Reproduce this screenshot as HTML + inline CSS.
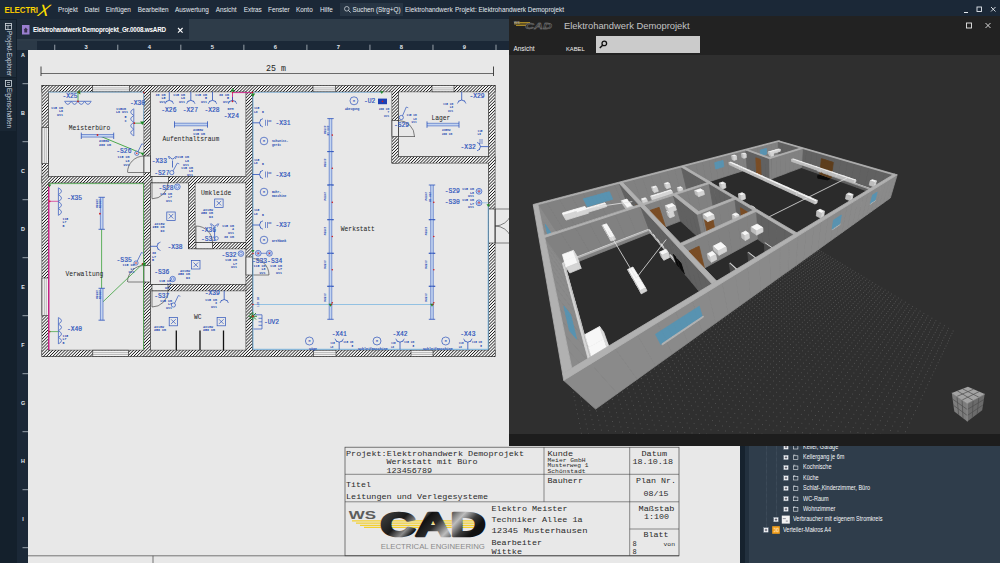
<!DOCTYPE html>
<html lang="de">
<head>
<meta charset="utf-8">
<title>ELECTRIX - Elektrohandwerk Demoprojekt</title>
<style>
*{box-sizing:border-box;margin:0;padding:0}
html,body{width:1000px;height:563px;overflow:hidden;background:#e8e8e8;font-family:"Liberation Sans",sans-serif;}
.abs{position:absolute}
#app{position:relative;width:1000px;height:563px;overflow:hidden;background:#e8e8e8}
#menubar{left:0;top:0;width:1000px;height:19px;background:#1b2837;color:#e3e8ee}
#menubar span,#menubar div{position:absolute;white-space:nowrap}
.mi{top:5px;font-size:6.4px;line-height:9px;color:#e6ebf0}
#sidebar{left:0;top:19px;width:17px;height:544px;background:#14202c}
#tabbar{left:17px;top:19px;width:983px;height:22px;background:#2e3c49}
#tab{left:0;top:0;width:172px;height:20px;background:#1f2c3a}
#rulertop{left:17px;top:40.6px;width:983px;height:9.4px;background:#1b2837}
#rulercorner{left:17px;top:41px;width:20px;height:9px;background:#2b3947}
#rulerleft{left:17px;top:50px;width:11px;height:513px;background:#1b2837}
#canvas{left:28px;top:50px;width:711px;height:513px;background:#e8e8e8;overflow:hidden}
#rightstrip{left:739.5px;top:430px;width:10px;height:133px;background:linear-gradient(90deg,#16222e 0,#16222e 45%,#22303e 45%,#22303e 100%)}
#treepanel{left:749px;top:430px;width:251px;height:133px;background:#2f3d4b;overflow:hidden}
#win3d{left:509px;top:15.5px;width:491px;height:430.5px;background:#2f2f2f;overflow:hidden}
#win3dtitle{left:0;top:0;width:491px;height:39.3px;background:#222222}
#win3dstatus{left:0;top:418px;width:491px;height:12.5px;background:#1d1d1d}
.vt{position:absolute;white-space:nowrap;transform-origin:0 0;transform:rotate(90deg);font-size:6.3px;line-height:8px;color:#d4dbe2}
.tree{position:absolute;white-space:nowrap;font-size:6.3px;line-height:8px;color:#f6f8fa}
</style>
</head>
<body>
<div id="app">
<div id="canvas" class="abs">
<svg class="abs" style="left:0;top:0" width="711" height="513" viewBox="28 50 711 513">
<defs><pattern id="hat" width="2.2" height="2.2" patternUnits="userSpaceOnUse" patternTransform="rotate(-45)"><rect width="2.2" height="2.2" fill="#f4f4f4"/><line x1="0" y1="1.1" x2="2.2" y2="1.1" stroke="#1a1a1a" stroke-width="0.75"/></pattern></defs>
<line x1="41.00" y1="73.50" x2="493.50" y2="73.50" stroke="#333" stroke-width="0.70" />
<line x1="41.00" y1="66.50" x2="41.00" y2="76.00" stroke="#333" stroke-width="0.90" />
<line x1="493.50" y1="66.50" x2="493.50" y2="76.00" stroke="#333" stroke-width="0.90" />
<text x="266.00" y="71.30" font-family="Liberation Mono, monospace" font-size="8.30" fill="#222" text-anchor="start" font-weight="normal">25 m</text>
<rect x="42.00" y="85.50" width="453.00" height="6.30" fill="url(#hat)" stroke="none" stroke-width="0.60"/>
<rect x="42.00" y="350.20" width="453.00" height="6.30" fill="url(#hat)" stroke="none" stroke-width="0.60"/>
<rect x="42.00" y="85.50" width="6.30" height="271.00" fill="url(#hat)" stroke="none" stroke-width="0.60"/>
<rect x="488.70" y="85.50" width="6.30" height="271.00" fill="url(#hat)" stroke="none" stroke-width="0.60"/>
<rect x="144.00" y="85.50" width="6.30" height="271.00" fill="url(#hat)" stroke="none" stroke-width="0.60"/>
<rect x="246.00" y="85.50" width="6.30" height="271.00" fill="url(#hat)" stroke="none" stroke-width="0.60"/>
<rect x="42.00" y="176.50" width="210.30" height="6.30" fill="url(#hat)" stroke="none" stroke-width="0.60"/>
<rect x="188.70" y="176.50" width="6.30" height="72.00" fill="url(#hat)" stroke="none" stroke-width="0.60"/>
<rect x="188.70" y="242.50" width="57.30" height="6.30" fill="url(#hat)" stroke="none" stroke-width="0.60"/>
<rect x="144.00" y="284.50" width="102.00" height="6.30" fill="url(#hat)" stroke="none" stroke-width="0.60"/>
<rect x="392.00" y="85.50" width="6.30" height="77.50" fill="url(#hat)" stroke="none" stroke-width="0.60"/>
<rect x="392.00" y="156.70" width="103.00" height="6.30" fill="url(#hat)" stroke="none" stroke-width="0.60"/>
<rect x="42.00" y="85.50" width="453.00" height="6.30" fill="none" stroke="#222" stroke-width="0.70"/>
<rect x="42.00" y="350.20" width="453.00" height="6.30" fill="none" stroke="#222" stroke-width="0.70"/>
<rect x="42.00" y="85.50" width="6.30" height="271.00" fill="none" stroke="#222" stroke-width="0.70"/>
<rect x="488.70" y="85.50" width="6.30" height="271.00" fill="none" stroke="#222" stroke-width="0.70"/>
<rect x="144.00" y="85.50" width="6.30" height="271.00" fill="none" stroke="#222" stroke-width="0.70"/>
<rect x="246.00" y="85.50" width="6.30" height="271.00" fill="none" stroke="#222" stroke-width="0.70"/>
<rect x="42.00" y="176.50" width="210.30" height="6.30" fill="none" stroke="#222" stroke-width="0.70"/>
<rect x="188.70" y="176.50" width="6.30" height="72.00" fill="none" stroke="#222" stroke-width="0.70"/>
<rect x="188.70" y="242.50" width="57.30" height="6.30" fill="none" stroke="#222" stroke-width="0.70"/>
<rect x="144.00" y="284.50" width="102.00" height="6.30" fill="none" stroke="#222" stroke-width="0.70"/>
<rect x="392.00" y="85.50" width="6.30" height="77.50" fill="none" stroke="#222" stroke-width="0.70"/>
<rect x="392.00" y="156.70" width="103.00" height="6.30" fill="none" stroke="#222" stroke-width="0.70"/>
<rect x="42.35" y="85.85" width="452.30" height="5.60" fill="url(#hat)" stroke="none" stroke-width="0.60"/>
<rect x="42.35" y="350.55" width="452.30" height="5.60" fill="url(#hat)" stroke="none" stroke-width="0.60"/>
<rect x="42.35" y="85.85" width="5.60" height="270.30" fill="url(#hat)" stroke="none" stroke-width="0.60"/>
<rect x="489.05" y="85.85" width="5.60" height="270.30" fill="url(#hat)" stroke="none" stroke-width="0.60"/>
<rect x="144.35" y="85.85" width="5.60" height="270.30" fill="url(#hat)" stroke="none" stroke-width="0.60"/>
<rect x="246.35" y="85.85" width="5.60" height="270.30" fill="url(#hat)" stroke="none" stroke-width="0.60"/>
<rect x="42.35" y="176.85" width="209.60" height="5.60" fill="url(#hat)" stroke="none" stroke-width="0.60"/>
<rect x="189.05" y="176.85" width="5.60" height="71.30" fill="url(#hat)" stroke="none" stroke-width="0.60"/>
<rect x="189.05" y="242.85" width="56.60" height="5.60" fill="url(#hat)" stroke="none" stroke-width="0.60"/>
<rect x="144.35" y="284.85" width="101.30" height="5.60" fill="url(#hat)" stroke="none" stroke-width="0.60"/>
<rect x="392.35" y="85.85" width="5.60" height="76.80" fill="url(#hat)" stroke="none" stroke-width="0.60"/>
<rect x="392.35" y="157.05" width="102.30" height="5.60" fill="url(#hat)" stroke="none" stroke-width="0.60"/>
<rect x="92.50" y="85.50" width="37.00" height="6.30" fill="#f2f2f2" stroke="#222" stroke-width="0.60"/>
<line x1="92.50" y1="87.89" x2="129.50" y2="87.89" stroke="#666" stroke-width="0.40" />
<line x1="92.50" y1="89.78" x2="129.50" y2="89.78" stroke="#666" stroke-width="0.40" />
<rect x="313.00" y="85.50" width="22.50" height="6.30" fill="#f2f2f2" stroke="#222" stroke-width="0.60"/>
<line x1="313.00" y1="87.89" x2="335.50" y2="87.89" stroke="#666" stroke-width="0.40" />
<line x1="313.00" y1="89.78" x2="335.50" y2="89.78" stroke="#666" stroke-width="0.40" />
<rect x="432.00" y="85.50" width="22.00" height="6.30" fill="#f2f2f2" stroke="#222" stroke-width="0.60"/>
<line x1="432.00" y1="87.89" x2="454.00" y2="87.89" stroke="#666" stroke-width="0.40" />
<line x1="432.00" y1="89.78" x2="454.00" y2="89.78" stroke="#666" stroke-width="0.40" />
<rect x="92.80" y="350.20" width="35.50" height="6.30" fill="#f2f2f2" stroke="#222" stroke-width="0.60"/>
<line x1="92.80" y1="352.59" x2="128.30" y2="352.59" stroke="#666" stroke-width="0.40" />
<line x1="92.80" y1="354.48" x2="128.30" y2="354.48" stroke="#666" stroke-width="0.40" />
<rect x="313.60" y="350.20" width="22.40" height="6.30" fill="#f2f2f2" stroke="#222" stroke-width="0.60"/>
<line x1="313.60" y1="352.59" x2="336.00" y2="352.59" stroke="#666" stroke-width="0.40" />
<line x1="313.60" y1="354.48" x2="336.00" y2="354.48" stroke="#666" stroke-width="0.40" />
<rect x="411.00" y="350.20" width="22.00" height="6.30" fill="#f2f2f2" stroke="#222" stroke-width="0.60"/>
<line x1="411.00" y1="352.59" x2="433.00" y2="352.59" stroke="#666" stroke-width="0.40" />
<line x1="411.00" y1="354.48" x2="433.00" y2="354.48" stroke="#666" stroke-width="0.40" />
<rect x="42.00" y="127.50" width="6.30" height="36.20" fill="#f2f2f2" stroke="#222" stroke-width="0.60"/>
<line x1="44.39" y1="127.50" x2="44.39" y2="163.70" stroke="#666" stroke-width="0.40" />
<line x1="46.28" y1="127.50" x2="46.28" y2="163.70" stroke="#666" stroke-width="0.40" />
<rect x="42.00" y="278.00" width="6.30" height="37.60" fill="#f2f2f2" stroke="#222" stroke-width="0.60"/>
<line x1="44.39" y1="278.00" x2="44.39" y2="315.60" stroke="#666" stroke-width="0.40" />
<line x1="46.28" y1="278.00" x2="46.28" y2="315.60" stroke="#666" stroke-width="0.40" />
<rect x="144.00" y="156.00" width="6.30" height="16.50" fill="#ececec" stroke="#222" stroke-width="0.60"/>
<line x1="128.00" y1="172.50" x2="144.00" y2="172.50" stroke="#333" stroke-width="0.60" />
<path d="M127.50 172.50A16.50 16.50 0 0 1 144.00 156.00" stroke="#333" stroke-width="0.60" fill="none"/>
<rect x="152.00" y="176.50" width="16.50" height="6.30" fill="#ececec" stroke="#222" stroke-width="0.60"/>
<line x1="152.00" y1="182.80" x2="152.00" y2="198.50" stroke="#333" stroke-width="0.60" />
<path d="M152.00 198.80A16.00 16.00 0 0 0 168.00 182.80" stroke="#333" stroke-width="0.60" fill="none"/>
<rect x="144.00" y="265.50" width="6.30" height="16.50" fill="#ececec" stroke="#222" stroke-width="0.60"/>
<line x1="128.00" y1="282.00" x2="144.00" y2="282.00" stroke="#333" stroke-width="0.60" />
<path d="M127.50 282.00A16.50 16.50 0 0 1 144.00 265.50" stroke="#333" stroke-width="0.60" fill="none"/>
<rect x="196.00" y="242.50" width="16.50" height="6.30" fill="#ececec" stroke="#222" stroke-width="0.60"/>
<line x1="196.00" y1="226.00" x2="196.00" y2="242.50" stroke="#333" stroke-width="0.60" />
<path d="M196.00 226.00A16.50 16.50 0 0 1 212.50 242.50" stroke="#333" stroke-width="0.60" fill="none"/>
<rect x="152.00" y="284.50" width="16.00" height="6.30" fill="#ececec" stroke="#222" stroke-width="0.60"/>
<line x1="152.00" y1="291.00" x2="152.00" y2="307.00" stroke="#333" stroke-width="0.60" />
<path d="M152.00 307.00A16.00 16.00 0 0 0 168.00 291.00" stroke="#333" stroke-width="0.60" fill="none"/>
<rect x="246.00" y="257.00" width="6.30" height="18.00" fill="#ececec" stroke="#222" stroke-width="0.60"/>
<line x1="252.50" y1="275.00" x2="269.00" y2="275.00" stroke="#333" stroke-width="0.60" />
<path d="M252.50 258.50A16.50 16.50 0 0 1 269.00 275.00" stroke="#333" stroke-width="0.60" fill="none"/>
<rect x="392.00" y="120.50" width="6.30" height="16.00" fill="#ececec" stroke="#222" stroke-width="0.60"/>
<line x1="398.50" y1="136.50" x2="415.00" y2="136.50" stroke="#333" stroke-width="0.60" />
<path d="M398.50 120.50A16.00 16.00 0 0 1 414.50 136.50" stroke="#333" stroke-width="0.60" fill="none"/>
<rect x="488.70" y="209.00" width="6.30" height="34.00" fill="#ececec" stroke="#222" stroke-width="0.60"/>
<path d="M495 209H511M495 243H511" stroke="#333" stroke-width="0.60" fill="none"/>
<path d="M495.00 226.00A17.00 17.00 0 0 0 510.97 214.81" stroke="#333" stroke-width="0.60" fill="none"/>
<path d="M495.00 226.00A17.00 17.00 0 0 1 510.97 237.19" stroke="#333" stroke-width="0.60" fill="none"/>
<line x1="495.00" y1="209.00" x2="495.00" y2="243.00" stroke="#333" stroke-width="0.50" />
<line x1="176.30" y1="330.50" x2="176.30" y2="350.30" stroke="#111" stroke-width="1.30" />
<line x1="200.00" y1="330.50" x2="200.00" y2="350.30" stroke="#111" stroke-width="1.30" />
<line x1="223.50" y1="330.50" x2="223.50" y2="350.30" stroke="#111" stroke-width="1.30" />
<line x1="48.80" y1="184.00" x2="48.80" y2="350.00" stroke="#d0208a" stroke-width="1.40" />
<path d="M49 183.6H143.5V350" stroke="#3aa03a" stroke-width="0.70" fill="none"/>
<path d="M253 92V349.3H488.2V206" stroke="#6fb0e0" stroke-width="0.90" fill="none"/>
<line x1="253.00" y1="304.50" x2="432.00" y2="304.50" stroke="#6fb0e0" stroke-width="0.70" />
<path d="M48.4 92.2H143.6" stroke="#6fb0e0" stroke-width="0.60" fill="none"/>
<line x1="253.00" y1="92.40" x2="381.80" y2="92.40" stroke="#6fb0e0" stroke-width="0.60" />
<path d="M143.6 92.2V123" stroke="#6fb0e0" stroke-width="0.60" fill="none"/>
<path d="M232.5 101.3V92.6H252.5" stroke="#d0208a" stroke-width="0.90" fill="none"/>
<line x1="78.00" y1="92.00" x2="78.00" y2="101.30" stroke="#3aa03a" stroke-width="0.80" />
<line x1="97.50" y1="135.00" x2="142.50" y2="153.70" stroke="#3aa03a" stroke-width="0.90" />
<line x1="101.60" y1="213.70" x2="101.60" y2="303.40" stroke="#3aa03a" stroke-width="0.80" />
<line x1="101.30" y1="303.40" x2="142.50" y2="264.00" stroke="#3aa03a" stroke-width="0.80" />
<line x1="134.30" y1="123.20" x2="142.00" y2="123.20" stroke="#3aa03a" stroke-width="0.80" />
<text x="62.50" y="98.30" font-family="Liberation Mono, monospace" font-size="6.3" fill="#2c53bb" stroke="#2c53bb" stroke-width="0.18">-X25</text>
<line x1="64.50" y1="101.30" x2="91.30" y2="101.30" stroke="#2c53bb" stroke-width="0.70" />
<path d="M64.77 101.60q3.08 5.60 6.16 0" stroke="#2c53bb" stroke-width="0.70" fill="none"/>
<path d="M71.47 101.60q3.08 5.60 6.16 0" stroke="#2c53bb" stroke-width="0.70" fill="none"/>
<path d="M78.17 101.60q3.08 5.60 6.16 0" stroke="#2c53bb" stroke-width="0.70" fill="none"/>
<path d="M84.87 101.60q3.08 5.60 6.16 0" stroke="#2c53bb" stroke-width="0.70" fill="none"/>
<circle cx="78.00" cy="101.30" r="0.90" fill="#d02020" stroke="none" stroke-width="0.00"/>
<polygon points="80.32,90.10 80.32,94.50 76.80,92.30" fill="#1f8a2a"/>
<text x="62.88" y="108.50" font-family="Liberation Mono, monospace" font-size="3.30" fill="#2448b0" text-anchor="end" font-weight="bold">115 cm</text>
<text x="62.88" y="112.20" font-family="Liberation Mono, monospace" font-size="3.30" fill="#2448b0" text-anchor="end" font-weight="bold">L6</text>
<text x="62.88" y="115.90" font-family="Liberation Mono, monospace" font-size="3.30" fill="#2448b0" text-anchor="end" font-weight="bold">UV1</text>
<text x="130.00" y="104.50" font-family="Liberation Mono, monospace" font-size="6.3" fill="#2c53bb" stroke="#2c53bb" stroke-width="0.18">-X30</text>
<line x1="133.80" y1="108.70" x2="133.80" y2="136.00" stroke="#2c53bb" stroke-width="0.70" />
<path d="M133.50 108.97q-5.60 3.14 0 6.28" stroke="#2c53bb" stroke-width="0.70" fill="none"/>
<path d="M133.50 115.80q-5.60 3.14 0 6.28" stroke="#2c53bb" stroke-width="0.70" fill="none"/>
<path d="M133.50 122.62q-5.60 3.14 0 6.28" stroke="#2c53bb" stroke-width="0.70" fill="none"/>
<path d="M133.50 129.45q-5.60 3.14 0 6.28" stroke="#2c53bb" stroke-width="0.70" fill="none"/>
<circle cx="134.30" cy="123.20" r="0.90" fill="#d02020" stroke="none" stroke-width="0.00"/>
<polygon points="140.10,121.38 144.50,121.38 142.30,124.90" fill="#1f8a2a"/>
<circle cx="143.80" cy="92.60" r="0.80" fill="#d02020" stroke="none" stroke-width="0.00"/>
<circle cx="79.00" cy="92.20" r="0.70" fill="#d02020" stroke="none" stroke-width="0.00"/>
<text x="116.00" y="109.50" font-family="Liberation Mono, monospace" font-size="3.30" fill="#2448b0" text-anchor="start" font-weight="bold">115cm</text>
<text x="116.00" y="113.20" font-family="Liberation Mono, monospace" font-size="3.30" fill="#2448b0" text-anchor="start" font-weight="bold">L6 UV1</text>
<text x="124.50" y="118.00" font-family="Liberation Mono, monospace" font-size="3.30" fill="#2448b0" text-anchor="start" font-weight="bold">5</text>
<text x="124.50" y="121.70" font-family="Liberation Mono, monospace" font-size="3.30" fill="#2448b0" text-anchor="start" font-weight="bold">x</text>
<rect x="81.30" y="134.50" width="32.40" height="2.60" fill="#c3d4f0" stroke="none" stroke-width="0.60"/>
<line x1="81.30" y1="134.50" x2="113.70" y2="134.50" stroke="#2c53bb" stroke-width="0.55" />
<line x1="81.30" y1="137.10" x2="113.70" y2="137.10" stroke="#2c53bb" stroke-width="0.55" />
<line x1="81.30" y1="132.60" x2="81.30" y2="139.00" stroke="#2c53bb" stroke-width="0.80" />
<line x1="113.70" y1="132.60" x2="113.70" y2="139.00" stroke="#2c53bb" stroke-width="0.80" />
<circle cx="97.50" cy="135.00" r="0.90" fill="#d02020" stroke="none" stroke-width="0.00"/>
<text x="99.00" y="142.30" font-family="Liberation Mono, monospace" font-size="3.30" fill="#2448b0" text-anchor="start" font-weight="bold">2x58W</text>
<text x="99.00" y="146.00" font-family="Liberation Mono, monospace" font-size="3.30" fill="#2448b0" text-anchor="start" font-weight="bold">200 cm</text>
<text x="116.30" y="152.80" font-family="Liberation Mono, monospace" font-size="6.3" fill="#2c53bb" stroke="#2c53bb" stroke-width="0.18">-S26</text>
<circle cx="136.80" cy="153.30" r="2.10" fill="#e8e8e8" stroke="#2c53bb" stroke-width="0.70"/>
<circle cx="136.80" cy="153.30" r="0.80" fill="#d02020" stroke="none" stroke-width="0.00"/>
<line x1="138.00" y1="151.60" x2="141.80" y2="143.80" stroke="#2c53bb" stroke-width="0.70" />
<line x1="141.80" y1="143.80" x2="143.80" y2="144.60" stroke="#2c53bb" stroke-width="0.60" />
<polygon points="140.80,152.82 144.40,152.82 142.60,155.70" fill="#1f8a2a"/>
<text x="129.38" y="158.20" font-family="Liberation Mono, monospace" font-size="3.30" fill="#2448b0" text-anchor="end" font-weight="bold">115 cm</text>
<text x="129.38" y="161.90" font-family="Liberation Mono, monospace" font-size="3.30" fill="#2448b0" text-anchor="end" font-weight="bold">L6</text>
<text x="129.38" y="165.60" font-family="Liberation Mono, monospace" font-size="3.30" fill="#2448b0" text-anchor="end" font-weight="bold">UV1</text>
<line x1="169.30" y1="91.80" x2="169.30" y2="100.40" stroke="#2c53bb" stroke-width="0.80" />
<path d="M166.10 101.60q3.20 -2.60 6.40 0" stroke="#2c53bb" stroke-width="0.80" fill="none"/>
<path d="M166.70 100.80l-1.6 3M171.90 100.80l1.6 3" stroke="#2c53bb" stroke-width="0.70" fill="none"/>
<text x="161.30" y="112.20" font-family="Liberation Mono, monospace" font-size="6.3" fill="#2c53bb" stroke="#2c53bb" stroke-width="0.18">-X26</text>
<line x1="190.80" y1="91.80" x2="190.80" y2="100.40" stroke="#2c53bb" stroke-width="0.80" />
<path d="M187.60 101.60q3.20 -2.60 6.40 0" stroke="#2c53bb" stroke-width="0.80" fill="none"/>
<path d="M188.20 100.80l-1.6 3M193.40 100.80l1.6 3" stroke="#2c53bb" stroke-width="0.70" fill="none"/>
<text x="182.80" y="112.20" font-family="Liberation Mono, monospace" font-size="6.3" fill="#2c53bb" stroke="#2c53bb" stroke-width="0.18">-X27</text>
<line x1="212.50" y1="91.80" x2="212.50" y2="100.40" stroke="#2c53bb" stroke-width="0.80" />
<path d="M209.30 101.60q3.20 -2.60 6.40 0" stroke="#2c53bb" stroke-width="0.80" fill="none"/>
<path d="M209.90 100.80l-1.6 3M215.10 100.80l1.6 3" stroke="#2c53bb" stroke-width="0.70" fill="none"/>
<text x="204.50" y="112.20" font-family="Liberation Mono, monospace" font-size="6.3" fill="#2c53bb" stroke="#2c53bb" stroke-width="0.18">-X28</text>
<text x="165.38" y="95.50" font-family="Liberation Mono, monospace" font-size="3.30" fill="#2448b0" text-anchor="end" font-weight="bold">30 cm</text>
<text x="165.38" y="99.20" font-family="Liberation Mono, monospace" font-size="3.30" fill="#2448b0" text-anchor="end" font-weight="bold">L5</text>
<text x="165.38" y="102.90" font-family="Liberation Mono, monospace" font-size="3.30" fill="#2448b0" text-anchor="end" font-weight="bold">UV1</text>
<text x="184.88" y="95.50" font-family="Liberation Mono, monospace" font-size="3.30" fill="#2448b0" text-anchor="end" font-weight="bold">115 cm</text>
<text x="184.88" y="99.20" font-family="Liberation Mono, monospace" font-size="3.30" fill="#2448b0" text-anchor="end" font-weight="bold">L6</text>
<text x="184.88" y="102.90" font-family="Liberation Mono, monospace" font-size="3.30" fill="#2448b0" text-anchor="end" font-weight="bold">UV1</text>
<text x="206.88" y="95.50" font-family="Liberation Mono, monospace" font-size="3.30" fill="#2448b0" text-anchor="end" font-weight="bold">115 cm</text>
<text x="206.88" y="99.20" font-family="Liberation Mono, monospace" font-size="3.30" fill="#2448b0" text-anchor="end" font-weight="bold">5</text>
<text x="206.88" y="102.90" font-family="Liberation Mono, monospace" font-size="3.30" fill="#2448b0" text-anchor="end" font-weight="bold">UV1</text>
<text x="228.88" y="95.50" font-family="Liberation Mono, monospace" font-size="3.30" fill="#2448b0" text-anchor="end" font-weight="bold">30 cm</text>
<text x="228.88" y="99.20" font-family="Liberation Mono, monospace" font-size="3.30" fill="#2448b0" text-anchor="end" font-weight="bold">5</text>
<text x="228.88" y="102.90" font-family="Liberation Mono, monospace" font-size="3.30" fill="#2448b0" text-anchor="end" font-weight="bold">UV1</text>
<line x1="232.50" y1="97.00" x2="232.50" y2="100.40" stroke="#2c53bb" stroke-width="0.80" />
<path d="M229.30 101.60q3.20 -2.60 6.40 0" stroke="#2c53bb" stroke-width="0.80" fill="none"/>
<path d="M229.90 100.80l-1.6 3M235.10 100.80l1.6 3" stroke="#2c53bb" stroke-width="0.70" fill="none"/>
<circle cx="232.50" cy="101.30" r="0.90" fill="#d02020" stroke="none" stroke-width="0.00"/>
<polygon points="230.30,91.62 234.70,91.62 232.50,88.10" fill="#1f8a2a"/>
<polygon points="250.80,93.48 255.20,93.48 253.00,97.00" fill="#1f8a2a"/>
<circle cx="252.60" cy="92.60" r="0.80" fill="#d02020" stroke="none" stroke-width="0.00"/>
<circle cx="232.50" cy="92.60" r="0.70" fill="#d02020" stroke="none" stroke-width="0.00"/>
<text x="227.50" y="109.50" font-family="Liberation Mono, monospace" font-size="3.40" fill="#2448b0" text-anchor="start" font-weight="bold">NYM</text>
<text x="223.80" y="118.30" font-family="Liberation Mono, monospace" font-size="6.3" fill="#2c53bb" stroke="#2c53bb" stroke-width="0.18">-X24</text>
<rect x="174.50" y="123.20" width="33.00" height="2.60" fill="#c3d4f0" stroke="none" stroke-width="0.60"/>
<line x1="174.50" y1="123.20" x2="207.50" y2="123.20" stroke="#2c53bb" stroke-width="0.55" />
<line x1="174.50" y1="125.80" x2="207.50" y2="125.80" stroke="#2c53bb" stroke-width="0.55" />
<line x1="174.50" y1="121.30" x2="174.50" y2="127.70" stroke="#2c53bb" stroke-width="0.80" />
<line x1="207.50" y1="121.30" x2="207.50" y2="127.70" stroke="#2c53bb" stroke-width="0.80" />
<text x="193.00" y="130.80" font-family="Liberation Mono, monospace" font-size="3.30" fill="#2448b0" text-anchor="start" font-weight="bold">2x58W</text>
<text x="193.00" y="134.50" font-family="Liberation Mono, monospace" font-size="3.30" fill="#2448b0" text-anchor="start" font-weight="bold">115 cm</text>
<text x="151.80" y="162.50" font-family="Liberation Mono, monospace" font-size="6.3" fill="#2c53bb" stroke="#2c53bb" stroke-width="0.18">-X33</text>
<path d="M172.5 167.5V160.5M169.3 156.3q3.2 5.5 6.4 0" stroke="#2c53bb" stroke-width="0.80" fill="none"/>
<path d="M169.6 159l-1.4 -3M175.4 159l1.4 -3" stroke="#2c53bb" stroke-width="0.70" fill="none"/>
<text x="188.88" y="158.30" font-family="Liberation Mono, monospace" font-size="3.30" fill="#2448b0" text-anchor="end" font-weight="bold">115 cm</text>
<text x="188.88" y="162.00" font-family="Liberation Mono, monospace" font-size="3.30" fill="#2448b0" text-anchor="end" font-weight="bold">L6</text>
<text x="188.88" y="165.70" font-family="Liberation Mono, monospace" font-size="3.30" fill="#2448b0" text-anchor="end" font-weight="bold">UV1</text>
<text x="154.30" y="175.30" font-family="Liberation Mono, monospace" font-size="6.3" fill="#2c53bb" stroke="#2c53bb" stroke-width="0.18">-S27</text>
<circle cx="171.80" cy="172.60" r="2.10" fill="#e8e8e8" stroke="#2c53bb" stroke-width="0.70"/>
<line x1="173.00" y1="170.90" x2="177.30" y2="163.10" stroke="#2c53bb" stroke-width="0.70" />
<line x1="177.30" y1="163.10" x2="179.30" y2="163.90" stroke="#2c53bb" stroke-width="0.60" />
<text x="192.88" y="168.50" font-family="Liberation Mono, monospace" font-size="3.30" fill="#2448b0" text-anchor="end" font-weight="bold">115 cm</text>
<text x="192.88" y="172.20" font-family="Liberation Mono, monospace" font-size="3.30" fill="#2448b0" text-anchor="end" font-weight="bold">L6</text>
<text x="192.88" y="175.90" font-family="Liberation Mono, monospace" font-size="3.30" fill="#2448b0" text-anchor="end" font-weight="bold">UV1</text>
<text x="158.50" y="189.80" font-family="Liberation Mono, monospace" font-size="6.3" fill="#2c53bb" stroke="#2c53bb" stroke-width="0.18">-S28</text>
<circle cx="177.30" cy="186.80" r="2.90" fill="#dfe8f8" stroke="#2c53bb" stroke-width="0.70"/>
<circle cx="177.30" cy="186.80" r="1.45" fill="none" stroke="#2c53bb" stroke-width="0.50"/>
<text x="171.88" y="194.50" font-family="Liberation Mono, monospace" font-size="3.30" fill="#2448b0" text-anchor="end" font-weight="bold">115 cm</text>
<text x="171.88" y="198.20" font-family="Liberation Mono, monospace" font-size="3.30" fill="#2448b0" text-anchor="end" font-weight="bold">L7</text>
<text x="171.88" y="201.90" font-family="Liberation Mono, monospace" font-size="3.30" fill="#2448b0" text-anchor="end" font-weight="bold">UV1</text>
<rect x="166.80" y="212.00" width="8.40" height="8.40" fill="#e8e8e8" stroke="#2c53bb" stroke-width="0.70"/>
<path d="M168.69 213.89l4.62 4.62M173.31 213.89l-4.62 4.62" stroke="#2c53bb" stroke-width="0.70" fill="none"/>
<rect x="191.60" y="260.60" width="8.40" height="8.40" fill="#e8e8e8" stroke="#2c53bb" stroke-width="0.70"/>
<path d="M193.49 262.49l4.62 4.62M198.11 262.49l-4.62 4.62" stroke="#2c53bb" stroke-width="0.70" fill="none"/>
<rect x="214.70" y="199.00" width="8.40" height="8.40" fill="#e8e8e8" stroke="#2c53bb" stroke-width="0.70"/>
<path d="M216.59 200.89l4.62 4.62M221.21 200.89l-4.62 4.62" stroke="#2c53bb" stroke-width="0.70" fill="none"/>
<rect x="169.20" y="317.40" width="8.40" height="8.40" fill="#e8e8e8" stroke="#2c53bb" stroke-width="0.70"/>
<path d="M171.09 319.29l4.62 4.62M175.71 319.29l-4.62 4.62" stroke="#2c53bb" stroke-width="0.70" fill="none"/>
<rect x="217.10" y="317.40" width="8.40" height="8.40" fill="#e8e8e8" stroke="#2c53bb" stroke-width="0.70"/>
<path d="M218.99 319.29l4.62 4.62M223.61 319.29l-4.62 4.62" stroke="#2c53bb" stroke-width="0.70" fill="none"/>
<text x="164.38" y="224.50" font-family="Liberation Mono, monospace" font-size="3.30" fill="#2448b0" text-anchor="end" font-weight="bold">4x18W</text>
<text x="164.38" y="228.20" font-family="Liberation Mono, monospace" font-size="3.30" fill="#2448b0" text-anchor="end" font-weight="bold">250 cm</text>
<text x="164.38" y="231.90" font-family="Liberation Mono, monospace" font-size="3.30" fill="#2448b0" text-anchor="end" font-weight="bold">D3</text>
<text x="189.88" y="271.50" font-family="Liberation Mono, monospace" font-size="3.30" fill="#2448b0" text-anchor="end" font-weight="bold">4x18W</text>
<text x="189.88" y="275.20" font-family="Liberation Mono, monospace" font-size="3.30" fill="#2448b0" text-anchor="end" font-weight="bold">250 cm</text>
<text x="189.88" y="278.90" font-family="Liberation Mono, monospace" font-size="3.30" fill="#2448b0" text-anchor="end" font-weight="bold">D3</text>
<text x="212.88" y="210.50" font-family="Liberation Mono, monospace" font-size="3.30" fill="#2448b0" text-anchor="end" font-weight="bold">4x18W</text>
<text x="212.88" y="214.20" font-family="Liberation Mono, monospace" font-size="3.30" fill="#2448b0" text-anchor="end" font-weight="bold">250 cm</text>
<text x="212.88" y="217.90" font-family="Liberation Mono, monospace" font-size="3.30" fill="#2448b0" text-anchor="end" font-weight="bold">D3</text>
<text x="154.00" y="327.50" font-family="Liberation Mono, monospace" font-size="3.30" fill="#2448b0" text-anchor="start" font-weight="bold">4x18W</text>
<text x="154.00" y="331.20" font-family="Liberation Mono, monospace" font-size="3.30" fill="#2448b0" text-anchor="start" font-weight="bold">250 cm</text>
<text x="203.00" y="327.50" font-family="Liberation Mono, monospace" font-size="3.30" fill="#2448b0" text-anchor="start" font-weight="bold">4x18W</text>
<text x="203.00" y="331.20" font-family="Liberation Mono, monospace" font-size="3.30" fill="#2448b0" text-anchor="start" font-weight="bold">250 cm</text>
<line x1="150.30" y1="246.30" x2="157.10" y2="246.30" stroke="#2c53bb" stroke-width="0.80" />
<path d="M158.30 243.10q-2.60 3.20 0 6.40" stroke="#2c53bb" stroke-width="0.80" fill="none"/>
<path d="M157.50 243.70l3 -1.6M157.50 248.90l3 1.6" stroke="#2c53bb" stroke-width="0.70" fill="none"/>
<text x="167.40" y="249.00" font-family="Liberation Mono, monospace" font-size="6.3" fill="#2c53bb" stroke="#2c53bb" stroke-width="0.18">-X38</text>
<text x="152.00" y="254.00" font-family="Liberation Mono, monospace" font-size="3.30" fill="#2448b0" text-anchor="start" font-weight="bold">30</text>
<text x="152.00" y="257.70" font-family="Liberation Mono, monospace" font-size="3.30" fill="#2448b0" text-anchor="start" font-weight="bold">L7</text>
<text x="152.00" y="261.40" font-family="Liberation Mono, monospace" font-size="3.30" fill="#2448b0" text-anchor="start" font-weight="bold">B</text>
<text x="154.20" y="274.30" font-family="Liberation Mono, monospace" font-size="6.3" fill="#2c53bb" stroke="#2c53bb" stroke-width="0.18">-S36</text>
<circle cx="172.70" cy="279.00" r="2.70" fill="#dfe8f8" stroke="#2c53bb" stroke-width="0.70"/>
<circle cx="172.70" cy="279.00" r="1.35" fill="none" stroke="#2c53bb" stroke-width="0.50"/>
<text x="170.88" y="281.50" font-family="Liberation Mono, monospace" font-size="3.30" fill="#2448b0" text-anchor="end" font-weight="bold">115 cm</text>
<text x="170.88" y="285.20" font-family="Liberation Mono, monospace" font-size="3.30" fill="#2448b0" text-anchor="end" font-weight="bold">L7</text>
<text x="170.88" y="288.90" font-family="Liberation Mono, monospace" font-size="3.30" fill="#2448b0" text-anchor="end" font-weight="bold">UV1</text>
<text x="221.40" y="257.20" font-family="Liberation Mono, monospace" font-size="6.3" fill="#2c53bb" stroke="#2c53bb" stroke-width="0.18">-S32</text>
<circle cx="240.90" cy="253.60" r="2.80" fill="#dfe8f8" stroke="#2c53bb" stroke-width="0.70"/>
<circle cx="240.90" cy="253.60" r="1.40" fill="none" stroke="#2c53bb" stroke-width="0.50"/>
<text x="236.88" y="261.00" font-family="Liberation Mono, monospace" font-size="3.30" fill="#2448b0" text-anchor="end" font-weight="bold">115 cm</text>
<text x="236.88" y="264.70" font-family="Liberation Mono, monospace" font-size="3.30" fill="#2448b0" text-anchor="end" font-weight="bold">L7</text>
<text x="236.88" y="268.40" font-family="Liberation Mono, monospace" font-size="3.30" fill="#2448b0" text-anchor="end" font-weight="bold">UV1</text>
<text x="201.00" y="232.40" font-family="Liberation Mono, monospace" font-size="6.3" fill="#2c53bb" stroke="#2c53bb" stroke-width="0.18">-X36</text>
<text x="201.00" y="241.30" font-family="Liberation Mono, monospace" font-size="6.3" fill="#2c53bb" stroke="#2c53bb" stroke-width="0.18">-S31</text>
<path d="M214.6 236V229M211.4 223.5q3.2 5.5 6.4 0" stroke="#2c53bb" stroke-width="0.80" fill="none"/>
<path d="M211.8 226.6l-1.4 -3M217.4 226.6l1.4 -3" stroke="#2c53bb" stroke-width="0.70" fill="none"/>
<circle cx="216.50" cy="238.30" r="1.80" fill="none" stroke="#2c53bb" stroke-width="0.60"/>
<text x="233.88" y="226.50" font-family="Liberation Mono, monospace" font-size="3.30" fill="#2448b0" text-anchor="end" font-weight="bold">115 cm</text>
<text x="233.88" y="230.20" font-family="Liberation Mono, monospace" font-size="3.30" fill="#2448b0" text-anchor="end" font-weight="bold">4</text>
<text x="233.88" y="233.90" font-family="Liberation Mono, monospace" font-size="3.30" fill="#2448b0" text-anchor="end" font-weight="bold">UV1</text>
<text x="233.88" y="237.60" font-family="Liberation Mono, monospace" font-size="3.30" fill="#2448b0" text-anchor="end" font-weight="bold">30 cm</text>
<text x="116.60" y="261.50" font-family="Liberation Mono, monospace" font-size="6.3" fill="#2c53bb" stroke="#2c53bb" stroke-width="0.18">-S35</text>
<circle cx="136.00" cy="263.00" r="2.10" fill="#e8e8e8" stroke="#2c53bb" stroke-width="0.70"/>
<circle cx="136.00" cy="263.00" r="0.80" fill="#d02020" stroke="none" stroke-width="0.00"/>
<line x1="137.20" y1="261.30" x2="141.50" y2="252.50" stroke="#2c53bb" stroke-width="0.70" />
<line x1="141.50" y1="252.50" x2="143.50" y2="253.30" stroke="#2c53bb" stroke-width="0.60" />
<circle cx="142.60" cy="264.00" r="0.90" fill="#d02020" stroke="none" stroke-width="0.00"/>
<polygon points="145.52,262.00 145.52,266.40 142.00,264.20" fill="#1f8a2a"/>
<text x="134.38" y="266.00" font-family="Liberation Mono, monospace" font-size="3.30" fill="#2448b0" text-anchor="end" font-weight="bold">115 cm</text>
<text x="134.38" y="269.70" font-family="Liberation Mono, monospace" font-size="3.30" fill="#2448b0" text-anchor="end" font-weight="bold">L7</text>
<text x="134.38" y="273.40" font-family="Liberation Mono, monospace" font-size="3.30" fill="#2448b0" text-anchor="end" font-weight="bold">UV1</text>
<text x="66.90" y="200.40" font-family="Liberation Mono, monospace" font-size="6.3" fill="#2c53bb" stroke="#2c53bb" stroke-width="0.18">-X35</text>
<line x1="58.40" y1="187.70" x2="58.40" y2="215.50" stroke="#2c53bb" stroke-width="0.70" />
<path d="M58.70 187.98q5.60 3.20 0 6.39" stroke="#2c53bb" stroke-width="0.70" fill="none"/>
<path d="M58.70 194.93q5.60 3.20 0 6.39" stroke="#2c53bb" stroke-width="0.70" fill="none"/>
<path d="M58.70 201.88q5.60 3.20 0 6.39" stroke="#2c53bb" stroke-width="0.70" fill="none"/>
<path d="M58.70 208.83q5.60 3.20 0 6.39" stroke="#2c53bb" stroke-width="0.70" fill="none"/>
<circle cx="49.70" cy="201.30" r="0.90" fill="#d02020" stroke="none" stroke-width="0.00"/>
<line x1="49.70" y1="201.30" x2="58.40" y2="201.30" stroke="#d0208a" stroke-width="0.70" />
<text x="62.50" y="219.50" font-family="Liberation Mono, monospace" font-size="3.20" fill="#2448b0" text-anchor="start" font-weight="bold">115</text>
<text x="62.50" y="223.20" font-family="Liberation Mono, monospace" font-size="3.20" fill="#2448b0" text-anchor="start" font-weight="bold">L7</text>
<text x="62.50" y="226.90" font-family="Liberation Mono, monospace" font-size="3.20" fill="#2448b0" text-anchor="start" font-weight="bold">B</text>
<text x="66.90" y="330.70" font-family="Liberation Mono, monospace" font-size="6.3" fill="#2c53bb" stroke="#2c53bb" stroke-width="0.18">-X40</text>
<line x1="58.40" y1="317.40" x2="58.40" y2="344.00" stroke="#2c53bb" stroke-width="0.70" />
<path d="M58.70 317.67q5.60 3.06 0 6.12" stroke="#2c53bb" stroke-width="0.70" fill="none"/>
<path d="M58.70 324.32q5.60 3.06 0 6.12" stroke="#2c53bb" stroke-width="0.70" fill="none"/>
<path d="M58.70 330.97q5.60 3.06 0 6.12" stroke="#2c53bb" stroke-width="0.70" fill="none"/>
<path d="M58.70 337.62q5.60 3.06 0 6.12" stroke="#2c53bb" stroke-width="0.70" fill="none"/>
<circle cx="49.70" cy="331.60" r="0.90" fill="#d02020" stroke="none" stroke-width="0.00"/>
<line x1="49.70" y1="331.60" x2="58.40" y2="331.60" stroke="#3aa03a" stroke-width="0.70" />
<text x="62.50" y="336.50" font-family="Liberation Mono, monospace" font-size="3.20" fill="#2448b0" text-anchor="start" font-weight="bold">115</text>
<text x="62.50" y="340.20" font-family="Liberation Mono, monospace" font-size="3.20" fill="#2448b0" text-anchor="start" font-weight="bold">L7</text>
<text x="62.50" y="343.90" font-family="Liberation Mono, monospace" font-size="3.20" fill="#2448b0" text-anchor="start" font-weight="bold">B</text>
<rect x="100.40" y="197.30" width="2.60" height="32.00" fill="#c3d4f0" stroke="none" stroke-width="0.60"/>
<line x1="100.40" y1="197.30" x2="100.40" y2="229.30" stroke="#2c53bb" stroke-width="0.55" />
<line x1="103.00" y1="197.30" x2="103.00" y2="229.30" stroke="#2c53bb" stroke-width="0.55" />
<line x1="98.50" y1="197.30" x2="104.90" y2="197.30" stroke="#2c53bb" stroke-width="0.80" />
<line x1="98.50" y1="229.30" x2="104.90" y2="229.30" stroke="#2c53bb" stroke-width="0.80" />
<rect x="100.40" y="288.30" width="2.60" height="31.90" fill="#c3d4f0" stroke="none" stroke-width="0.60"/>
<line x1="100.40" y1="288.30" x2="100.40" y2="320.20" stroke="#2c53bb" stroke-width="0.55" />
<line x1="103.00" y1="288.30" x2="103.00" y2="320.20" stroke="#2c53bb" stroke-width="0.55" />
<line x1="98.50" y1="288.30" x2="104.90" y2="288.30" stroke="#2c53bb" stroke-width="0.80" />
<line x1="98.50" y1="320.20" x2="104.90" y2="320.20" stroke="#2c53bb" stroke-width="0.80" />
<circle cx="99.90" cy="213.70" r="0.90" fill="#d02020" stroke="none" stroke-width="0.00"/>
<text x="95.50" y="199.00" font-family="Liberation Mono, monospace" font-size="3.00" fill="#2c53bb" text-anchor="start" font-weight="bold" transform="rotate(90 95.50 199.00)">2x58W</text>
<text x="99.00" y="199.00" font-family="Liberation Mono, monospace" font-size="3.00" fill="#2c53bb" text-anchor="start" font-weight="bold" transform="rotate(90 99.00 199.00)">200cm</text>
<text x="95.50" y="290.00" font-family="Liberation Mono, monospace" font-size="3.00" fill="#2c53bb" text-anchor="start" font-weight="bold" transform="rotate(90 95.50 290.00)">2x58W</text>
<text x="99.00" y="290.00" font-family="Liberation Mono, monospace" font-size="3.00" fill="#2c53bb" text-anchor="start" font-weight="bold" transform="rotate(90 99.00 290.00)">200cm</text>
<polygon points="47.70,184.42 51.30,184.42 49.50,187.30" fill="#1f8a2a"/>
<text x="154.20" y="298.00" font-family="Liberation Mono, monospace" font-size="6.3" fill="#2c53bb" stroke="#2c53bb" stroke-width="0.18">-S37</text>
<circle cx="173.40" cy="305.00" r="2.10" fill="#e8e8e8" stroke="#2c53bb" stroke-width="0.70"/>
<line x1="174.60" y1="303.30" x2="178.40" y2="295.50" stroke="#2c53bb" stroke-width="0.70" />
<line x1="178.40" y1="295.50" x2="180.40" y2="296.30" stroke="#2c53bb" stroke-width="0.60" />
<text x="171.88" y="301.50" font-family="Liberation Mono, monospace" font-size="3.30" fill="#2448b0" text-anchor="end" font-weight="bold">115 cm</text>
<text x="171.88" y="305.20" font-family="Liberation Mono, monospace" font-size="3.30" fill="#2448b0" text-anchor="end" font-weight="bold">L7</text>
<text x="171.88" y="308.90" font-family="Liberation Mono, monospace" font-size="3.30" fill="#2448b0" text-anchor="end" font-weight="bold">UV1</text>
<text x="204.70" y="295.20" font-family="Liberation Mono, monospace" font-size="6.3" fill="#2c53bb" stroke="#2c53bb" stroke-width="0.18">-X39</text>
<line x1="224.20" y1="290.70" x2="224.20" y2="299.60" stroke="#2c53bb" stroke-width="0.80" />
<path d="M221.00 300.80q3.20 -2.60 6.40 0" stroke="#2c53bb" stroke-width="0.80" fill="none"/>
<path d="M221.60 300.00l-1.6 3M226.80 300.00l1.6 3" stroke="#2c53bb" stroke-width="0.70" fill="none"/>
<text x="216.88" y="300.50" font-family="Liberation Mono, monospace" font-size="3.30" fill="#2448b0" text-anchor="end" font-weight="bold">115 cm</text>
<text x="216.88" y="304.20" font-family="Liberation Mono, monospace" font-size="3.30" fill="#2448b0" text-anchor="end" font-weight="bold">3</text>
<text x="216.88" y="307.90" font-family="Liberation Mono, monospace" font-size="3.30" fill="#2448b0" text-anchor="end" font-weight="bold">UV1</text>
<line x1="252.30" y1="122.80" x2="259.60" y2="122.80" stroke="#2c53bb" stroke-width="0.80" />
<path d="M260.80 119.60q-2.60 3.20 0 6.40" stroke="#2c53bb" stroke-width="0.80" fill="none"/>
<path d="M260.00 120.20l3 -1.6M260.00 125.40l3 1.6" stroke="#2c53bb" stroke-width="0.70" fill="none"/>
<path d="M265.5 119.80v6M267.5 119.80v6" stroke="#2c53bb" stroke-width="0.60" fill="none"/>
<text x="275.50" y="124.80" font-family="Liberation Mono, monospace" font-size="6.3" fill="#2c53bb" stroke="#2c53bb" stroke-width="0.18">-X31</text>
<text x="254.00" y="108.80" font-family="Liberation Mono, monospace" font-size="3.00" fill="#2448b0" text-anchor="start" font-weight="bold">115</text>
<text x="254.00" y="112.50" font-family="Liberation Mono, monospace" font-size="3.00" fill="#2448b0" text-anchor="start" font-weight="bold">L6</text>
<text x="262.00" y="113.30" font-family="Liberation Mono, monospace" font-size="3.00" fill="#2448b0" text-anchor="start" font-weight="bold">B</text>
<text x="268.00" y="121.80" font-family="Liberation Mono, monospace" font-size="2.80" fill="#2448b0" text-anchor="start" font-weight="bold">3x</text>
<line x1="252.30" y1="174.50" x2="259.60" y2="174.50" stroke="#2c53bb" stroke-width="0.80" />
<path d="M260.80 171.30q-2.60 3.20 0 6.40" stroke="#2c53bb" stroke-width="0.80" fill="none"/>
<path d="M260.00 171.90l3 -1.6M260.00 177.10l3 1.6" stroke="#2c53bb" stroke-width="0.70" fill="none"/>
<path d="M265.5 171.50v6M267.5 171.50v6" stroke="#2c53bb" stroke-width="0.60" fill="none"/>
<text x="275.50" y="176.50" font-family="Liberation Mono, monospace" font-size="6.3" fill="#2c53bb" stroke="#2c53bb" stroke-width="0.18">-X34</text>
<text x="254.00" y="160.50" font-family="Liberation Mono, monospace" font-size="3.00" fill="#2448b0" text-anchor="start" font-weight="bold">115</text>
<text x="254.00" y="164.20" font-family="Liberation Mono, monospace" font-size="3.00" fill="#2448b0" text-anchor="start" font-weight="bold">L6</text>
<text x="262.00" y="165.00" font-family="Liberation Mono, monospace" font-size="3.00" fill="#2448b0" text-anchor="start" font-weight="bold">B</text>
<text x="268.00" y="173.50" font-family="Liberation Mono, monospace" font-size="2.80" fill="#2448b0" text-anchor="start" font-weight="bold">3x</text>
<line x1="252.30" y1="225.00" x2="259.60" y2="225.00" stroke="#2c53bb" stroke-width="0.80" />
<path d="M260.80 221.80q-2.60 3.20 0 6.40" stroke="#2c53bb" stroke-width="0.80" fill="none"/>
<path d="M260.00 222.40l3 -1.6M260.00 227.60l3 1.6" stroke="#2c53bb" stroke-width="0.70" fill="none"/>
<path d="M265.5 222.00v6M267.5 222.00v6" stroke="#2c53bb" stroke-width="0.60" fill="none"/>
<text x="275.50" y="227.00" font-family="Liberation Mono, monospace" font-size="6.3" fill="#2c53bb" stroke="#2c53bb" stroke-width="0.18">-X37</text>
<text x="254.00" y="211.00" font-family="Liberation Mono, monospace" font-size="3.00" fill="#2448b0" text-anchor="start" font-weight="bold">115</text>
<text x="254.00" y="214.70" font-family="Liberation Mono, monospace" font-size="3.00" fill="#2448b0" text-anchor="start" font-weight="bold">L6</text>
<text x="262.00" y="215.50" font-family="Liberation Mono, monospace" font-size="3.00" fill="#2448b0" text-anchor="start" font-weight="bold">B</text>
<text x="268.00" y="224.00" font-family="Liberation Mono, monospace" font-size="2.80" fill="#2448b0" text-anchor="start" font-weight="bold">3x</text>
<circle cx="264.00" cy="141.00" r="3.80" fill="#e8e8e8" stroke="#2c53bb" stroke-width="0.70"/>
<text x="264.00" y="142.10" font-family="Liberation Mono, monospace" font-size="3.20" fill="#2c53bb" text-anchor="middle" font-weight="bold">M</text>
<text x="272.00" y="141.80" font-family="Liberation Mono, monospace" font-size="3.00" fill="#2448b0" text-anchor="start" font-weight="bold">Schweiss-</text>
<text x="272.00" y="145.50" font-family="Liberation Mono, monospace" font-size="3.00" fill="#2448b0" text-anchor="start" font-weight="bold">gerät</text>
<circle cx="264.00" cy="192.00" r="3.80" fill="#e8e8e8" stroke="#2c53bb" stroke-width="0.70"/>
<text x="264.00" y="193.10" font-family="Liberation Mono, monospace" font-size="3.20" fill="#2c53bb" text-anchor="middle" font-weight="bold">M</text>
<text x="272.00" y="192.80" font-family="Liberation Mono, monospace" font-size="3.00" fill="#2448b0" text-anchor="start" font-weight="bold">Bohr-</text>
<text x="272.00" y="196.50" font-family="Liberation Mono, monospace" font-size="3.00" fill="#2448b0" text-anchor="start" font-weight="bold">maschine</text>
<circle cx="264.00" cy="240.00" r="3.80" fill="#e8e8e8" stroke="#2c53bb" stroke-width="0.70"/>
<text x="264.00" y="241.10" font-family="Liberation Mono, monospace" font-size="3.20" fill="#2c53bb" text-anchor="middle" font-weight="bold">M</text>
<text x="272.00" y="241.60" font-family="Liberation Mono, monospace" font-size="3.00" fill="#2448b0" text-anchor="start" font-weight="bold">Drehbank</text>
<text x="252.00" y="262.60" font-family="Liberation Mono, monospace" font-size="6.3" fill="#2c53bb" stroke="#2c53bb" stroke-width="0.18">-S33-S34</text>
<line x1="258.20" y1="253.30" x2="269.40" y2="253.30" stroke="#2c53bb" stroke-width="0.60" />
<circle cx="258.20" cy="253.30" r="2.90" fill="#dfe8f8" stroke="#2c53bb" stroke-width="0.70"/>
<circle cx="258.20" cy="253.30" r="1.45" fill="none" stroke="#2c53bb" stroke-width="0.50"/>
<circle cx="258.20" cy="253.30" r="0.80" fill="#d02020" stroke="none" stroke-width="0.00"/>
<circle cx="269.40" cy="253.30" r="2.90" fill="#dfe8f8" stroke="#2c53bb" stroke-width="0.70"/>
<circle cx="269.40" cy="253.30" r="1.45" fill="none" stroke="#2c53bb" stroke-width="0.50"/>
<circle cx="269.40" cy="253.30" r="0.80" fill="#d02020" stroke="none" stroke-width="0.00"/>
<text x="265.38" y="266.50" font-family="Liberation Mono, monospace" font-size="3.30" fill="#2448b0" text-anchor="end" font-weight="bold">115 cm</text>
<text x="265.38" y="270.20" font-family="Liberation Mono, monospace" font-size="3.30" fill="#2448b0" text-anchor="end" font-weight="bold">L8</text>
<text x="265.38" y="273.90" font-family="Liberation Mono, monospace" font-size="3.30" fill="#2448b0" text-anchor="end" font-weight="bold">UV1</text>
<text x="281.88" y="266.50" font-family="Liberation Mono, monospace" font-size="3.30" fill="#2448b0" text-anchor="end" font-weight="bold">115 cm</text>
<text x="281.88" y="270.20" font-family="Liberation Mono, monospace" font-size="3.30" fill="#2448b0" text-anchor="end" font-weight="bold">L7</text>
<text x="281.88" y="273.90" font-family="Liberation Mono, monospace" font-size="3.30" fill="#2448b0" text-anchor="end" font-weight="bold">UV1</text>
<circle cx="253.00" cy="253.50" r="0.80" fill="#d02020" stroke="none" stroke-width="0.00"/>
<polygon points="251.50,250.10 254.50,250.10 253.00,252.50" fill="#1f8a2a"/>
<rect x="329.20" y="118.60" width="2.60" height="33.00" fill="#c3d4f0" stroke="none" stroke-width="0.60"/>
<line x1="329.20" y1="118.60" x2="329.20" y2="151.60" stroke="#2c53bb" stroke-width="0.55" />
<line x1="331.80" y1="118.60" x2="331.80" y2="151.60" stroke="#2c53bb" stroke-width="0.55" />
<line x1="327.30" y1="118.60" x2="333.70" y2="118.60" stroke="#2c53bb" stroke-width="0.80" />
<line x1="327.30" y1="151.60" x2="333.70" y2="151.60" stroke="#2c53bb" stroke-width="0.80" />
<circle cx="332.30" cy="135.10" r="0.80" fill="#d02020" stroke="none" stroke-width="0.00"/>
<text x="323.50" y="125.60" font-family="Liberation Mono, monospace" font-size="2.80" fill="#2c53bb" text-anchor="start" font-weight="bold" transform="rotate(90 323.50 125.60)">2x58W</text>
<text x="327.00" y="125.60" font-family="Liberation Mono, monospace" font-size="2.80" fill="#2c53bb" text-anchor="start" font-weight="bold" transform="rotate(90 327.00 125.60)">200 cm</text>
<rect x="329.20" y="151.60" width="2.60" height="33.40" fill="#c3d4f0" stroke="none" stroke-width="0.60"/>
<line x1="329.20" y1="151.60" x2="329.20" y2="185.00" stroke="#2c53bb" stroke-width="0.55" />
<line x1="331.80" y1="151.60" x2="331.80" y2="185.00" stroke="#2c53bb" stroke-width="0.55" />
<line x1="327.30" y1="151.60" x2="333.70" y2="151.60" stroke="#2c53bb" stroke-width="0.80" />
<line x1="327.30" y1="185.00" x2="333.70" y2="185.00" stroke="#2c53bb" stroke-width="0.80" />
<circle cx="332.30" cy="168.30" r="0.80" fill="#d02020" stroke="none" stroke-width="0.00"/>
<text x="323.50" y="158.60" font-family="Liberation Mono, monospace" font-size="2.80" fill="#2c53bb" text-anchor="start" font-weight="bold" transform="rotate(90 323.50 158.60)">2x58W</text>
<rect x="329.20" y="185.00" width="2.60" height="34.70" fill="#c3d4f0" stroke="none" stroke-width="0.60"/>
<line x1="329.20" y1="185.00" x2="329.20" y2="219.70" stroke="#2c53bb" stroke-width="0.55" />
<line x1="331.80" y1="185.00" x2="331.80" y2="219.70" stroke="#2c53bb" stroke-width="0.55" />
<line x1="327.30" y1="185.00" x2="333.70" y2="185.00" stroke="#2c53bb" stroke-width="0.80" />
<line x1="327.30" y1="219.70" x2="333.70" y2="219.70" stroke="#2c53bb" stroke-width="0.80" />
<circle cx="332.30" cy="202.35" r="0.80" fill="#d02020" stroke="none" stroke-width="0.00"/>
<text x="323.50" y="192.00" font-family="Liberation Mono, monospace" font-size="2.80" fill="#2c53bb" text-anchor="start" font-weight="bold" transform="rotate(90 323.50 192.00)">2x58W</text>
<rect x="329.20" y="219.70" width="2.60" height="33.60" fill="#c3d4f0" stroke="none" stroke-width="0.60"/>
<line x1="329.20" y1="219.70" x2="329.20" y2="253.30" stroke="#2c53bb" stroke-width="0.55" />
<line x1="331.80" y1="219.70" x2="331.80" y2="253.30" stroke="#2c53bb" stroke-width="0.55" />
<line x1="327.30" y1="219.70" x2="333.70" y2="219.70" stroke="#2c53bb" stroke-width="0.80" />
<line x1="327.30" y1="253.30" x2="333.70" y2="253.30" stroke="#2c53bb" stroke-width="0.80" />
<circle cx="332.30" cy="236.50" r="0.80" fill="#d02020" stroke="none" stroke-width="0.00"/>
<text x="323.50" y="226.70" font-family="Liberation Mono, monospace" font-size="2.80" fill="#2c53bb" text-anchor="start" font-weight="bold" transform="rotate(90 323.50 226.70)">2x58W</text>
<rect x="329.20" y="253.30" width="2.60" height="33.00" fill="#c3d4f0" stroke="none" stroke-width="0.60"/>
<line x1="329.20" y1="253.30" x2="329.20" y2="286.30" stroke="#2c53bb" stroke-width="0.55" />
<line x1="331.80" y1="253.30" x2="331.80" y2="286.30" stroke="#2c53bb" stroke-width="0.55" />
<line x1="327.30" y1="253.30" x2="333.70" y2="253.30" stroke="#2c53bb" stroke-width="0.80" />
<line x1="327.30" y1="286.30" x2="333.70" y2="286.30" stroke="#2c53bb" stroke-width="0.80" />
<circle cx="332.30" cy="269.80" r="0.80" fill="#d02020" stroke="none" stroke-width="0.00"/>
<text x="323.50" y="260.30" font-family="Liberation Mono, monospace" font-size="2.80" fill="#2c53bb" text-anchor="start" font-weight="bold" transform="rotate(90 323.50 260.30)">2x58W</text>
<rect x="329.20" y="286.30" width="2.60" height="33.00" fill="#c3d4f0" stroke="none" stroke-width="0.60"/>
<line x1="329.20" y1="286.30" x2="329.20" y2="319.30" stroke="#2c53bb" stroke-width="0.55" />
<line x1="331.80" y1="286.30" x2="331.80" y2="319.30" stroke="#2c53bb" stroke-width="0.55" />
<line x1="327.30" y1="286.30" x2="333.70" y2="286.30" stroke="#2c53bb" stroke-width="0.80" />
<line x1="327.30" y1="319.30" x2="333.70" y2="319.30" stroke="#2c53bb" stroke-width="0.80" />
<circle cx="332.30" cy="302.80" r="0.80" fill="#d02020" stroke="none" stroke-width="0.00"/>
<text x="323.50" y="293.30" font-family="Liberation Mono, monospace" font-size="2.80" fill="#2c53bb" text-anchor="start" font-weight="bold" transform="rotate(90 323.50 293.30)">2x58W</text>
<rect x="430.70" y="185.00" width="2.60" height="34.70" fill="#c3d4f0" stroke="none" stroke-width="0.60"/>
<line x1="430.70" y1="185.00" x2="430.70" y2="219.70" stroke="#2c53bb" stroke-width="0.55" />
<line x1="433.30" y1="185.00" x2="433.30" y2="219.70" stroke="#2c53bb" stroke-width="0.55" />
<line x1="428.80" y1="185.00" x2="435.20" y2="185.00" stroke="#2c53bb" stroke-width="0.80" />
<line x1="428.80" y1="219.70" x2="435.20" y2="219.70" stroke="#2c53bb" stroke-width="0.80" />
<circle cx="433.80" cy="202.35" r="0.80" fill="#d02020" stroke="none" stroke-width="0.00"/>
<text x="425.00" y="192.00" font-family="Liberation Mono, monospace" font-size="2.80" fill="#2c53bb" text-anchor="start" font-weight="bold" transform="rotate(90 425.00 192.00)">2x58W</text>
<text x="428.50" y="192.00" font-family="Liberation Mono, monospace" font-size="2.80" fill="#2c53bb" text-anchor="start" font-weight="bold" transform="rotate(90 428.50 192.00)">200 cm</text>
<rect x="430.70" y="219.70" width="2.60" height="33.60" fill="#c3d4f0" stroke="none" stroke-width="0.60"/>
<line x1="430.70" y1="219.70" x2="430.70" y2="253.30" stroke="#2c53bb" stroke-width="0.55" />
<line x1="433.30" y1="219.70" x2="433.30" y2="253.30" stroke="#2c53bb" stroke-width="0.55" />
<line x1="428.80" y1="219.70" x2="435.20" y2="219.70" stroke="#2c53bb" stroke-width="0.80" />
<line x1="428.80" y1="253.30" x2="435.20" y2="253.30" stroke="#2c53bb" stroke-width="0.80" />
<circle cx="433.80" cy="236.50" r="0.80" fill="#d02020" stroke="none" stroke-width="0.00"/>
<text x="425.00" y="226.70" font-family="Liberation Mono, monospace" font-size="2.80" fill="#2c53bb" text-anchor="start" font-weight="bold" transform="rotate(90 425.00 226.70)">2x58W</text>
<rect x="430.70" y="253.30" width="2.60" height="33.00" fill="#c3d4f0" stroke="none" stroke-width="0.60"/>
<line x1="430.70" y1="253.30" x2="430.70" y2="286.30" stroke="#2c53bb" stroke-width="0.55" />
<line x1="433.30" y1="253.30" x2="433.30" y2="286.30" stroke="#2c53bb" stroke-width="0.55" />
<line x1="428.80" y1="253.30" x2="435.20" y2="253.30" stroke="#2c53bb" stroke-width="0.80" />
<line x1="428.80" y1="286.30" x2="435.20" y2="286.30" stroke="#2c53bb" stroke-width="0.80" />
<circle cx="433.80" cy="269.80" r="0.80" fill="#d02020" stroke="none" stroke-width="0.00"/>
<text x="425.00" y="260.30" font-family="Liberation Mono, monospace" font-size="2.80" fill="#2c53bb" text-anchor="start" font-weight="bold" transform="rotate(90 425.00 260.30)">2x58W</text>
<rect x="430.70" y="286.30" width="2.60" height="33.00" fill="#c3d4f0" stroke="none" stroke-width="0.60"/>
<line x1="430.70" y1="286.30" x2="430.70" y2="319.30" stroke="#2c53bb" stroke-width="0.55" />
<line x1="433.30" y1="286.30" x2="433.30" y2="319.30" stroke="#2c53bb" stroke-width="0.55" />
<line x1="428.80" y1="286.30" x2="435.20" y2="286.30" stroke="#2c53bb" stroke-width="0.80" />
<line x1="428.80" y1="319.30" x2="435.20" y2="319.30" stroke="#2c53bb" stroke-width="0.80" />
<circle cx="433.80" cy="302.80" r="0.80" fill="#d02020" stroke="none" stroke-width="0.00"/>
<text x="425.00" y="293.30" font-family="Liberation Mono, monospace" font-size="2.80" fill="#2c53bb" text-anchor="start" font-weight="bold" transform="rotate(90 425.00 293.30)">2x58W</text>
<polygon points="328.60,303.66 332.40,303.66 330.50,306.70" fill="#1f8a2a"/>
<polygon points="430.10,303.66 433.90,303.66 432.00,306.70" fill="#1f8a2a"/>
<circle cx="331.50" cy="304.50" r="0.70" fill="#d02020" stroke="none" stroke-width="0.00"/>
<circle cx="433.00" cy="304.50" r="0.70" fill="#d02020" stroke="none" stroke-width="0.00"/>
<circle cx="253.00" cy="304.50" r="0.80" fill="#d02020" stroke="none" stroke-width="0.00"/>
<path d="M253.5 314.8H262M253.5 329H262M262 314.8V329M258.5 318.3H262M258.5 321.8H262M258.5 325.3H262" stroke="#2c53bb" stroke-width="0.70" fill="none"/>
<text x="264.00" y="323.80" font-family="Liberation Mono, monospace" font-size="6.3" fill="#2c53bb" stroke="#2c53bb" stroke-width="0.18">-UV2</text>
<text x="258.50" y="307.00" font-family="Liberation Mono, monospace" font-size="2.80" fill="#2c53bb" text-anchor="start" font-weight="bold" transform="rotate(-90 258.50 307.00)">115 cm</text>
<path d="M249.5 313l6.5 6.5M256 313l-6.5 6.5M252.8 312v8.5M248.5 316.3h8.5" stroke="#1f8a2a" stroke-width="0.90" fill="none"/>
<circle cx="252.80" cy="316.30" r="1.00" fill="#d02020" stroke="none" stroke-width="0.00"/>
<text x="331.70" y="336.00" font-family="Liberation Mono, monospace" font-size="6.3" fill="#2c53bb" stroke="#2c53bb" stroke-width="0.18">-X41</text>
<line x1="339.20" y1="349.50" x2="339.20" y2="342.10" stroke="#2c53bb" stroke-width="0.80" />
<path d="M336.00 340.90q3.20 2.60 6.40 0" stroke="#2c53bb" stroke-width="0.80" fill="none"/>
<path d="M336.60 341.70l-1.6 -3M341.80 341.70l1.6 -3" stroke="#2c53bb" stroke-width="0.70" fill="none"/>
<text x="330.20" y="344.00" font-family="Liberation Mono, monospace" font-size="2.60" fill="#2448b0" text-anchor="start" font-weight="bold">115</text>
<text x="330.20" y="347.70" font-family="Liberation Mono, monospace" font-size="2.60" fill="#2448b0" text-anchor="start" font-weight="bold">L6</text>
<text x="353.28" y="343.30" font-family="Liberation Mono, monospace" font-size="2.80" fill="#2448b0" text-anchor="end" font-weight="bold">115 cm</text>
<text x="353.28" y="347.00" font-family="Liberation Mono, monospace" font-size="2.80" fill="#2448b0" text-anchor="end" font-weight="bold">5</text>
<text x="392.50" y="336.00" font-family="Liberation Mono, monospace" font-size="6.3" fill="#2c53bb" stroke="#2c53bb" stroke-width="0.18">-X42</text>
<line x1="400.00" y1="349.50" x2="400.00" y2="342.10" stroke="#2c53bb" stroke-width="0.80" />
<path d="M396.80 340.90q3.20 2.60 6.40 0" stroke="#2c53bb" stroke-width="0.80" fill="none"/>
<path d="M397.40 341.70l-1.6 -3M402.60 341.70l1.6 -3" stroke="#2c53bb" stroke-width="0.70" fill="none"/>
<text x="391.00" y="344.00" font-family="Liberation Mono, monospace" font-size="2.60" fill="#2448b0" text-anchor="start" font-weight="bold">115</text>
<text x="391.00" y="347.70" font-family="Liberation Mono, monospace" font-size="2.60" fill="#2448b0" text-anchor="start" font-weight="bold">L6</text>
<text x="414.08" y="343.30" font-family="Liberation Mono, monospace" font-size="2.80" fill="#2448b0" text-anchor="end" font-weight="bold">115 cm</text>
<text x="414.08" y="347.00" font-family="Liberation Mono, monospace" font-size="2.80" fill="#2448b0" text-anchor="end" font-weight="bold">5</text>
<text x="460.30" y="336.00" font-family="Liberation Mono, monospace" font-size="6.3" fill="#2c53bb" stroke="#2c53bb" stroke-width="0.18">-X43</text>
<line x1="467.80" y1="349.50" x2="467.80" y2="342.10" stroke="#2c53bb" stroke-width="0.80" />
<path d="M464.60 340.90q3.20 2.60 6.40 0" stroke="#2c53bb" stroke-width="0.80" fill="none"/>
<path d="M465.20 341.70l-1.6 -3M470.40 341.70l1.6 -3" stroke="#2c53bb" stroke-width="0.70" fill="none"/>
<text x="458.80" y="344.00" font-family="Liberation Mono, monospace" font-size="2.60" fill="#2448b0" text-anchor="start" font-weight="bold">115</text>
<text x="458.80" y="347.70" font-family="Liberation Mono, monospace" font-size="2.60" fill="#2448b0" text-anchor="start" font-weight="bold">L6</text>
<text x="481.88" y="343.30" font-family="Liberation Mono, monospace" font-size="2.80" fill="#2448b0" text-anchor="end" font-weight="bold">115 cm</text>
<text x="481.88" y="347.00" font-family="Liberation Mono, monospace" font-size="2.80" fill="#2448b0" text-anchor="end" font-weight="bold">5</text>
<circle cx="309.40" cy="341.00" r="4.00" fill="#e8e8e8" stroke="#2c53bb" stroke-width="0.70"/>
<text x="309.40" y="342.10" font-family="Liberation Mono, monospace" font-size="3.20" fill="#2c53bb" text-anchor="middle" font-weight="bold">M</text>
<circle cx="377.00" cy="341.00" r="4.00" fill="#e8e8e8" stroke="#2c53bb" stroke-width="0.70"/>
<text x="377.00" y="342.10" font-family="Liberation Mono, monospace" font-size="3.20" fill="#2c53bb" text-anchor="middle" font-weight="bold">M</text>
<circle cx="445.70" cy="341.00" r="4.00" fill="#e8e8e8" stroke="#2c53bb" stroke-width="0.70"/>
<text x="445.70" y="342.10" font-family="Liberation Mono, monospace" font-size="3.20" fill="#2c53bb" text-anchor="middle" font-weight="bold">M</text>
<text x="309.00" y="350.20" font-family="Liberation Mono, monospace" font-size="3.30" fill="#2448b0" text-anchor="start" font-weight="bold">Säge</text>
<text x="358.00" y="350.20" font-family="Liberation Mono, monospace" font-size="3.30" fill="#2448b0" text-anchor="start" font-weight="bold">Schleifmaschine</text>
<text x="423.00" y="350.20" font-family="Liberation Mono, monospace" font-size="3.30" fill="#2448b0" text-anchor="start" font-weight="bold">Schleifmaschine</text>
<circle cx="354.00" cy="100.80" r="4.00" fill="#e8e8e8" stroke="#2c53bb" stroke-width="0.70"/>
<text x="354.00" y="101.90" font-family="Liberation Mono, monospace" font-size="3.20" fill="#2c53bb" text-anchor="middle" font-weight="bold">M</text>
<text x="364.00" y="102.80" font-family="Liberation Mono, monospace" font-size="6.3" fill="#2c53bb" stroke="#2c53bb" stroke-width="0.18">-U2</text>
<text x="345.00" y="109.60" font-family="Liberation Mono, monospace" font-size="3.00" fill="#2448b0" text-anchor="start" font-weight="bold">Abzugung</text>
<rect x="378.00" y="98.60" width="9.00" height="5.60" fill="#1c3fb4" stroke="none" stroke-width="0.60"/>
<circle cx="382.50" cy="101.40" r="0.80" fill="#d02020" stroke="none" stroke-width="0.00"/>
<polygon points="380.00,91.22 383.60,91.22 381.80,94.10" fill="#1f8a2a"/>
<text x="389.08" y="109.50" font-family="Liberation Mono, monospace" font-size="2.80" fill="#2448b0" text-anchor="end" font-weight="bold">200 cm</text>
<text x="389.08" y="113.20" font-family="Liberation Mono, monospace" font-size="2.80" fill="#2448b0" text-anchor="end" font-weight="bold">7</text>
<text x="389.08" y="116.90" font-family="Liberation Mono, monospace" font-size="2.80" fill="#2448b0" text-anchor="end" font-weight="bold">UV1</text>
<text x="394.00" y="127.30" font-family="Liberation Mono, monospace" font-size="6.3" fill="#2c53bb" stroke="#2c53bb" stroke-width="0.18">-S29</text>
<circle cx="401.30" cy="117.50" r="2.10" fill="#e8e8e8" stroke="#2c53bb" stroke-width="0.70"/>
<line x1="402.50" y1="115.80" x2="406.30" y2="107.00" stroke="#2c53bb" stroke-width="0.70" />
<line x1="406.30" y1="107.00" x2="408.30" y2="107.80" stroke="#2c53bb" stroke-width="0.60" />
<text x="416.58" y="116.00" font-family="Liberation Mono, monospace" font-size="2.80" fill="#2448b0" text-anchor="end" font-weight="bold">115 cm</text>
<text x="416.58" y="119.70" font-family="Liberation Mono, monospace" font-size="2.80" fill="#2448b0" text-anchor="end" font-weight="bold">L6</text>
<text x="416.58" y="123.40" font-family="Liberation Mono, monospace" font-size="2.80" fill="#2448b0" text-anchor="end" font-weight="bold">UV1</text>
<text x="469.50" y="98.20" font-family="Liberation Mono, monospace" font-size="6.3" fill="#2c53bb" stroke="#2c53bb" stroke-width="0.18">-X29</text>
<line x1="461.70" y1="91.80" x2="461.70" y2="100.10" stroke="#2c53bb" stroke-width="0.80" />
<path d="M458.50 101.30q3.20 -2.60 6.40 0" stroke="#2c53bb" stroke-width="0.80" fill="none"/>
<path d="M459.10 100.50l-1.6 3M464.30 100.50l1.6 3" stroke="#2c53bb" stroke-width="0.70" fill="none"/>
<text x="453.08" y="104.50" font-family="Liberation Mono, monospace" font-size="2.80" fill="#2448b0" text-anchor="end" font-weight="bold">115 cm</text>
<text x="453.08" y="108.20" font-family="Liberation Mono, monospace" font-size="2.80" fill="#2448b0" text-anchor="end" font-weight="bold">L6</text>
<text x="453.08" y="111.90" font-family="Liberation Mono, monospace" font-size="2.80" fill="#2448b0" text-anchor="end" font-weight="bold">UV1</text>
<rect x="427.00" y="123.30" width="32.00" height="2.60" fill="#c3d4f0" stroke="none" stroke-width="0.60"/>
<line x1="427.00" y1="123.30" x2="459.00" y2="123.30" stroke="#2c53bb" stroke-width="0.55" />
<line x1="427.00" y1="125.90" x2="459.00" y2="125.90" stroke="#2c53bb" stroke-width="0.55" />
<line x1="427.00" y1="121.40" x2="427.00" y2="127.80" stroke="#2c53bb" stroke-width="0.80" />
<line x1="459.00" y1="121.40" x2="459.00" y2="127.80" stroke="#2c53bb" stroke-width="0.80" />
<text x="442.00" y="131.00" font-family="Liberation Mono, monospace" font-size="2.80" fill="#2448b0" text-anchor="start" font-weight="bold">2x58W</text>
<text x="442.00" y="134.70" font-family="Liberation Mono, monospace" font-size="2.80" fill="#2448b0" text-anchor="start" font-weight="bold">200 cm</text>
<text x="460.60" y="148.60" font-family="Liberation Mono, monospace" font-size="6.3" fill="#2c53bb" stroke="#2c53bb" stroke-width="0.18">-X32</text>
<line x1="488.70" y1="146.60" x2="480.40" y2="146.60" stroke="#2c53bb" stroke-width="0.80" />
<path d="M479.20 143.40q2.60 3.20 0 6.40" stroke="#2c53bb" stroke-width="0.80" fill="none"/>
<path d="M480.00 144.00l-3 -1.6M480.00 149.20l-3 1.6" stroke="#2c53bb" stroke-width="0.70" fill="none"/>
<text x="477.50" y="131.50" font-family="Liberation Mono, monospace" font-size="2.80" fill="#2448b0" text-anchor="start" font-weight="bold">115</text>
<text x="477.50" y="135.20" font-family="Liberation Mono, monospace" font-size="2.80" fill="#2448b0" text-anchor="start" font-weight="bold">L6</text>
<path d="M480 139v5M482 139v5" stroke="#2c53bb" stroke-width="0.60" fill="none"/>
<text x="444.70" y="193.00" font-family="Liberation Mono, monospace" font-size="6.3" fill="#2c53bb" stroke="#2c53bb" stroke-width="0.18">-S29</text>
<text x="444.70" y="203.70" font-family="Liberation Mono, monospace" font-size="6.3" fill="#2c53bb" stroke="#2c53bb" stroke-width="0.18">-S30</text>
<circle cx="479.00" cy="191.30" r="2.90" fill="#dfe8f8" stroke="#2c53bb" stroke-width="0.70"/>
<circle cx="479.00" cy="191.30" r="1.45" fill="none" stroke="#2c53bb" stroke-width="0.50"/>
<circle cx="479.00" cy="191.30" r="0.80" fill="#d02020" stroke="none" stroke-width="0.00"/>
<circle cx="479.00" cy="202.80" r="2.90" fill="#dfe8f8" stroke="#2c53bb" stroke-width="0.70"/>
<circle cx="479.00" cy="202.80" r="1.45" fill="none" stroke="#2c53bb" stroke-width="0.50"/>
<circle cx="479.00" cy="202.80" r="0.80" fill="#d02020" stroke="none" stroke-width="0.00"/>
<text x="473.88" y="190.00" font-family="Liberation Mono, monospace" font-size="3.30" fill="#2448b0" text-anchor="end" font-weight="bold">115 cm</text>
<text x="473.88" y="193.70" font-family="Liberation Mono, monospace" font-size="3.30" fill="#2448b0" text-anchor="end" font-weight="bold">L8</text>
<text x="473.88" y="197.40" font-family="Liberation Mono, monospace" font-size="3.30" fill="#2448b0" text-anchor="end" font-weight="bold">UV1</text>
<text x="473.88" y="201.00" font-family="Liberation Mono, monospace" font-size="3.30" fill="#2448b0" text-anchor="end" font-weight="bold">115 cm</text>
<text x="473.88" y="204.70" font-family="Liberation Mono, monospace" font-size="3.30" fill="#2448b0" text-anchor="end" font-weight="bold">L7</text>
<text x="473.88" y="208.40" font-family="Liberation Mono, monospace" font-size="3.30" fill="#2448b0" text-anchor="end" font-weight="bold">UV1</text>
<polygon points="486.50,204.22 490.10,204.22 488.30,207.10" fill="#1f8a2a"/>
<line x1="482.00" y1="202.80" x2="488.20" y2="202.80" stroke="#6fb0e0" stroke-width="0.60" />
<text x="68.80" y="129.60" font-family="Liberation Mono, monospace" font-size="6.30" fill="#222" text-anchor="start" font-weight="normal">Meisterbüro</text>
<text x="162.50" y="140.90" font-family="Liberation Mono, monospace" font-size="6.30" fill="#222" text-anchor="start" font-weight="normal">Aufenthaltsraum</text>
<text x="201.00" y="195.20" font-family="Liberation Mono, monospace" font-size="6.30" fill="#222" text-anchor="start" font-weight="normal">Umkleide</text>
<text x="65.50" y="276.20" font-family="Liberation Mono, monospace" font-size="6.30" fill="#222" text-anchor="start" font-weight="normal">Verwaltung</text>
<text x="194.00" y="318.50" font-family="Liberation Mono, monospace" font-size="6.30" fill="#222" text-anchor="start" font-weight="normal">WC</text>
<text x="340.80" y="230.60" font-family="Liberation Mono, monospace" font-size="6.30" fill="#222" text-anchor="start" font-weight="normal">Werkstatt</text>
<text x="431.50" y="120.40" font-family="Liberation Mono, monospace" font-size="6.30" fill="#222" text-anchor="start" font-weight="normal">Lager</text>
<line x1="28.00" y1="555.80" x2="679.00" y2="555.80" stroke="#444" stroke-width="0.70" />
<line x1="153.00" y1="555.80" x2="153.00" y2="563.00" stroke="#444" stroke-width="0.70" />
<rect x="345.00" y="447.20" width="334.00" height="108.60" fill="none" stroke="#444" stroke-width="0.70"/>
<line x1="345.00" y1="474.30" x2="679.00" y2="474.30" stroke="#444" stroke-width="0.60" />
<line x1="345.00" y1="501.80" x2="679.00" y2="501.80" stroke="#444" stroke-width="0.60" />
<line x1="544.00" y1="447.20" x2="544.00" y2="501.80" stroke="#444" stroke-width="0.60" />
<line x1="629.70" y1="447.20" x2="629.70" y2="555.80" stroke="#444" stroke-width="0.60" />
<line x1="629.70" y1="529.00" x2="679.00" y2="529.00" stroke="#444" stroke-width="0.60" />
<text x="346.00" y="455.60" font-family="Liberation Mono, monospace" font-size="6.60" fill="#2a2a2a" text-anchor="start" font-weight="normal" textLength="178.0" lengthAdjust="spacingAndGlyphs">Projekt:Elektrohandwerk Demoprojekt</text>
<text x="386.50" y="464.40" font-family="Liberation Mono, monospace" font-size="6.60" fill="#2a2a2a" text-anchor="start" font-weight="normal" textLength="91.0" lengthAdjust="spacingAndGlyphs">Werkstatt mit Büro</text>
<text x="386.50" y="473.20" font-family="Liberation Mono, monospace" font-size="6.60" fill="#2a2a2a" text-anchor="start" font-weight="normal" textLength="45.5" lengthAdjust="spacingAndGlyphs">123456789</text>
<text x="346.00" y="487.20" font-family="Liberation Mono, monospace" font-size="6.60" fill="#2a2a2a" text-anchor="start" font-weight="normal" textLength="25.0" lengthAdjust="spacingAndGlyphs">Titel</text>
<text x="346.00" y="498.50" font-family="Liberation Mono, monospace" font-size="6.60" fill="#2a2a2a" text-anchor="start" font-weight="normal" textLength="142.0" lengthAdjust="spacingAndGlyphs">Leitungen und Verlegesysteme</text>
<text x="547.50" y="455.50" font-family="Liberation Mono, monospace" font-size="6.60" fill="#2a2a2a" text-anchor="start" font-weight="normal" textLength="25.5" lengthAdjust="spacingAndGlyphs">Kunde</text>
<text x="547.50" y="461.50" font-family="Liberation Mono, monospace" font-size="4.80" fill="#2a2a2a" text-anchor="start" font-weight="normal" textLength="38.0" lengthAdjust="spacingAndGlyphs">Meier GmbH</text>
<text x="547.50" y="467.00" font-family="Liberation Mono, monospace" font-size="4.80" fill="#2a2a2a" text-anchor="start" font-weight="normal" textLength="41.0" lengthAdjust="spacingAndGlyphs">Musterweg 1</text>
<text x="547.50" y="472.60" font-family="Liberation Mono, monospace" font-size="4.80" fill="#2a2a2a" text-anchor="start" font-weight="normal" textLength="38.0" lengthAdjust="spacingAndGlyphs">Schönstadt</text>
<text x="547.50" y="482.50" font-family="Liberation Mono, monospace" font-size="6.60" fill="#2a2a2a" text-anchor="start" font-weight="normal" textLength="35.5" lengthAdjust="spacingAndGlyphs">Bauherr</text>
<text x="641.50" y="455.50" font-family="Liberation Mono, monospace" font-size="6.60" fill="#2a2a2a" text-anchor="start" font-weight="normal" textLength="25.5" lengthAdjust="spacingAndGlyphs">Datum</text>
<text x="632.50" y="464.30" font-family="Liberation Mono, monospace" font-size="6.60" fill="#2a2a2a" text-anchor="start" font-weight="normal" textLength="40.5" lengthAdjust="spacingAndGlyphs">18.10.18</text>
<text x="636.00" y="482.50" font-family="Liberation Mono, monospace" font-size="6.60" fill="#2a2a2a" text-anchor="start" font-weight="normal" textLength="40.0" lengthAdjust="spacingAndGlyphs">Plan Nr.</text>
<text x="643.50" y="495.50" font-family="Liberation Mono, monospace" font-size="6.60" fill="#2a2a2a" text-anchor="start" font-weight="normal" textLength="25.0" lengthAdjust="spacingAndGlyphs">08/15</text>
<text x="638.50" y="510.70" font-family="Liberation Mono, monospace" font-size="6.60" fill="#2a2a2a" text-anchor="start" font-weight="normal" textLength="36.0" lengthAdjust="spacingAndGlyphs">Maßstab</text>
<text x="644.00" y="519.00" font-family="Liberation Mono, monospace" font-size="6.60" fill="#2a2a2a" text-anchor="start" font-weight="normal" textLength="25.0" lengthAdjust="spacingAndGlyphs">1:100</text>
<text x="643.50" y="537.20" font-family="Liberation Mono, monospace" font-size="6.60" fill="#2a2a2a" text-anchor="start" font-weight="normal" textLength="25.0" lengthAdjust="spacingAndGlyphs">Blatt</text>
<text x="632.50" y="546.00" font-family="Liberation Mono, monospace" font-size="7.00" fill="#2a2a2a" text-anchor="start" font-weight="normal">8</text>
<text x="663.50" y="545.50" font-family="Liberation Mono, monospace" font-size="6.20" fill="#2a2a2a" text-anchor="start" font-weight="normal" textLength="11.5" lengthAdjust="spacingAndGlyphs">von</text>
<text x="632.50" y="554.30" font-family="Liberation Mono, monospace" font-size="7.00" fill="#2a2a2a" text-anchor="start" font-weight="normal">8</text>
<text x="491.50" y="511.30" font-family="Liberation Mono, monospace" font-size="6.60" fill="#2a2a2a" text-anchor="start" font-weight="normal" textLength="76.0" lengthAdjust="spacingAndGlyphs">Elektro Meister</text>
<text x="491.50" y="522.30" font-family="Liberation Mono, monospace" font-size="6.60" fill="#2a2a2a" text-anchor="start" font-weight="normal" textLength="91.0" lengthAdjust="spacingAndGlyphs">Techniker Allee 1a</text>
<text x="491.50" y="532.80" font-family="Liberation Mono, monospace" font-size="6.60" fill="#2a2a2a" text-anchor="start" font-weight="normal" textLength="96.0" lengthAdjust="spacingAndGlyphs">12345  Musterhausen</text>
<text x="491.50" y="545.00" font-family="Liberation Mono, monospace" font-size="6.60" fill="#2a2a2a" text-anchor="start" font-weight="normal" textLength="50.5" lengthAdjust="spacingAndGlyphs">Bearbeiter</text>
<text x="491.50" y="553.80" font-family="Liberation Mono, monospace" font-size="6.60" fill="#2a2a2a" text-anchor="start" font-weight="normal" textLength="30.5" lengthAdjust="spacingAndGlyphs">Wittke</text>
<defs><linearGradient id="cg" x1="0" y1="0" x2="1" y2="0.35"><stop offset="0" stop-color="#c8c8c8"/><stop offset="0.12" stop-color="#3a3a3a"/><stop offset="0.3" stop-color="#1a1a1a"/><stop offset="0.42" stop-color="#8a8a8a"/><stop offset="0.5" stop-color="#111"/><stop offset="0.62" stop-color="#2a2a2a"/><stop offset="0.78" stop-color="#bdbdbd"/><stop offset="0.9" stop-color="#3a3a3a"/><stop offset="1" stop-color="#111"/></linearGradient></defs>
<path d="M352 520.8H479M356 523.2H479M360 525.3H479M364 527.3H479" stroke="#f3cf2f" stroke-width="1.30" fill="none"/>
<text x="348.8" y="518.9" font-family="Liberation Sans, sans-serif" font-weight="bold" font-size="11.2" fill="#5c5c5c" textLength="27.2" lengthAdjust="spacingAndGlyphs">WS</text>
<text x="380.5" y="536.2" font-family="Liberation Sans, sans-serif" font-weight="bold" font-size="34" fill="url(#cg)" stroke="url(#cg)" stroke-width="2.6" stroke-linejoin="round" textLength="105" lengthAdjust="spacingAndGlyphs">CAD</text>
<text x="380.8" y="548.7" font-family="Liberation Sans, sans-serif" font-size="7.2" fill="#8a8a8a" textLength="104" lengthAdjust="spacingAndGlyphs">ELECTRICAL ENGINEERING</text>
</svg>
</div>
<div id="menubar" class="abs">
<svg class="abs" style="left:0;top:0" width="56" height="19" viewBox="0 0 56 19">
<defs><linearGradient id="lg" x1="0" y1="0" x2="0" y2="1"><stop offset="0" stop-color="#ffe600"/><stop offset="1" stop-color="#f2b600"/></linearGradient></defs>
<text x="4.5" y="12.9" font-family="Liberation Sans, sans-serif" font-weight="bold" font-size="9.2" textLength="33.5" lengthAdjust="spacingAndGlyphs" fill="url(#lg)">ELECTRI</text>
<text transform="translate(36.2,16.4) skewX(-24) scale(1.0,1.0)" font-family="Liberation Sans, sans-serif" font-size="16.5" fill="#ffe000">X</text>
</svg>
<span class="mi" style="left:58px">Projekt</span>
<span class="mi" style="left:84.5px">Datei</span>
<span class="mi" style="left:105.7px">Einfügen</span>
<span class="mi" style="left:137.7px">Bearbeiten</span>
<span class="mi" style="left:175px">Auswertung</span>
<span class="mi" style="left:215.7px">Ansicht</span>
<span class="mi" style="left:243.7px">Extras</span>
<span class="mi" style="left:268px">Fenster</span>
<span class="mi" style="left:296px">Konto</span>
<span class="mi" style="left:320px">Hilfe</span>
<div style="left:340px;top:3px;width:63px;height:13px;background:#273544"></div>
<svg class="abs" style="left:343px;top:5px" width="9" height="9" viewBox="0 0 9 9"><circle cx="3.8" cy="3.8" r="2.3" fill="none" stroke="#dfe5ea" stroke-width="0.7"/><path d="M5.5 5.5L7.6 7.6" stroke="#dfe5ea" stroke-width="0.8"/></svg>
<span class="mi" style="left:352.5px">Suchen (Strg+Q)</span>
<span class="mi" style="left:405px">Elektrohandwerk</span>
<span class="mi" style="left:455px">Projekt: Elektrohandwerk Demoprojekt</span>
<svg class="abs" style="left:960px;top:4px" width="40" height="11" viewBox="0 0 40 11"><path d="M4 8.5h4" stroke="#e6ebf0" stroke-width="1"/><rect x="17" y="3" width="4.5" height="4.5" fill="none" stroke="#e6ebf0" stroke-width="0.9"/><path d="M31 3l4.5 4.5M35.5 3L31 7.5" stroke="#e6ebf0" stroke-width="0.9"/></svg>
</div>
<div id="sidebar" class="abs">
<div class="abs" style="left:0;top:1px;width:16px;height:57px;background:#1f2d3b"></div><div class="abs" style="left:0;top:59px;width:16px;height:53px;background:#192633"></div>
<svg class="abs" style="left:5px;top:4px" width="8" height="8" viewBox="0 0 8 8"><rect x="0.5" y="0.5" width="6" height="6" fill="none" stroke="#d4dbe2" stroke-width="0.8"/><path d="M0.5 2.5h6M3 2.5v4.5" stroke="#d4dbe2" stroke-width="0.7"/></svg>
<span class="vt" style="left:12.5px;top:12px">Projekt-Explorer</span>
<svg class="abs" style="left:5px;top:61px" width="8" height="8" viewBox="0 0 8 8"><rect x="0.5" y="0.5" width="6" height="6" fill="none" stroke="#d4dbe2" stroke-width="0.8"/><path d="M2 2.5h3M2 4.5h3" stroke="#d4dbe2" stroke-width="0.7"/></svg>
<span class="vt" style="left:12.5px;top:69px">Eigenschaften</span>
</div>
<div id="tabbar" class="abs">
<div id="tab" class="abs">
<svg class="abs" style="left:5px;top:6px" width="8" height="10" viewBox="0 0 8 10"><rect x="0" y="0" width="7.5" height="9.5" fill="#9a7fd0"/><path d="M1.6 5L3.75 2.6L5.9 5H5.2V7.4H2.3V5Z" fill="#3a3050"/></svg>
<span class="abs" style="left:16px;top:6px;font-size:6.3px;line-height:9px;color:#fff;white-space:nowrap;font-weight:bold;letter-spacing:-0.2px">Elektrohandwerk Demoprojekt_Gr.0008.wsARD</span>
<svg class="abs" style="left:160px;top:8px" width="7" height="7" viewBox="0 0 7 7"><path d="M1 1l4.6 4.6M5.6 1L1 5.6" stroke="#fff" stroke-width="1.1"/></svg>
</div>
</div>
<div id="rulertop" class="abs">
<svg class="abs" style="left:0;top:0" width="983" height="9.4" viewBox="17 40.6 983 9.4"><path d="M54.3 44.3V50" stroke="#cfd6dd" stroke-width="0.7"/><text x="85.8" y="48.2" text-anchor="middle" font-family="Liberation Sans, sans-serif" font-weight="bold" font-size="5.8" fill="#e3e8ee">3</text><path d="M117.4 44.3V50" stroke="#cfd6dd" stroke-width="0.7"/><text x="148.9" y="48.2" text-anchor="middle" font-family="Liberation Sans, sans-serif" font-weight="bold" font-size="5.8" fill="#e3e8ee">4</text><path d="M180.5 44.3V50" stroke="#cfd6dd" stroke-width="0.7"/><text x="212.0" y="48.2" text-anchor="middle" font-family="Liberation Sans, sans-serif" font-weight="bold" font-size="5.8" fill="#e3e8ee">5</text><path d="M243.6 44.3V50" stroke="#cfd6dd" stroke-width="0.7"/><text x="275.1" y="48.2" text-anchor="middle" font-family="Liberation Sans, sans-serif" font-weight="bold" font-size="5.8" fill="#e3e8ee">6</text><path d="M306.7 44.3V50" stroke="#cfd6dd" stroke-width="0.7"/><text x="338.2" y="48.2" text-anchor="middle" font-family="Liberation Sans, sans-serif" font-weight="bold" font-size="5.8" fill="#e3e8ee">7</text><path d="M369.8 44.3V50" stroke="#cfd6dd" stroke-width="0.7"/><text x="401.3" y="48.2" text-anchor="middle" font-family="Liberation Sans, sans-serif" font-weight="bold" font-size="5.8" fill="#e3e8ee">8</text><path d="M432.9 44.3V50" stroke="#cfd6dd" stroke-width="0.7"/><text x="464.4" y="48.2" text-anchor="middle" font-family="Liberation Sans, sans-serif" font-weight="bold" font-size="5.8" fill="#e3e8ee">9</text><path d="M496.0 44.3V50" stroke="#cfd6dd" stroke-width="0.7"/><text x="527.5" y="48.2" text-anchor="middle" font-family="Liberation Sans, sans-serif" font-weight="bold" font-size="5.8" fill="#e3e8ee">10</text></svg>
</div>
<div id="rulercorner" class="abs"></div>
<div id="rulerleft" class="abs">
<svg class="abs" style="left:0;top:0" width="11" height="513" viewBox="17 50 11 513"><path d="M22.5 83.7H28" stroke="#cfd6dd" stroke-width="0.7"/><path d="M22.5 141.7H28" stroke="#cfd6dd" stroke-width="0.7"/><path d="M22.5 199.7H28" stroke="#cfd6dd" stroke-width="0.7"/><path d="M22.5 257.7H28" stroke="#cfd6dd" stroke-width="0.7"/><path d="M22.5 315.7H28" stroke="#cfd6dd" stroke-width="0.7"/><path d="M22.5 373.7H28" stroke="#cfd6dd" stroke-width="0.7"/><path d="M22.5 431.7H28" stroke="#cfd6dd" stroke-width="0.7"/><path d="M22.5 489.7H28" stroke="#cfd6dd" stroke-width="0.7"/><path d="M22.5 547.7H28" stroke="#cfd6dd" stroke-width="0.7"/><text x="23" y="57.0" text-anchor="middle" font-family="Liberation Sans, sans-serif" font-weight="bold" font-size="5.4" fill="#e3e8ee">A</text><text x="23" y="115.0" text-anchor="middle" font-family="Liberation Sans, sans-serif" font-weight="bold" font-size="5.4" fill="#e3e8ee">B</text><text x="23" y="173.0" text-anchor="middle" font-family="Liberation Sans, sans-serif" font-weight="bold" font-size="5.4" fill="#e3e8ee">C</text><text x="23" y="231.0" text-anchor="middle" font-family="Liberation Sans, sans-serif" font-weight="bold" font-size="5.4" fill="#e3e8ee">D</text><text x="23" y="289.0" text-anchor="middle" font-family="Liberation Sans, sans-serif" font-weight="bold" font-size="5.4" fill="#e3e8ee">E</text><text x="23" y="347.0" text-anchor="middle" font-family="Liberation Sans, sans-serif" font-weight="bold" font-size="5.4" fill="#e3e8ee">F</text><text x="23" y="405.0" text-anchor="middle" font-family="Liberation Sans, sans-serif" font-weight="bold" font-size="5.4" fill="#e3e8ee">G</text><text x="23" y="463.0" text-anchor="middle" font-family="Liberation Sans, sans-serif" font-weight="bold" font-size="5.4" fill="#e3e8ee">H</text><text x="23" y="521.0" text-anchor="middle" font-family="Liberation Sans, sans-serif" font-weight="bold" font-size="5.4" fill="#e3e8ee">I</text></svg>
</div>
<div id="rightstrip" class="abs"></div>
<div id="treepanel" class="abs">
<svg class="abs" style="left:0;top:0" width="251" height="133" viewBox="749 430 251 133"><path d="M776.5 440V519.6M766.5 440V530" stroke="#5a6876" stroke-width="0.5" stroke-dasharray="0.6 0.6"/><rect x="783.8" y="444.8" width="4.4" height="4.4" fill="#f4f6f8" stroke="#8a96a2" stroke-width="0.4"/><path d="M784.7 447.0h2.6M786.0 445.7v2.6" stroke="#223" stroke-width="0.6"/><rect x="793.3" y="445.4" width="4.6" height="3.6" fill="none" stroke="#e8edf2" stroke-width="0.6"/><path d="M793.3 444.6h2" stroke="#e8edf2" stroke-width="0.6"/><rect x="783.8" y="455.2" width="4.4" height="4.4" fill="#f4f6f8" stroke="#8a96a2" stroke-width="0.4"/><path d="M784.7 457.4h2.6M786.0 456.1v2.6" stroke="#223" stroke-width="0.6"/><rect x="793.3" y="455.8" width="4.6" height="3.6" fill="none" stroke="#e8edf2" stroke-width="0.6"/><path d="M793.3 455.0h2" stroke="#e8edf2" stroke-width="0.6"/><rect x="783.8" y="465.4" width="4.4" height="4.4" fill="#f4f6f8" stroke="#8a96a2" stroke-width="0.4"/><path d="M784.7 467.6h2.6M786.0 466.3v2.6" stroke="#223" stroke-width="0.6"/><rect x="793.3" y="466.0" width="4.6" height="3.6" fill="none" stroke="#e8edf2" stroke-width="0.6"/><path d="M793.3 465.2h2" stroke="#e8edf2" stroke-width="0.6"/><rect x="783.8" y="475.8" width="4.4" height="4.4" fill="#f4f6f8" stroke="#8a96a2" stroke-width="0.4"/><path d="M784.7 478.0h2.6M786.0 476.7v2.6" stroke="#223" stroke-width="0.6"/><rect x="793.3" y="476.4" width="4.6" height="3.6" fill="none" stroke="#e8edf2" stroke-width="0.6"/><path d="M793.3 475.6h2" stroke="#e8edf2" stroke-width="0.6"/><rect x="783.8" y="486.1" width="4.4" height="4.4" fill="#f4f6f8" stroke="#8a96a2" stroke-width="0.4"/><path d="M784.7 488.3h2.6M786.0 487.0v2.6" stroke="#223" stroke-width="0.6"/><rect x="793.3" y="486.7" width="4.6" height="3.6" fill="none" stroke="#e8edf2" stroke-width="0.6"/><path d="M793.3 485.9h2" stroke="#e8edf2" stroke-width="0.6"/><rect x="783.8" y="496.5" width="4.4" height="4.4" fill="#f4f6f8" stroke="#8a96a2" stroke-width="0.4"/><path d="M784.7 498.7h2.6M786.0 497.4v2.6" stroke="#223" stroke-width="0.6"/><rect x="793.3" y="497.1" width="4.6" height="3.6" fill="none" stroke="#e8edf2" stroke-width="0.6"/><path d="M793.3 496.3h2" stroke="#e8edf2" stroke-width="0.6"/><rect x="783.8" y="507.0" width="4.4" height="4.4" fill="#f4f6f8" stroke="#8a96a2" stroke-width="0.4"/><path d="M784.7 509.2h2.6M786.0 507.9v2.6" stroke="#223" stroke-width="0.6"/><rect x="793.3" y="507.6" width="4.6" height="3.6" fill="none" stroke="#e8edf2" stroke-width="0.6"/><path d="M793.3 506.8h2" stroke="#e8edf2" stroke-width="0.6"/><rect x="773.8" y="517.4" width="4.4" height="4.4" fill="#f4f6f8" stroke="#8a96a2" stroke-width="0.4"/><path d="M774.7 519.6h2.6M776.0 518.3v2.6" stroke="#223" stroke-width="0.6"/><rect x="781.8" y="515.6" width="8" height="8" fill="#f2f2f2"/><path d="M782.8 518.6h3M785.8 521.1h2" stroke="#556" stroke-width="0.6"/><rect x="763.8" y="527.8" width="4.4" height="4.4" fill="#f4f6f8" stroke="#8a96a2" stroke-width="0.4"/><path d="M764.7 530.0h2.6M766.0 528.7v2.6" stroke="#223" stroke-width="0.6"/><rect x="772.2" y="526.2" width="7.6" height="7.6" fill="#f5a01a"/><path d="M773.6 528.3h1.6v3.4h-1.6M776.6 528.3h1.6v3.4h-1.6z" stroke="#fff" stroke-width="0.5" fill="none"/></svg><span class="tree" style="left:53.6px;top:12.8px;transform:scaleX(.875);transform-origin:0 0">Keller, Garage</span><span class="tree" style="left:53.6px;top:23.2px;transform:scaleX(.875);transform-origin:0 0">Kellergang je 6m</span><span class="tree" style="left:53.6px;top:33.4px;transform:scaleX(.875);transform-origin:0 0">Kochnische</span><span class="tree" style="left:53.6px;top:43.8px;transform:scaleX(.875);transform-origin:0 0">Küche</span><span class="tree" style="left:53.6px;top:54.1px;transform:scaleX(.875);transform-origin:0 0">Schlaf-,Kinderzimmer, Büro</span><span class="tree" style="left:53.6px;top:64.5px;transform:scaleX(.875);transform-origin:0 0">WC-Raum</span><span class="tree" style="left:53.6px;top:75.0px;transform:scaleX(.875);transform-origin:0 0">Wohnzimmer</span><span class="tree" style="left:43.8px;top:85.4px;transform:scaleX(.875);transform-origin:0 0">Verbraucher mit eigenem Stromkreis</span><span class="tree" style="left:34.0px;top:95.8px;transform:scaleX(.875);transform-origin:0 0">Verteiler-Makros A4</span>
</div>
<div id="win3d" class="abs">
<svg class="abs" style="left:0;top:0" width="491" height="430.5" viewBox="509 15.5 491 430.5">
<path d="M581.3 432.8h0M580.3 427.8h0M579.4 422.9h0M578.4 418.1h0M577.5 413.4h0M576.6 408.9h0M575.8 404.5h0M574.9 400.2h0M574.1 396.0h0M573.3 391.9h0M572.5 387.9h0M571.7 384.0h0M571.0 380.2h0M570.3 376.5h0M569.6 372.8h0M568.9 369.3h0M568.2 365.8h0M567.5 362.4h0M566.9 359.1h0M566.2 355.9h0M588.4 433.5h0M587.3 428.4h0M586.2 423.5h0M585.2 418.7h0M584.2 414.0h0M583.2 409.5h0M582.3 405.0h0M581.4 400.7h0M580.4 396.5h0M579.6 392.4h0M578.7 388.4h0M577.9 384.5h0M577.0 380.6h0M576.2 376.9h0M575.5 373.3h0M574.7 369.7h0M573.9 366.2h0M573.2 362.8h0M572.5 359.5h0M571.8 356.2h0M571.1 353.1h0M595.5 434.1h0M594.3 429.0h0M593.1 424.1h0M592.0 419.2h0M590.9 414.6h0M589.8 410.0h0M588.8 405.5h0M587.8 401.2h0M586.8 397.0h0M585.8 392.9h0M584.9 388.8h0M584.0 384.9h0M583.1 381.1h0M582.2 377.4h0M581.4 373.7h0M580.5 370.1h0M579.7 366.6h0M578.9 363.2h0M578.1 359.9h0M577.4 356.6h0M576.6 353.4h0M575.9 350.3h0M602.6 434.7h0M601.3 429.6h0M600.0 424.6h0M598.8 419.8h0M597.6 415.1h0M596.5 410.5h0M609.7 435.3h0M608.3 430.2h0M607.0 425.2h0M605.7 420.4h0M604.4 415.7h0M603.1 411.1h0M601.9 406.6h0M615.4 430.8h0M613.9 425.8h0M612.5 421.0h0M611.2 416.2h0M609.8 411.6h0M608.5 407.1h0M607.2 402.8h0M622.5 431.4h0M620.9 426.4h0M619.4 421.6h0M617.9 416.8h0M616.5 412.2h0M615.1 407.7h0M613.8 403.3h0M612.5 399.0h0M629.6 432.0h0M627.9 427.0h0M626.3 422.1h0M624.8 417.4h0M623.2 412.7h0M621.8 408.2h0M620.3 403.8h0M618.9 399.5h0M617.5 395.3h0M636.7 432.7h0M634.9 427.6h0M633.2 422.7h0M631.6 417.9h0M630.0 413.3h0M628.4 408.8h0M626.9 404.3h0M625.4 400.0h0M623.9 395.8h0M622.5 391.7h0M643.8 433.3h0M642.0 428.2h0M640.2 423.3h0M638.4 418.5h0M636.7 413.8h0M635.1 409.3h0M633.5 404.9h0M631.9 400.5h0M630.4 396.3h0M628.9 392.2h0M627.4 388.2h0M651.0 433.9h0M649.1 428.8h0M647.2 423.9h0M645.3 419.1h0M643.5 414.4h0M641.8 409.8h0M640.1 405.4h0M638.4 401.1h0M636.8 396.8h0M635.2 392.7h0M633.7 388.7h0M632.2 384.8h0M658.2 434.5h0M656.2 429.4h0M654.2 424.5h0M652.2 419.7h0M650.3 415.0h0M648.5 410.4h0M646.7 405.9h0M645.0 401.6h0M643.3 397.3h0M641.6 393.2h0M640.0 389.2h0M638.4 385.2h0M636.8 381.4h0M665.4 435.2h0M663.3 430.0h0M661.2 425.1h0M659.2 420.2h0M657.2 415.5h0M655.2 410.9h0M653.4 406.5h0M651.5 402.1h0M649.7 397.8h0M648.0 393.7h0M646.3 389.7h0M644.6 385.7h0M643.0 381.9h0M641.4 378.1h0M670.4 430.7h0M668.2 425.7h0M666.1 420.8h0M664.0 416.1h0M662.0 411.5h0M660.0 407.0h0M658.1 402.6h0M656.2 398.4h0M654.4 394.2h0M652.6 390.1h0M650.9 386.2h0M649.2 382.3h0M647.5 378.6h0M645.9 374.9h0M677.6 431.3h0M675.3 426.3h0M673.1 421.4h0M670.9 416.6h0M668.8 412.0h0M666.7 407.5h0M664.7 403.1h0M662.7 398.9h0M660.8 394.7h0M659.0 390.6h0M657.2 386.7h0M655.4 382.8h0M653.6 379.0h0M652.0 375.3h0M650.3 371.7h0M684.8 431.9h0M682.4 426.9h0M680.1 422.0h0M677.8 417.2h0M675.6 412.6h0M673.4 408.1h0M671.3 403.7h0M669.3 399.4h0M667.3 395.2h0M665.3 391.1h0M663.4 387.1h0M661.6 383.2h0M659.8 379.5h0M658.0 375.7h0M656.3 372.1h0M654.6 368.6h0M692.0 432.5h0M689.5 427.5h0M687.1 422.6h0M684.7 417.8h0M682.4 413.1h0M680.2 408.6h0M678.0 404.2h0M675.8 399.9h0M673.8 395.7h0M671.7 391.6h0M669.8 387.6h0M667.8 383.7h0M665.9 379.9h0M664.1 376.2h0M662.3 372.6h0M660.5 369.0h0M658.8 365.5h0M699.3 433.1h0M696.7 428.1h0M694.1 423.1h0M691.7 418.3h0M689.3 413.7h0M686.9 409.1h0M684.6 404.7h0M682.4 400.4h0M680.3 396.2h0M678.1 392.1h0M676.1 388.1h0M674.1 384.2h0M672.1 380.4h0M670.2 376.6h0M668.3 373.0h0M666.5 369.4h0M664.7 366.0h0M663.0 362.6h0M706.5 433.7h0M703.8 428.7h0M701.2 423.7h0M698.6 418.9h0M696.1 414.2h0M693.7 409.7h0M691.3 405.2h0M689.0 400.9h0M686.8 396.7h0M684.6 392.6h0M682.4 388.6h0M680.3 384.6h0M678.3 380.8h0M676.3 377.1h0M674.4 373.4h0M672.5 369.9h0M670.6 366.4h0M668.8 363.0h0M667.0 359.6h0M713.8 434.4h0M711.0 429.3h0M708.3 424.3h0M705.6 419.5h0M703.0 414.8h0M700.5 410.2h0M698.0 405.8h0M695.6 401.4h0M693.3 397.2h0M691.0 393.1h0M688.8 389.0h0M686.6 385.1h0M684.5 381.3h0M682.4 377.5h0M680.4 373.9h0M678.5 370.3h0M676.5 366.8h0M674.6 363.4h0M672.8 360.0h0M671.0 356.8h0M721.1 435.0h0M718.2 429.9h0M715.4 424.9h0M712.6 420.1h0M709.9 415.4h0M707.3 410.8h0M704.8 406.3h0M702.3 401.9h0M699.9 397.7h0M697.5 393.6h0M695.2 389.5h0M692.9 385.6h0M690.7 381.7h0M688.6 378.0h0M686.5 374.3h0M684.5 370.7h0M682.5 367.2h0M680.5 363.8h0M678.6 360.4h0M676.7 357.2h0M674.9 354.0h0M725.5 430.5h0M722.5 425.5h0M719.7 420.6h0M716.9 415.9h0M714.2 411.3h0M711.5 406.8h0M708.9 402.5h0M706.4 398.2h0M704.0 394.1h0M701.6 390.0h0M699.3 386.0h0M697.0 382.2h0M694.8 378.4h0M692.6 374.7h0M690.5 371.1h0M688.4 367.6h0M686.4 364.2h0M684.4 360.8h0M682.5 357.5h0M680.6 354.3h0M678.7 351.2h0M732.7 431.1h0M729.7 426.1h0M726.7 421.2h0M723.8 416.5h0M721.0 411.9h0M718.3 407.4h0M715.6 403.0h0M713.0 398.7h0M710.5 394.5h0M708.0 390.5h0M705.6 386.5h0M703.3 382.6h0M701.0 378.9h0M698.7 375.2h0M696.5 371.6h0M694.4 368.0h0M692.3 364.6h0M690.2 361.2h0M688.2 357.9h0M686.3 354.7h0M684.3 351.6h0M682.5 348.5h0M740.0 431.7h0M736.9 426.7h0M733.8 421.8h0M730.8 417.0h0M727.9 412.4h0M725.1 407.9h0M722.3 403.5h0M719.6 399.2h0M717.0 395.0h0M714.5 391.0h0M712.0 387.0h0M709.5 383.1h0M707.2 379.3h0M704.8 375.6h0M702.6 372.0h0M700.4 368.5h0M698.2 365.0h0M696.1 361.6h0M694.0 358.3h0M692.0 355.1h0M690.0 351.9h0M688.1 348.8h0M686.2 345.8h0M747.3 432.3h0M744.1 427.3h0M740.9 422.4h0M737.8 417.6h0M734.8 413.0h0M731.9 408.4h0M729.1 404.0h0M726.3 399.7h0M723.6 395.5h0M720.9 391.5h0M718.4 387.5h0M715.8 383.6h0M713.4 379.8h0M711.0 376.1h0M708.6 372.4h0M706.4 368.9h0M704.1 365.4h0M701.9 362.0h0M699.8 358.7h0M697.7 355.5h0M695.7 352.3h0M693.7 349.2h0M691.7 346.2h0M689.8 343.2h0M754.7 432.9h0M751.3 427.9h0M748.0 423.0h0M744.9 418.2h0M741.8 413.5h0M738.7 409.0h0M735.8 404.6h0M732.9 400.2h0M730.1 396.0h0M727.4 391.9h0M724.8 387.9h0M722.2 384.0h0M719.6 380.2h0M717.2 376.5h0M714.7 372.9h0M712.4 369.3h0M710.1 365.8h0M707.8 362.4h0M705.6 359.1h0M703.4 355.9h0M701.3 352.7h0M699.3 349.6h0M697.2 346.5h0M695.3 343.6h0M693.3 340.6h0M762.0 433.6h0M758.6 428.5h0M755.2 423.6h0M751.9 418.8h0M748.7 414.1h0M745.6 409.5h0M742.6 405.1h0M739.6 400.8h0M736.7 396.5h0M733.9 392.4h0M731.2 388.4h0M728.5 384.5h0M725.9 380.7h0M723.3 376.9h0M720.8 373.3h0M718.4 369.7h0M716.0 366.2h0M713.7 362.8h0M711.4 359.5h0M709.2 356.3h0M707.0 353.1h0M704.9 350.0h0M702.8 346.9h0M700.8 343.9h0M698.8 341.0h0M696.8 338.1h0M769.4 434.2h0M765.9 429.1h0M762.4 424.1h0M759.0 419.3h0M755.7 414.6h0M752.5 410.1h0M749.4 405.6h0M746.3 401.3h0M743.3 397.0h0M740.5 392.9h0M737.6 388.9h0M734.9 385.0h0M732.2 381.1h0M729.5 377.4h0M727.0 373.7h0M724.5 370.2h0M722.0 366.7h0M719.6 363.2h0M717.3 359.9h0M715.0 356.6h0M712.7 353.4h0M710.5 350.3h0M708.4 347.3h0M706.3 344.3h0M704.2 341.3h0M702.2 338.5h0M700.2 335.7h0M776.8 434.8h0M773.2 429.7h0M769.6 424.7h0M766.1 419.9h0M762.7 415.2h0M759.4 410.6h0M756.2 406.1h0M753.0 401.8h0M750.0 397.5h0M747.0 393.4h0M744.1 389.4h0M741.2 385.4h0M738.5 381.6h0M735.8 377.8h0M733.1 374.2h0M730.5 370.6h0M728.0 367.1h0M725.5 363.7h0M723.1 360.3h0M720.8 357.0h0M718.5 353.8h0M716.2 350.7h0M714.0 347.6h0M711.8 344.6h0M709.7 341.7h0M707.6 338.8h0M705.6 336.0h0M703.6 333.2h0M784.3 435.4h0M780.5 430.3h0M776.8 425.3h0M773.2 420.5h0M769.7 415.8h0M766.3 411.2h0M763.0 406.7h0M759.8 402.3h0M756.6 398.1h0M753.6 393.9h0M750.6 389.9h0M747.6 385.9h0M744.8 382.0h0M742.0 378.3h0M739.3 374.6h0M736.6 371.0h0M734.0 367.5h0M731.5 364.1h0M729.0 360.7h0M726.6 357.4h0M724.2 354.2h0M721.9 351.1h0M719.6 348.0h0M717.4 345.0h0M715.2 342.0h0M713.1 339.1h0M711.0 336.3h0M708.9 333.6h0M706.9 330.8h0M787.8 430.9h0M784.1 425.9h0M780.4 421.1h0M776.8 416.3h0M773.3 411.7h0M769.9 407.2h0M766.5 402.8h0M763.3 398.6h0M760.1 394.4h0M757.1 390.3h0M754.1 386.4h0M751.1 382.5h0M748.3 378.7h0M745.5 375.0h0M742.7 371.4h0M740.1 367.9h0M737.4 364.5h0M734.9 361.1h0M732.4 357.8h0M730.0 354.6h0M727.6 351.4h0M725.2 348.4h0M722.9 345.3h0M720.7 342.4h0M718.5 339.5h0M716.4 336.7h0M714.3 333.9h0M712.2 331.2h0M710.2 328.5h0M795.2 431.5h0M791.3 426.5h0M787.5 421.6h0M783.8 416.9h0M780.2 412.3h0M776.7 407.7h0M773.3 403.4h0M770.0 399.1h0M766.7 394.9h0M763.6 390.8h0M760.5 386.8h0M757.5 383.0h0M754.5 379.2h0M751.7 375.5h0M748.8 371.9h0M746.1 368.3h0M743.4 364.9h0M740.8 361.5h0M738.2 358.2h0M735.7 355.0h0M733.3 351.8h0M730.9 348.7h0M728.5 345.7h0M726.2 342.7h0M724.0 339.8h0M721.8 337.0h0M719.6 334.2h0M717.5 331.5h0M715.4 328.8h0M713.4 326.2h0M802.6 432.2h0M798.6 427.1h0M794.7 422.2h0M790.9 417.5h0M787.2 412.8h0M783.6 408.3h0M780.1 403.9h0M776.7 399.6h0M773.4 395.4h0M770.1 391.3h0M766.9 387.3h0M763.9 383.4h0M760.8 379.6h0M757.9 375.9h0M755.0 372.3h0M752.2 368.7h0M749.4 365.3h0M746.7 361.9h0M744.1 358.6h0M741.5 355.4h0M739.0 352.2h0M736.5 349.1h0M734.1 346.1h0M731.7 343.1h0M729.4 340.2h0M727.2 337.3h0M724.9 334.5h0M722.8 331.8h0M720.6 329.1h0M718.5 326.5h0M716.5 323.9h0M810.1 432.8h0M806.0 427.7h0M801.9 422.8h0M798.0 418.0h0M794.3 413.4h0M790.6 408.8h0M787.0 404.4h0M783.4 400.1h0M780.0 395.9h0M776.7 391.8h0M773.4 387.8h0M770.2 383.9h0M767.1 380.1h0M764.1 376.4h0M761.1 372.7h0M758.3 369.2h0M755.4 365.7h0M752.7 362.3h0M750.0 359.0h0M747.3 355.7h0M744.7 352.6h0M742.2 349.5h0M739.7 346.4h0M737.3 343.4h0M734.9 340.5h0M732.6 337.7h0M730.3 334.9h0M728.1 332.1h0M725.9 329.4h0M723.7 326.8h0M721.6 324.2h0M719.6 321.7h0M817.5 433.4h0M813.3 428.3h0M809.2 423.4h0M805.2 418.6h0M801.3 413.9h0M797.5 409.4h0M793.8 404.9h0M790.2 400.6h0M786.7 396.4h0M783.3 392.3h0M779.9 388.3h0M776.7 384.4h0M773.5 380.5h0M770.4 376.8h0M767.3 373.2h0M764.4 369.6h0M761.4 366.1h0M758.6 362.7h0M755.8 359.4h0M753.1 356.1h0M750.5 352.9h0M747.9 349.8h0M745.3 346.8h0M742.9 343.8h0M740.4 340.9h0M738.0 338.0h0M735.7 335.2h0M733.4 332.5h0M731.2 329.8h0M729.0 327.1h0M726.8 324.5h0M724.7 322.0h0M722.6 319.5h0M825.0 434.0h0M820.7 428.9h0M816.5 424.0h0M812.4 419.2h0M808.4 414.5h0M804.5 409.9h0M800.7 405.5h0M797.0 401.1h0M793.4 396.9h0M789.9 392.8h0M786.4 388.7h0M783.1 384.8h0M779.8 381.0h0M776.6 377.2h0M773.5 373.6h0M770.5 370.0h0M767.5 366.5h0M764.6 363.1h0M761.7 359.8h0M759.0 356.5h0M756.2 353.3h0M753.6 350.2h0M751.0 347.1h0M748.4 344.1h0M745.9 341.2h0M743.5 338.3h0M741.1 335.5h0M738.7 332.8h0M736.4 330.1h0M734.2 327.4h0M732.0 324.8h0M729.8 322.3h0M727.7 319.8h0M725.6 317.4h0M832.5 434.6h0M828.1 429.5h0M823.7 424.6h0M819.5 419.7h0M815.4 415.0h0M811.5 410.5h0M807.6 406.0h0M803.8 401.6h0M800.1 397.4h0M796.5 393.3h0M793.0 389.2h0M789.5 385.3h0M786.2 381.4h0M782.9 377.7h0M779.7 374.0h0M776.6 370.4h0M773.6 366.9h0M770.6 363.5h0M767.7 360.2h0M764.8 356.9h0M762.0 353.7h0M759.3 350.6h0M756.6 347.5h0M754.0 344.5h0M751.5 341.6h0M748.9 338.7h0M746.5 335.9h0M744.1 333.1h0M741.7 330.4h0M739.4 327.8h0M737.2 325.2h0M734.9 322.6h0M732.8 320.1h0M730.6 317.6h0M728.5 315.2h0M840.0 435.3h0M835.5 430.1h0M831.1 425.2h0M826.7 420.3h0M822.6 415.6h0M818.5 411.0h0M814.5 406.5h0M810.6 402.2h0M806.8 397.9h0M803.1 393.8h0M799.5 389.7h0M796.0 385.8h0M792.6 381.9h0M789.2 378.1h0M785.9 374.5h0M782.8 370.9h0M779.6 367.4h0M776.6 363.9h0M773.6 360.6h0M770.7 357.3h0M767.8 354.1h0M765.0 350.9h0M762.3 347.9h0M759.6 344.9h0M757.0 341.9h0M754.4 339.0h0M751.9 336.2h0M749.5 333.4h0M747.0 330.7h0M744.7 328.1h0M742.4 325.5h0M740.1 322.9h0M737.8 320.4h0M735.7 317.9h0M733.5 315.5h0M731.4 313.2h0M842.9 430.8h0M838.4 425.8h0M834.0 420.9h0M829.7 416.2h0M825.5 411.5h0M821.4 407.1h0M817.4 402.7h0M813.6 398.4h0M809.8 394.2h0M806.1 390.2h0M802.5 386.2h0M799.0 382.4h0M795.5 378.6h0M792.2 374.9h0M788.9 371.3h0M785.7 367.8h0M782.6 364.3h0M779.5 361.0h0M776.6 357.7h0M773.6 354.5h0M770.8 351.3h0M768.0 348.2h0M765.2 345.2h0M762.6 342.3h0M759.9 339.4h0M757.3 336.5h0M754.8 333.8h0M752.4 331.0h0M749.9 328.4h0M747.6 325.8h0M745.2 323.2h0M743.0 320.7h0M740.7 318.2h0M738.5 315.8h0M736.4 313.4h0M734.2 311.1h0M850.4 431.4h0M845.8 426.4h0M841.2 421.5h0M836.8 416.7h0M832.5 412.1h0M828.4 407.6h0M824.3 403.2h0M820.3 398.9h0M816.5 394.7h0M812.7 390.7h0M809.0 386.7h0M805.4 382.8h0M801.9 379.0h0M798.5 375.3h0M795.1 371.7h0M791.8 368.2h0M788.6 364.7h0M785.5 361.4h0M782.5 358.1h0M779.5 354.8h0M776.5 351.7h0M773.7 348.6h0M770.9 345.6h0M768.1 342.6h0M765.4 339.7h0M762.8 336.9h0M760.2 334.1h0M757.7 331.4h0M755.2 328.7h0M752.8 326.1h0M750.4 323.5h0M748.1 321.0h0M745.8 318.5h0M743.5 316.1h0M741.3 313.7h0M739.2 311.4h0M737.0 309.1h0M857.9 432.0h0M853.2 427.0h0M848.5 422.1h0M844.0 417.3h0M839.6 412.7h0M835.3 408.1h0M831.2 403.7h0M827.1 399.4h0M823.2 395.2h0M819.3 391.2h0M815.5 387.2h0M811.8 383.3h0M808.3 379.5h0M804.7 375.8h0M801.3 372.2h0M798.0 368.6h0M794.7 365.2h0M791.5 361.8h0M788.4 358.5h0M785.3 355.2h0M782.3 352.1h0M779.4 349.0h0M776.5 345.9h0M773.7 343.0h0M771.0 340.1h0M768.3 337.2h0M765.6 334.4h0M763.0 331.7h0M760.5 329.0h0M758.0 326.4h0M755.6 323.8h0M753.2 321.3h0M750.9 318.8h0M748.6 316.4h0M746.3 314.0h0M744.1 311.7h0M741.9 309.4h0M739.8 307.1h0M865.4 432.6h0M860.6 427.6h0M855.8 422.6h0M851.2 417.9h0M846.7 413.2h0M842.4 408.7h0M838.1 404.2h0M833.9 399.9h0M829.9 395.7h0M825.9 391.6h0M822.1 387.6h0M818.3 383.7h0M814.6 379.9h0M811.0 376.2h0M807.5 372.6h0M804.1 369.0h0M800.8 365.6h0M797.5 362.2h0M794.3 358.9h0M791.2 355.6h0M788.1 352.4h0M785.1 349.3h0M782.2 346.3h0M779.3 343.3h0M776.5 340.4h0M773.7 337.6h0M771.0 334.8h0M768.4 332.0h0M765.8 329.3h0M763.3 326.7h0M760.8 324.1h0M758.3 321.6h0M755.9 319.1h0M753.6 316.7h0M751.3 314.3h0M749.0 311.9h0M746.8 309.6h0M744.6 307.4h0M742.5 305.2h0M873.0 433.2h0M868.0 428.2h0M863.2 423.2h0M858.4 418.4h0M853.9 413.8h0M849.4 409.2h0M845.0 404.8h0M840.8 400.5h0M836.6 396.2h0M832.6 392.1h0M828.6 388.1h0M824.8 384.2h0M821.0 380.4h0M817.4 376.7h0M813.8 373.0h0M810.3 369.5h0M806.9 366.0h0M803.5 362.6h0M800.2 359.3h0M797.0 356.0h0M793.9 352.8h0M790.8 349.7h0M787.9 346.7h0M784.9 343.7h0M782.0 340.8h0M779.2 337.9h0M776.5 335.1h0M773.8 332.3h0M771.1 329.7h0M768.5 327.0h0M766.0 324.4h0M763.5 321.9h0M761.0 319.4h0M758.6 317.0h0M756.3 314.6h0M754.0 312.2h0M751.7 309.9h0M749.5 307.7h0M747.3 305.4h0M745.1 303.2h0M880.6 433.8h0M875.5 428.8h0M870.5 423.8h0M865.7 419.0h0M861.0 414.3h0M856.4 409.8h0M852.0 405.3h0M847.6 401.0h0M843.4 396.7h0M839.3 392.6h0M835.2 388.6h0M831.3 384.7h0M827.4 380.8h0M823.7 377.1h0M820.0 373.5h0M816.5 369.9h0M813.0 366.4h0M809.5 363.0h0M806.2 359.6h0M802.9 356.4h0M799.7 353.2h0M796.6 350.1h0M793.5 347.0h0M790.5 344.0h0M787.6 341.1h0M784.7 338.2h0M781.9 335.4h0M779.2 332.7h0M776.5 330.0h0M773.8 327.3h0M771.2 324.7h0M768.7 322.2h0M766.2 319.7h0M763.7 317.3h0M761.3 314.9h0M758.9 312.5h0M756.6 310.2h0M754.3 307.9h0M752.1 305.7h0M749.9 303.5h0M747.8 301.4h0M888.2 434.5h0M883.0 429.4h0M877.9 424.4h0M873.0 419.6h0M868.2 414.9h0M863.5 410.3h0M858.9 405.8h0M854.5 401.5h0M850.2 397.2h0M845.9 393.1h0M841.8 389.1h0M837.8 385.1h0M833.9 381.3h0M830.1 377.6h0M826.3 373.9h0M822.7 370.3h0M819.1 366.8h0M815.6 363.4h0M812.2 360.0h0M808.8 356.8h0M805.6 353.6h0M802.4 350.4h0M799.2 347.4h0M796.2 344.4h0M793.2 341.4h0M790.3 338.6h0M787.4 335.8h0M784.6 333.0h0M781.8 330.3h0M779.1 327.6h0M776.4 325.0h0M773.8 322.5h0M771.3 320.0h0M768.8 317.5h0M766.3 315.1h0M763.9 312.8h0M761.5 310.5h0M759.2 308.2h0M756.9 306.0h0M754.7 303.8h0M752.5 301.6h0M750.3 299.5h0M895.8 435.1h0M890.5 430.0h0M885.3 425.0h0M880.3 420.2h0M875.4 415.4h0M870.6 410.8h0M865.9 406.4h0M861.4 402.0h0M857.0 397.8h0M852.7 393.6h0M848.5 389.6h0M844.3 385.6h0M840.3 381.8h0M836.4 378.0h0M832.6 374.3h0M828.9 370.7h0M825.2 367.2h0M821.7 363.8h0M818.2 360.4h0M814.8 357.2h0M811.4 354.0h0M808.2 350.8h0M805.0 347.7h0M801.8 344.7h0M798.8 341.8h0M795.8 338.9h0M792.8 336.1h0M790.0 333.3h0M787.2 330.6h0M784.4 328.0h0M781.7 325.4h0M779.0 322.8h0M776.4 320.3h0M773.9 317.8h0M771.4 315.4h0M768.9 313.1h0M766.5 310.7h0M764.1 308.5h0M761.8 306.2h0M759.5 304.0h0M757.3 301.9h0M755.1 299.7h0M752.9 297.7h0M898.0 430.6h0M892.7 425.6h0M887.6 420.7h0M882.6 416.0h0M877.7 411.4h0M872.9 406.9h0M868.3 402.5h0M863.8 398.3h0M859.4 394.1h0M855.1 390.0h0M850.9 386.1h0M846.8 382.2h0M842.8 378.4h0M838.9 374.8h0M835.1 371.2h0M831.4 367.6h0M827.7 364.2h0M824.2 360.8h0M820.7 357.6h0M817.3 354.3h0M814.0 351.2h0M810.7 348.1h0M807.5 345.1h0M804.4 342.1h0M801.3 339.3h0M798.3 336.4h0M795.4 333.7h0M792.5 330.9h0M789.7 328.3h0M786.9 325.7h0M784.2 323.1h0M781.6 320.6h0M779.0 318.1h0M776.4 315.7h0M773.9 313.3h0M771.4 311.0h0M769.0 308.7h0M766.6 306.5h0M764.3 304.3h0M762.0 302.1h0M759.8 300.0h0M757.6 297.9h0M755.4 295.9h0M905.6 431.2h0M900.2 426.2h0M894.9 421.3h0M889.8 416.6h0M884.8 411.9h0M880.0 407.4h0M875.3 403.0h0M870.6 398.8h0M866.2 394.6h0M861.8 390.5h0M857.5 386.6h0M853.3 382.7h0M849.2 378.9h0M845.3 375.2h0M841.4 371.6h0M837.6 368.1h0M833.8 364.6h0M830.2 361.2h0M826.7 357.9h0M823.2 354.7h0M819.8 351.6h0M816.5 348.5h0M813.2 345.5h0M810.0 342.5h0M806.9 339.6h0M803.8 336.8h0M800.8 334.0h0M797.9 331.3h0M795.0 328.6h0M792.2 326.0h0M789.4 323.4h0M786.7 320.9h0M784.1 318.4h0M781.5 316.0h0M778.9 313.6h0M776.4 311.3h0M773.9 309.0h0M771.5 306.8h0M769.1 304.5h0M766.8 302.4h0M764.5 300.2h0M762.2 298.2h0M760.0 296.1h0M757.8 294.1h0M907.7 426.8h0M902.3 421.9h0M897.1 417.1h0M892.0 412.5h0M887.0 408.0h0M882.2 403.6h0M877.5 399.3h0M872.9 395.1h0M868.5 391.0h0M864.1 387.0h0M859.8 383.1h0M855.7 379.3h0M851.6 375.6h0M847.6 372.0h0M843.8 368.5h0M840.0 365.0h0M836.3 361.6h0M832.6 358.3h0M829.1 355.1h0M825.6 351.9h0M822.2 348.8h0M818.9 345.8h0M815.7 342.9h0M812.5 339.9h0M809.3 337.1h0M806.3 334.3h0M803.3 331.6h0M800.4 328.9h0M797.5 326.3h0M794.7 323.7h0M791.9 321.2h0M789.2 318.7h0M786.5 316.3h0M783.9 313.9h0M781.4 311.6h0M778.8 309.3h0M776.4 307.0h0M773.9 304.8h0M771.6 302.6h0M769.2 300.5h0M766.9 298.4h0M764.7 296.3h0M762.5 294.3h0M760.3 292.3h0M909.7 422.5h0M904.4 417.7h0M899.2 413.0h0M894.1 408.5h0M889.2 404.1h0M884.4 399.8h0M879.7 395.6h0M875.2 391.5h0M870.7 387.5h0M866.4 383.6h0M862.1 379.8h0M858.0 376.1h0M853.9 372.5h0M850.0 368.9h0M846.1 365.4h0M842.3 362.0h0M838.6 358.7h0M835.0 355.5h0M831.5 352.3h0M828.0 349.2h0M824.6 346.2h0M821.3 343.2h0M818.1 340.3h0M814.9 337.4h0M811.8 334.6h0M808.7 331.9h0M805.7 329.2h0M802.8 326.6h0M799.9 324.0h0M797.1 321.5h0M794.3 319.0h0M791.6 316.6h0M788.9 314.2h0M786.3 311.8h0M783.8 309.5h0M781.3 307.3h0M778.8 305.1h0M776.4 302.9h0M774.0 300.8h0M771.6 298.7h0M769.3 296.6h0M767.1 294.6h0M764.8 292.6h0M762.7 290.6h0M911.7 418.3h0M906.4 413.6h0M901.2 409.1h0M896.2 404.6h0M891.3 400.3h0M886.5 396.1h0M881.9 392.0h0M877.3 388.0h0M872.9 384.1h0M868.6 380.3h0M864.4 376.5h0M860.2 372.9h0M856.2 369.3h0M852.2 365.8h0M848.4 362.4h0M844.6 359.1h0M840.9 355.9h0M837.3 352.7h0M833.8 349.6h0M830.4 346.5h0M827.0 343.6h0M823.7 340.6h0M820.4 337.8h0M817.2 335.0h0M814.1 332.2h0M811.1 329.5h0M808.1 326.9h0M805.2 324.3h0M802.3 321.8h0M799.5 319.3h0M796.7 316.9h0M794.0 314.5h0M791.3 312.1h0M788.7 309.8h0M786.1 307.6h0M783.6 305.3h0M781.2 303.1h0M778.7 301.0h0M776.3 298.9h0M774.0 296.8h0M771.7 294.8h0M769.4 292.8h0M767.2 290.8h0M765.0 288.9h0M913.6 414.2h0M908.4 409.6h0M903.2 405.2h0M898.3 400.8h0M893.4 396.6h0M888.6 392.5h0M884.0 388.5h0M879.5 384.5h0M875.1 380.7h0M870.8 377.0h0M866.5 373.3h0M862.4 369.7h0M858.4 366.3h0M854.5 362.9h0M850.6 359.5h0M846.9 356.3h0M843.2 353.1h0M839.6 350.0h0M836.1 346.9h0M832.7 343.9h0M829.3 341.0h0M826.0 338.1h0M822.7 335.3h0M819.6 332.6h0M816.5 329.9h0M813.4 327.2h0M810.4 324.6h0M807.5 322.1h0M804.6 319.6h0M801.8 317.1h0M799.0 314.8h0M796.3 312.4h0M793.7 310.1h0M791.1 307.8h0M788.5 305.6h0M786.0 303.4h0M783.5 301.3h0M781.1 299.1h0M778.7 297.1h0M776.3 295.0h0M774.0 293.0h0M771.8 291.1h0M769.5 289.1h0M767.3 287.2h0M915.5 410.1h0M910.3 405.7h0M905.2 401.3h0M900.2 397.1h0M895.4 393.0h0M890.7 388.9h0M886.1 385.0h0M881.6 381.2h0M877.2 377.4h0M872.9 373.8h0M868.7 370.2h0M864.6 366.7h0M860.6 363.3h0M856.7 359.9h0M852.9 356.6h0M849.1 353.5h0M845.4 350.3h0M841.9 347.3h0M838.4 344.3h0M834.9 341.3h0M831.5 338.5h0M828.2 335.6h0M825.0 332.9h0M821.9 330.2h0M818.7 327.5h0M815.7 324.9h0M812.7 322.4h0M809.8 319.9h0M806.9 317.4h0M804.1 315.0h0M801.3 312.7h0M798.6 310.4h0M796.0 308.1h0M793.4 305.9h0M790.8 303.7h0M788.3 301.5h0M785.8 299.4h0M783.4 297.3h0M781.0 295.3h0M778.6 293.3h0M776.3 291.3h0M774.0 289.4h0M771.8 287.5h0M769.6 285.6h0M917.4 406.2h0M912.2 401.9h0M907.1 397.6h0M902.2 393.5h0M897.4 389.4h0M892.7 385.5h0M888.1 381.6h0M883.6 377.9h0M879.3 374.2h0M875.0 370.6h0M870.8 367.1h0M866.7 363.7h0M862.7 360.3h0M858.8 357.0h0M855.0 353.8h0M851.3 350.7h0M847.6 347.6h0M844.1 344.6h0M840.6 341.7h0M837.1 338.8h0M833.8 336.0h0M830.5 333.2h0M827.3 330.5h0M824.1 327.8h0M821.0 325.2h0M818.0 322.7h0M815.0 320.2h0M812.1 317.7h0M809.2 315.3h0M806.4 313.0h0M803.6 310.6h0M800.9 308.4h0M798.2 306.1h0M795.6 303.9h0M793.1 301.8h0M790.5 299.6h0M788.1 297.6h0M785.6 295.5h0M783.2 293.5h0M780.9 291.5h0M778.6 289.6h0M776.3 287.7h0M774.1 285.8h0M771.9 284.0h0M919.2 402.4h0M914.0 398.1h0M909.0 394.0h0M904.1 389.9h0M899.3 385.9h0M894.6 382.1h0M890.1 378.3h0M885.6 374.6h0M881.3 371.0h0M877.0 367.5h0M872.9 364.1h0M868.8 360.7h0M864.8 357.4h0M861.0 354.2h0M857.2 351.1h0M853.4 348.0h0M849.8 345.0h0M846.2 342.0h0M842.7 339.1h0M839.3 336.3h0M836.0 333.5h0M832.7 330.8h0M829.5 328.2h0M826.3 325.6h0M823.2 323.0h0M820.2 320.5h0M817.2 318.0h0M814.3 315.6h0M811.4 313.2h0M808.6 310.9h0M805.8 308.6h0M803.1 306.4h0M800.5 304.2h0M797.9 302.0h0M795.3 299.9h0M792.8 297.8h0M790.3 295.8h0M787.9 293.8h0M785.5 291.8h0M783.1 289.8h0M780.8 287.9h0M778.5 286.0h0M776.3 284.2h0M774.1 282.4h0M921.0 398.6h0M915.8 394.4h0M910.8 390.4h0M906.0 386.4h0M901.2 382.5h0M896.6 378.8h0M892.0 375.1h0M887.6 371.5h0M883.3 367.9h0M879.0 364.5h0M874.9 361.1h0M870.9 357.8h0M866.9 354.6h0M863.0 351.4h0M859.2 348.4h0M855.5 345.3h0M851.9 342.4h0M848.3 339.5h0M844.9 336.6h0M841.4 333.9h0M838.1 331.1h0M834.8 328.5h0M831.6 325.9h0M828.5 323.3h0M825.4 320.8h0M822.3 318.3h0M819.4 315.9h0M816.5 313.5h0M813.6 311.2h0M810.8 308.9h0M808.0 306.7h0M805.3 304.4h0M802.7 302.3h0M800.1 300.2h0M797.5 298.1h0M795.0 296.0h0M792.5 294.0h0M790.0 292.0h0M787.7 290.1h0M785.3 288.1h0M783.0 286.3h0M780.7 284.4h0M778.5 282.6h0M776.3 280.8h0M922.7 394.9h0M917.6 390.9h0M912.6 386.9h0M907.8 383.0h0M903.1 379.2h0M898.4 375.5h0M893.9 371.9h0M889.5 368.3h0M885.2 364.9h0M881.0 361.5h0M876.9 358.2h0M872.9 355.0h0M868.9 351.8h0M865.1 348.7h0M861.3 345.7h0M857.6 342.7h0M854.0 339.8h0M850.4 337.0h0M847.0 334.2h0M843.6 331.5h0M840.2 328.8h0M836.9 326.2h0M833.7 323.6h0M830.6 321.1h0M827.5 318.6h0M824.5 316.2h0M821.5 313.8h0M818.6 311.5h0M815.8 309.2h0M812.9 306.9h0M810.2 304.7h0M807.5 302.5h0M804.8 300.4h0M802.2 298.3h0M799.6 296.3h0M797.1 294.2h0M794.6 292.2h0M792.2 290.3h0M789.8 288.4h0M787.5 286.5h0M785.1 284.6h0M782.9 282.8h0M780.6 281.0h0M778.4 279.2h0M924.4 391.4h0M919.3 387.4h0M914.4 383.5h0M909.6 379.7h0M904.9 375.9h0M900.3 372.3h0M895.8 368.8h0M891.4 365.3h0M887.1 361.9h0M882.9 358.6h0M878.8 355.4h0M874.8 352.2h0M870.9 349.1h0M867.1 346.1h0M863.3 343.1h0M859.6 340.2h0M856.0 337.3h0M852.5 334.5h0M849.0 331.8h0M845.6 329.1h0M842.3 326.5h0M839.0 323.9h0M835.8 321.4h0M832.7 318.9h0M829.6 316.5h0M826.6 314.1h0M823.6 311.7h0M820.7 309.4h0M817.9 307.2h0M815.1 305.0h0M812.3 302.8h0M809.6 300.7h0M807.0 298.6h0M804.3 296.5h0M801.8 294.5h0M799.3 292.5h0M796.8 290.5h0M794.3 288.6h0M791.9 286.7h0M789.6 284.8h0M787.3 283.0h0M785.0 281.2h0M782.8 279.4h0M780.6 277.7h0M926.0 387.8h0M921.0 383.9h0M916.1 380.1h0M911.3 376.4h0M906.7 372.7h0M902.1 369.2h0M897.6 365.7h0M893.3 362.3h0M889.0 359.0h0M884.8 355.7h0M880.7 352.6h0M876.8 349.5h0M872.8 346.4h0M869.0 343.4h0M865.3 340.5h0M861.6 337.7h0M858.0 334.9h0M854.5 332.1h0M851.0 329.4h0M847.6 326.8h0M844.3 324.2h0M841.1 321.7h0M837.9 319.2h0M834.8 316.8h0M831.7 314.4h0M828.7 312.0h0M825.7 309.7h0M822.8 307.5h0M820.0 305.2h0M817.2 303.0h0M814.4 300.9h0M811.7 298.8h0M809.0 296.7h0M806.4 294.7h0M803.9 292.7h0M801.4 290.7h0M798.9 288.8h0M796.4 286.9h0M794.0 285.1h0M791.7 283.2h0M789.4 281.4h0M787.1 279.6h0M784.9 277.9h0M782.6 276.2h0M927.7 384.4h0M922.7 380.6h0M917.8 376.8h0M913.0 373.2h0M908.4 369.6h0M903.9 366.1h0M899.4 362.7h0M895.1 359.4h0M890.8 356.1h0M886.7 352.9h0M882.6 349.8h0M878.6 346.8h0M874.8 343.8h0M870.9 340.9h0M867.2 338.0h0M863.6 335.2h0M860.0 332.4h0M856.5 329.7h0M853.0 327.1h0M849.6 324.5h0M846.3 322.0h0M843.1 319.5h0M839.9 317.0h0M836.8 314.6h0M833.7 312.3h0M830.7 310.0h0M827.8 307.7h0M824.9 305.5h0M822.0 303.3h0M819.2 301.2h0M816.5 299.1h0M813.8 297.0h0M811.1 294.9h0M808.5 292.9h0M805.9 291.0h0M803.4 289.0h0M800.9 287.1h0M798.5 285.3h0M796.1 283.4h0M793.8 281.6h0M791.4 279.9h0M789.2 278.1h0M786.9 276.4h0M784.7 274.7h0M929.2 381.0h0M924.3 377.3h0M919.5 373.6h0M914.7 370.0h0M910.1 366.5h0M905.6 363.1h0M901.2 359.8h0M896.9 356.5h0M892.6 353.3h0M888.5 350.2h0M884.5 347.1h0M880.5 344.1h0M876.6 341.2h0M872.8 338.3h0M869.1 335.5h0M865.5 332.8h0M861.9 330.1h0M858.4 327.4h0M855.0 324.8h0M851.6 322.3h0M848.3 319.8h0M845.1 317.3h0M841.9 314.9h0M838.8 312.6h0M835.7 310.3h0M832.7 308.0h0M829.8 305.8h0M826.9 303.6h0M824.0 301.4h0M821.2 299.3h0M818.5 297.2h0M815.8 295.2h0M813.1 293.2h0M810.5 291.2h0M808.0 289.3h0M805.5 287.4h0M803.0 285.5h0M800.6 283.7h0M798.2 281.8h0M795.8 280.1h0M793.5 278.3h0M791.2 276.6h0M789.0 274.9h0M786.8 273.2h0M930.8 377.7h0M925.9 374.1h0M921.1 370.5h0M916.4 367.0h0M911.8 363.5h0M907.3 360.2h0M902.9 356.9h0M898.6 353.7h0M894.4 350.6h0M890.3 347.5h0M886.3 344.5h0M882.3 341.6h0M878.5 338.7h0M874.7 335.9h0M871.0 333.1h0M867.4 330.4h0M863.8 327.7h0M860.3 325.1h0M856.9 322.6h0M853.5 320.1h0M850.2 317.6h0M847.0 315.2h0M843.8 312.9h0M840.7 310.5h0M837.7 308.3h0M834.7 306.0h0M831.7 303.8h0M828.9 301.7h0M826.0 299.6h0M823.2 297.5h0M820.5 295.4h0M817.8 293.4h0M815.1 291.4h0M812.5 289.5h0M810.0 287.6h0M807.5 285.7h0M805.0 283.9h0M802.6 282.1h0M800.2 280.3h0M797.8 278.5h0M795.5 276.8h0M793.2 275.1h0M791.0 273.4h0M788.8 271.8h0M932.3 374.5h0M927.4 370.9h0M922.7 367.4h0M918.0 363.9h0M913.4 360.6h0M909.0 357.3h0M904.6 354.1h0M900.3 350.9h0M896.1 347.9h0M892.1 344.9h0M888.0 341.9h0M884.1 339.0h0M880.3 336.2h0M876.5 333.4h0M872.8 330.7h0M869.2 328.0h0M865.7 325.4h0M862.2 322.9h0M858.8 320.4h0M855.4 317.9h0M852.1 315.5h0M848.9 313.1h0M845.8 310.8h0M842.7 308.5h0M839.6 306.3h0M836.6 304.1h0M833.7 301.9h0M830.8 299.8h0M828.0 297.7h0M825.2 295.7h0M822.4 293.7h0M819.8 291.7h0M817.1 289.7h0M814.5 287.8h0M812.0 285.9h0M809.4 284.1h0M807.0 282.3h0M804.5 280.5h0M802.2 278.7h0M799.8 277.0h0M797.5 275.3h0M795.2 273.6h0M793.0 272.0h0M790.7 270.3h0M933.8 371.3h0M929.0 367.8h0M924.2 364.4h0M919.6 361.0h0M915.0 357.7h0M910.6 354.5h0M906.3 351.3h0M902.0 348.2h0M897.8 345.2h0M893.8 342.3h0M889.8 339.4h0M885.9 336.5h0M882.1 333.8h0M878.3 331.0h0M874.6 328.4h0M871.0 325.8h0M867.5 323.2h0M864.0 320.7h0M860.6 318.2h0M857.3 315.8h0M854.0 313.4h0M850.8 311.1h0M847.7 308.8h0M844.6 306.6h0M841.5 304.3h0M838.5 302.2h0M835.6 300.1h0M832.7 298.0h0M829.9 295.9h0M827.1 293.9h0M824.4 291.9h0M821.7 290.0h0M819.1 288.0h0M816.5 286.2h0M813.9 284.3h0M811.4 282.5h0M808.9 280.7h0M806.5 278.9h0M804.1 277.2h0M801.8 275.5h0M799.4 273.8h0M797.2 272.2h0M794.9 270.5h0M792.7 268.9h0M935.3 368.2h0M930.5 364.8h0M925.7 361.4h0M921.1 358.1h0M916.6 354.9h0M912.2 351.7h0M907.9 348.6h0M903.7 345.6h0M899.5 342.6h0M895.5 339.7h0M891.5 336.9h0M887.6 334.1h0M883.8 331.4h0M880.1 328.7h0M876.4 326.1h0M872.8 323.5h0M869.3 321.0h0M865.8 318.5h0M862.4 316.1h0M859.1 313.7h0M855.9 311.4h0M852.7 309.1h0M849.5 306.8h0M846.4 304.6h0M843.4 302.4h0M840.4 300.3h0M837.5 298.2h0M834.6 296.2h0M831.8 294.1h0M829.0 292.1h0M826.3 290.2h0M823.6 288.3h0M821.0 286.4h0M818.4 284.5h0M815.8 282.7h0M813.3 280.9h0M810.9 279.1h0M808.4 277.4h0M806.0 275.7h0M803.7 274.0h0M801.4 272.4h0M799.1 270.7h0M796.8 269.1h0M794.6 267.5h0M936.7 365.2h0M931.9 361.8h0M927.2 358.5h0M922.7 355.2h0M918.2 352.1h0M913.8 349.0h0M909.5 345.9h0M905.3 343.0h0M901.2 340.1h0M897.1 337.2h0M893.2 334.4h0M889.3 331.7h0M885.5 329.0h0M881.8 326.4h0M878.1 323.8h0M874.6 321.3h0M871.1 318.8h0M867.6 316.4h0M864.2 314.0h0M860.9 311.6h0M857.7 309.3h0M854.5 307.1h0M851.3 304.9h0M848.3 302.7h0M845.2 300.6h0M842.3 298.5h0M839.4 296.4h0M836.5 294.4h0M833.7 292.4h0M830.9 290.4h0M828.2 288.5h0M825.5 286.6h0M822.9 284.8h0M820.3 282.9h0M817.7 281.1h0M815.2 279.4h0M812.7 277.6h0M810.3 275.9h0M807.9 274.2h0M805.6 272.5h0M803.3 270.9h0M801.0 269.3h0M798.7 267.7h0M796.5 266.2h0M938.1 362.2h0M933.4 358.9h0M928.7 355.6h0M924.2 352.4h0M919.7 349.3h0M915.3 346.3h0M911.1 343.3h0M906.9 340.4h0M902.8 337.5h0M898.8 334.7h0M894.8 332.0h0M891.0 329.3h0M887.2 326.7h0M883.5 324.1h0M879.9 321.6h0M876.3 319.1h0M872.8 316.6h0M869.4 314.3h0M866.0 311.9h0M862.7 309.6h0M859.5 307.3h0M856.3 305.1h0M853.1 303.0h0M850.1 300.8h0M847.1 298.7h0M844.1 296.6h0M841.2 294.6h0M838.3 292.6h0M835.5 290.7h0M832.7 288.7h0M830.0 286.8h0M827.3 285.0h0M824.7 283.1h0M822.1 281.3h0M819.6 279.6h0M817.1 277.8h0M814.6 276.1h0M812.2 274.4h0M809.8 272.7h0M807.5 271.1h0M805.1 269.5h0M802.9 267.9h0M800.6 266.3h0M798.4 264.8h0M939.5 359.3h0M934.8 356.0h0M930.1 352.8h0M925.6 349.7h0M921.2 346.7h0M916.8 343.7h0M912.6 340.7h0M908.4 337.9h0M904.4 335.1h0M900.4 332.3h0M896.4 329.6h0M892.6 327.0h0M888.8 324.4h0M885.2 321.9h0M881.5 319.4h0M878.0 316.9h0M874.5 314.5h0M871.1 312.2h0M867.7 309.9h0M864.4 307.6h0M861.2 305.4h0M858.0 303.2h0M854.9 301.1h0M851.9 299.0h0M848.8 296.9h0M845.9 294.9h0M843.0 292.9h0M840.1 290.9h0M837.3 289.0h0M834.6 287.1h0M831.8 285.2h0M829.2 283.4h0M826.5 281.5h0M824.0 279.8h0M821.4 278.0h0M818.9 276.3h0M816.5 274.6h0M814.0 272.9h0M811.7 271.3h0M809.3 269.7h0M807.0 268.1h0M804.7 266.5h0M802.5 265.0h0M800.3 263.5h0M940.9 356.4h0M936.2 353.2h0M931.6 350.1h0M927.1 347.0h0M922.6 344.0h0M918.3 341.1h0M914.1 338.2h0M910.0 335.4h0M905.9 332.7h0M901.9 330.0h0M898.0 327.3h0M894.2 324.7h0M890.5 322.2h0M886.8 319.7h0M883.2 317.2h0M879.7 314.8h0M876.2 312.5h0M872.8 310.2h0M869.4 307.9h0M866.2 305.7h0M862.9 303.5h0M859.8 301.3h0M856.7 299.2h0M853.6 297.1h0M850.6 295.1h0M847.7 293.1h0M844.8 291.1h0M841.9 289.2h0M839.1 287.3h0M836.4 285.4h0M833.6 283.6h0M831.0 281.8h0M828.4 280.0h0M825.8 278.2h0M823.2 276.5h0M820.7 274.8h0M818.3 273.1h0M815.9 271.5h0M813.5 269.9h0M811.1 268.3h0M808.8 266.7h0M806.5 265.2h0M804.3 263.6h0M802.1 262.1h0M942.2 353.6h0M937.5 350.4h0M932.9 347.4h0M928.5 344.4h0M924.1 341.4h0M919.8 338.6h0M915.6 335.7h0M911.5 333.0h0M907.4 330.3h0M903.5 327.6h0M899.6 325.0h0M895.8 322.5h0M892.1 320.0h0M888.4 317.5h0M884.8 315.1h0M881.3 312.7h0M877.8 310.4h0M874.5 308.2h0M871.1 305.9h0M867.8 303.7h0M864.6 301.6h0M861.5 299.5h0M858.4 297.4h0M855.3 295.3h0M852.3 293.3h0M849.4 291.4h0M846.5 289.4h0M843.7 287.5h0M840.9 285.6h0M838.1 283.8h0M835.4 282.0h0M832.8 280.2h0M830.1 278.4h0M827.6 276.7h0M825.0 275.0h0M822.5 273.3h0M820.1 271.7h0M817.7 270.1h0M815.3 268.5h0M812.9 266.9h0M810.6 265.3h0M808.4 263.8h0M806.1 262.3h0M803.9 260.8h0M943.5 350.8h0M938.8 347.7h0M934.3 344.7h0M929.9 341.8h0M925.5 338.9h0M921.2 336.1h0M917.1 333.3h0M913.0 330.6h0M908.9 327.9h0M905.0 325.3h0M901.1 322.8h0M897.4 320.3h0M893.6 317.8h0M890.0 315.4h0M886.4 313.0h0M882.9 310.7h0M879.5 308.4h0M876.1 306.2h0M872.8 304.0h0M869.5 301.8h0M866.3 299.7h0M863.2 297.6h0M860.1 295.6h0M857.0 293.6h0M854.1 291.6h0M851.1 289.6h0M848.2 287.7h0M845.4 285.9h0M842.6 284.0h0M839.9 282.2h0M837.2 280.4h0M834.5 278.6h0M831.9 276.9h0M829.3 275.2h0M826.8 273.5h0M824.3 271.9h0M821.8 270.3h0M819.4 268.7h0M817.1 267.1h0M814.7 265.5h0M812.4 264.0h0M810.1 262.5h0M807.9 261.0h0M805.7 259.6h0M944.8 348.1h0M940.2 345.1h0M935.6 342.1h0M931.2 339.2h0M926.9 336.4h0M922.6 333.6h0M918.5 330.9h0M914.4 328.3h0M910.4 325.6h0M906.5 323.1h0M902.7 320.6h0M898.9 318.1h0M895.2 315.7h0M891.6 313.3h0M888.0 311.0h0M884.5 308.7h0M881.1 306.5h0M877.7 304.2h0M874.4 302.1h0M871.2 300.0h0M868.0 297.9h0M864.8 295.8h0M861.7 293.8h0M858.7 291.8h0M855.7 289.9h0M852.8 288.0h0M849.9 286.1h0M847.1 284.2h0M844.3 282.4h0M841.6 280.6h0M838.9 278.8h0M836.2 277.1h0M833.6 275.4h0M831.1 273.7h0M828.5 272.1h0M826.0 270.4h0M823.6 268.8h0M821.2 267.3h0M818.8 265.7h0M816.5 264.2h0M814.2 262.7h0M811.9 261.2h0M809.7 259.7h0M807.4 258.3h0M946.0 345.5h0M941.4 342.5h0M937.0 339.6h0M932.6 336.8h0M928.2 334.0h0M924.0 331.2h0M919.9 328.6h0M915.8 326.0h0M911.9 323.4h0M908.0 320.9h0M904.1 318.4h0M900.4 316.0h0M896.7 313.6h0M893.1 311.3h0M889.6 309.0h0M886.1 306.7h0M882.7 304.5h0M879.3 302.3h0M876.0 300.2h0M872.8 298.1h0M869.6 296.1h0M866.5 294.0h0M863.4 292.1h0M860.4 290.1h0M857.4 288.2h0M854.5 286.3h0M851.6 284.4h0M848.8 282.6h0M846.0 280.8h0M843.3 279.1h0M840.6 277.3h0M837.9 275.6h0M835.3 273.9h0M832.8 272.3h0M830.2 270.6h0M827.8 269.0h0M825.3 267.5h0M822.9 265.9h0M820.5 264.4h0M818.2 262.9h0M815.9 261.4h0M813.6 259.9h0M811.4 258.5h0M809.2 257.0h0M947.3 342.8h0M942.7 339.9h0M938.2 337.1h0M933.9 334.3h0M929.6 331.6h0M925.4 328.9h0M921.3 326.3h0M917.2 323.7h0M913.3 321.2h0M909.4 318.7h0M905.6 316.3h0M901.9 313.9h0M898.2 311.5h0M894.6 309.2h0M891.1 307.0h0M887.6 304.8h0M884.2 302.6h0M880.9 300.5h0M877.6 298.4h0M874.4 296.3h0M871.2 294.3h0M868.1 292.3h0M865.0 290.3h0M862.0 288.4h0M859.0 286.5h0M856.1 284.7h0M853.3 282.8h0M850.4 281.0h0M847.7 279.3h0M844.9 277.5h0M842.3 275.8h0M839.6 274.1h0M837.0 272.5h0M834.5 270.8h0M831.9 269.2h0M829.5 267.6h0M827.0 266.1h0M824.6 264.5h0M822.2 263.0h0M819.9 261.5h0M817.6 260.1h0M815.3 258.6h0M813.1 257.2h0M810.9 255.8h0M948.5 340.3h0M943.9 337.4h0M939.5 334.6h0M935.2 331.9h0M930.9 329.2h0M926.7 326.6h0M922.6 324.0h0M918.6 321.5h0M914.7 319.0h0M910.8 316.5h0M907.0 314.2h0M903.3 311.8h0M899.7 309.5h0M896.1 307.2h0M892.6 305.0h0M889.1 302.9h0M885.7 300.7h0M882.4 298.6h0M879.1 296.5h0M875.9 294.5h0M872.8 292.5h0M869.6 290.6h0M866.6 288.6h0M863.6 286.7h0M860.6 284.9h0M857.7 283.0h0M854.9 281.2h0M852.1 279.5h0M849.3 277.7h0M846.6 276.0h0M843.9 274.3h0M841.3 272.7h0M838.7 271.0h0M836.1 269.4h0M833.6 267.8h0M831.1 266.3h0M828.7 264.7h0M826.3 263.2h0M823.9 261.7h0M821.6 260.2h0M819.3 258.8h0M817.0 257.4h0M814.8 256.0h0M812.6 254.6h0M949.6 337.8h0M945.2 335.0h0M940.7 332.2h0M936.4 329.5h0M932.2 326.9h0M928.0 324.3h0M924.0 321.8h0M920.0 319.3h0M916.1 316.8h0M912.2 314.4h0M908.5 312.1h0M904.8 309.8h0M901.1 307.5h0M897.6 305.3h0M894.1 303.1h0M890.6 301.0h0M887.2 298.9h0M883.9 296.8h0M880.7 294.8h0M877.5 292.8h0M874.3 290.8h0M871.2 288.9h0M868.2 287.0h0M865.2 285.1h0M862.2 283.3h0M859.3 281.5h0M856.5 279.7h0M853.7 277.9h0M850.9 276.2h0M848.2 274.5h0M845.5 272.9h0M842.9 271.2h0M840.3 269.6h0M837.8 268.0h0M835.2 266.4h0M832.8 264.9h0M830.3 263.4h0M827.9 261.9h0M825.6 260.4h0M823.2 259.0h0M821.0 257.5h0M818.7 256.1h0M816.5 254.7h0M814.3 253.4h0M950.8 335.3h0M946.3 332.5h0M942.0 329.8h0M937.7 327.2h0M933.5 324.6h0M929.3 322.1h0M925.3 319.6h0M921.3 317.1h0M917.4 314.7h0M913.6 312.4h0M909.8 310.1h0M906.2 307.8h0M902.6 305.6h0M899.0 303.4h0M895.5 301.2h0M892.1 299.1h0M888.7 297.0h0M885.4 295.0h0M882.2 293.0h0M879.0 291.0h0M875.8 289.1h0M872.7 287.2h0M869.7 285.3h0M866.7 283.5h0M863.8 281.7h0M860.9 279.9h0M858.1 278.1h0M855.3 276.4h0M852.5 274.7h0M849.8 273.1h0M847.1 271.4h0M844.5 269.8h0M841.9 268.2h0M839.4 266.6h0M836.9 265.1h0M834.4 263.6h0M832.0 262.1h0M829.6 260.6h0M827.2 259.1h0M824.9 257.7h0M822.6 256.3h0M820.3 254.9h0M818.1 253.5h0M815.9 252.2h0M952.0 332.9h0M947.5 330.2h0M943.2 327.5h0M938.9 324.9h0M934.7 322.4h0M930.6 319.9h0M926.6 317.4h0M922.6 315.0h0M918.8 312.6h0M915.0 310.3h0M911.2 308.1h0M907.6 305.8h0M904.0 303.6h0M900.4 301.5h0M896.9 299.4h0M893.5 297.3h0M890.2 295.2h0M886.9 293.2h0M883.6 291.3h0M880.5 289.3h0M877.3 287.4h0M874.3 285.5h0M871.2 283.7h0M868.3 281.9h0M865.3 280.1h0M862.4 278.3h0M859.6 276.6h0M856.8 274.9h0M854.1 273.3h0M851.4 271.6h0M848.7 270.0h0M846.1 268.4h0M843.5 266.8h0M841.0 265.3h0M838.5 263.7h0M836.0 262.2h0M833.6 260.8h0M831.2 259.3h0M828.8 257.9h0M826.5 256.5h0M824.2 255.1h0M822.0 253.7h0M819.7 252.3h0M817.5 251.0h0M953.1 330.5h0M948.7 327.8h0M944.3 325.2h0M940.1 322.7h0M935.9 320.2h0M931.9 317.7h0M927.9 315.3h0M923.9 312.9h0M920.1 310.6h0M916.3 308.3h0M912.6 306.1h0M908.9 303.9h0M905.3 301.7h0M901.8 299.6h0M898.4 297.5h0M895.0 295.5h0M891.6 293.5h0M888.3 291.5h0M885.1 289.6h0M881.9 287.6h0M878.8 285.8h0M875.8 283.9h0M872.7 282.1h0M869.8 280.3h0M866.9 278.6h0M864.0 276.8h0M861.2 275.1h0M858.4 273.4h0M855.6 271.8h0M852.9 270.2h0M850.3 268.6h0M847.7 267.0h0M845.1 265.5h0M842.6 263.9h0M840.1 262.4h0M837.6 260.9h0M835.2 259.5h0M832.8 258.0h0M830.4 256.6h0M828.1 255.2h0M825.8 253.8h0M823.6 252.5h0M821.3 251.2h0M819.2 249.8h0" stroke="#8a8a8a" stroke-opacity="0.44" stroke-width="1.0" stroke-linecap="round" fill="none"/>
<polygon points="550.9,230.6 778.3,158.0 890.3,197.5 595.6,408.6" fill="#2b2b2b" stroke="#2b2b2b" stroke-width="0.8" stroke-linejoin="round"/>
<polygon points="817.8,177.7 817.5,175.2 820.6,173.9 831.2,177.7 827.6,179.4" fill="#0b0b0b" stroke="#0b0b0b" stroke-width="0.8" stroke-linejoin="round"/>
<polygon points="775.6,141.7 779.7,140.6 779.7,158.5 775.7,159.7" fill="#818181" stroke="#818181" stroke-width="0.8" stroke-linejoin="round"/>
<polygon points="778.3,141.0 782.6,142.2 782.5,160.4 778.3,158.9" fill="#616161" stroke="#616161" stroke-width="0.8" stroke-linejoin="round"/>
<polygon points="771.3,142.8 775.6,141.7 775.7,159.7 771.6,161.1" fill="#818181" stroke="#818181" stroke-width="0.8" stroke-linejoin="round"/>
<polygon points="782.6,142.2 787.1,143.5 786.7,161.9 782.5,160.4" fill="#616161" stroke="#616161" stroke-width="0.8" stroke-linejoin="round"/>
<polygon points="766.9,144.0 771.3,142.8 771.6,161.1 767.4,162.4" fill="#818181" stroke="#818181" stroke-width="0.8" stroke-linejoin="round"/>
<polygon points="787.1,143.5 791.7,144.8 791.1,163.4 786.7,161.9" fill="#616161" stroke="#616161" stroke-width="0.8" stroke-linejoin="round"/>
<polygon points="769.3,152.3 771.4,151.7 773.4,152.4 771.4,153.0" fill="#f7f7f7" stroke="#f7f7f7" stroke-width="0.8" stroke-linejoin="round"/>
<polygon points="769.3,152.3 771.4,153.0 771.4,156.1 769.4,155.4" fill="#bdbdbd" stroke="#bdbdbd" stroke-width="0.8" stroke-linejoin="round"/>
<polygon points="771.4,153.0 773.4,152.4 773.5,155.5 771.4,156.1" fill="#d4d4d4" stroke="#d4d4d4" stroke-width="0.8" stroke-linejoin="round"/>
<polygon points="762.4,145.2 766.9,144.0 767.4,162.4 763.1,163.8" fill="#818181" stroke="#818181" stroke-width="0.8" stroke-linejoin="round"/>
<polygon points="791.7,144.8 796.4,146.2 795.6,165.0 791.1,163.4" fill="#616161" stroke="#616161" stroke-width="0.8" stroke-linejoin="round"/>
<polygon points="765.0,148.3 766.6,147.9 766.7,153.5 765.2,154.0" fill="#5893b1" stroke="#5893b1" stroke-width="0.8" stroke-linejoin="round"/>
<polygon points="757.7,146.4 762.4,145.2 763.1,163.8 758.6,165.2" fill="#818181" stroke="#818181" stroke-width="0.8" stroke-linejoin="round"/>
<polygon points="763.5,148.8 765.0,148.3 765.2,154.0 763.7,154.4" fill="#5893b1" stroke="#5893b1" stroke-width="0.8" stroke-linejoin="round"/>
<polygon points="796.4,146.2 801.3,147.6 800.3,166.7 795.6,165.0" fill="#616161" stroke="#616161" stroke-width="0.8" stroke-linejoin="round"/>
<polygon points="761.9,149.2 763.5,148.8 763.7,154.4 762.1,154.9" fill="#5893b1" stroke="#5893b1" stroke-width="0.8" stroke-linejoin="round"/>
<polygon points="792.6,155.6 794.6,154.9 796.9,155.7 794.9,156.3" fill="#f7f7f7" stroke="#f7f7f7" stroke-width="0.8" stroke-linejoin="round"/>
<polygon points="794.9,156.3 796.9,155.7 796.7,158.9 794.8,159.6" fill="#d4d4d4" stroke="#d4d4d4" stroke-width="0.8" stroke-linejoin="round"/>
<polygon points="792.6,155.6 794.9,156.3 794.8,159.6 792.5,158.8" fill="#bdbdbd" stroke="#bdbdbd" stroke-width="0.8" stroke-linejoin="round"/>
<polygon points="760.3,149.6 761.9,149.2 762.1,154.9 760.6,155.3" fill="#5893b1" stroke="#5893b1" stroke-width="0.8" stroke-linejoin="round"/>
<polygon points="752.9,147.6 757.7,146.4 758.6,165.2 754.1,166.7" fill="#818181" stroke="#818181" stroke-width="0.8" stroke-linejoin="round"/>
<polygon points="801.3,147.6 806.4,149.1 805.1,168.4 800.3,166.7" fill="#616161" stroke="#616161" stroke-width="0.8" stroke-linejoin="round"/>
<polygon points="775.3,149.5 778.8,148.5 780.3,149.0 776.8,150.0" fill="#f7f7f7" stroke="#f7f7f7" stroke-width="0.8" stroke-linejoin="round"/>
<polygon points="776.8,150.0 780.3,149.0 780.3,150.7 776.9,151.8" fill="#d4d4d4" stroke="#d4d4d4" stroke-width="0.8" stroke-linejoin="round"/>
<polygon points="798.4,149.2 802.5,148.0 801.4,167.1 797.5,168.6" fill="#818181" stroke="#818181" stroke-width="0.8" stroke-linejoin="round"/>
<polygon points="748.0,148.9 752.9,147.6 754.1,166.7 749.4,168.2" fill="#818181" stroke="#818181" stroke-width="0.8" stroke-linejoin="round"/>
<polygon points="771.8,150.5 775.3,149.5 776.8,150.0 773.3,151.0" fill="#f7f7f7" stroke="#f7f7f7" stroke-width="0.8" stroke-linejoin="round"/>
<polygon points="806.4,149.1 811.7,150.6 810.1,170.2 805.1,168.4" fill="#616161" stroke="#616161" stroke-width="0.8" stroke-linejoin="round"/>
<polygon points="773.3,151.0 776.8,150.0 776.9,151.8 773.3,152.8" fill="#d4d4d4" stroke="#d4d4d4" stroke-width="0.8" stroke-linejoin="round"/>
<polygon points="794.2,150.5 798.4,149.2 797.5,168.6 793.5,170.1" fill="#818181" stroke="#818181" stroke-width="0.8" stroke-linejoin="round"/>
<polygon points="742.9,150.3 748.0,148.9 749.4,168.2 744.5,169.8" fill="#818181" stroke="#818181" stroke-width="0.8" stroke-linejoin="round"/>
<polygon points="768.1,151.6 771.8,150.5 773.3,151.0 769.7,152.1" fill="#f7f7f7" stroke="#f7f7f7" stroke-width="0.8" stroke-linejoin="round"/>
<polygon points="811.7,150.6 817.1,152.2 815.3,172.0 810.1,170.2" fill="#616161" stroke="#616161" stroke-width="0.8" stroke-linejoin="round"/>
<polygon points="769.7,152.1 773.3,151.0 773.3,152.8 769.7,153.9" fill="#d4d4d4" stroke="#d4d4d4" stroke-width="0.8" stroke-linejoin="round"/>
<polygon points="768.1,151.6 769.7,152.1 769.7,153.9 768.2,153.4" fill="#bdbdbd" stroke="#bdbdbd" stroke-width="0.8" stroke-linejoin="round"/>
<polygon points="745.8,149.5 749.4,150.9 750.8,170.5 747.2,168.9" fill="#616161" stroke="#616161" stroke-width="0.8" stroke-linejoin="round"/>
<polygon points="789.9,151.9 794.2,150.5 793.5,170.1 789.3,171.6" fill="#818181" stroke="#818181" stroke-width="0.8" stroke-linejoin="round"/>
<polygon points="737.6,151.7 742.9,150.3 744.5,169.8 739.6,171.4" fill="#818181" stroke="#818181" stroke-width="0.8" stroke-linejoin="round"/>
<polygon points="817.1,152.2 822.7,153.8 820.6,173.9 815.3,172.0" fill="#616161" stroke="#616161" stroke-width="0.8" stroke-linejoin="round"/>
<polygon points="741.6,153.4 744.1,152.8 746.1,153.5 743.6,154.2" fill="#f7f7f7" stroke="#f7f7f7" stroke-width="0.8" stroke-linejoin="round"/>
<polygon points="741.6,153.4 743.6,154.2 743.9,157.7 741.9,156.9" fill="#bdbdbd" stroke="#bdbdbd" stroke-width="0.8" stroke-linejoin="round"/>
<polygon points="743.6,154.2 746.1,153.5 746.3,157.0 743.9,157.7" fill="#d4d4d4" stroke="#d4d4d4" stroke-width="0.8" stroke-linejoin="round"/>
<polygon points="749.4,150.9 753.2,152.2 754.4,172.1 750.8,170.5" fill="#616161" stroke="#616161" stroke-width="0.8" stroke-linejoin="round"/>
<polygon points="755.6,160.8 758.0,160.1 760.1,160.9 757.7,161.7" fill="#f7f7f7" stroke="#f7f7f7" stroke-width="0.8" stroke-linejoin="round"/>
<polygon points="732.2,153.1 737.6,151.7 739.6,171.4 734.4,173.0" fill="#818181" stroke="#818181" stroke-width="0.8" stroke-linejoin="round"/>
<polygon points="822.7,153.8 828.6,155.5 826.1,175.9 820.6,173.9" fill="#616161" stroke="#616161" stroke-width="0.8" stroke-linejoin="round"/>
<polygon points="785.4,153.3 789.9,151.9 789.3,171.6 785.1,173.3" fill="#818181" stroke="#818181" stroke-width="0.8" stroke-linejoin="round"/>
<polygon points="755.6,160.8 757.7,161.7 757.9,165.0 755.8,164.2" fill="#bdbdbd" stroke="#bdbdbd" stroke-width="0.8" stroke-linejoin="round"/>
<polygon points="757.7,161.7 760.1,160.9 760.2,164.3 757.9,165.0" fill="#d4d4d4" stroke="#d4d4d4" stroke-width="0.8" stroke-linejoin="round"/>
<polygon points="821.4,158.2 823.3,158.7 821.6,174.3 819.8,173.6" fill="#5e3d1c" stroke="#5e3d1c" stroke-width="0.8" stroke-linejoin="round"/>
<polygon points="817.3,170.0 817.7,169.8 822.9,171.6 822.5,171.8" fill="#d6d6d6" stroke="#d6d6d6" stroke-width="0.8" stroke-linejoin="round"/>
<polygon points="817.3,170.0 822.5,171.8 822.4,172.3 817.3,170.5" fill="#a2a2a2" stroke="#a2a2a2" stroke-width="0.8" stroke-linejoin="round"/>
<polygon points="753.2,152.2 757.1,153.7 758.1,173.7 754.4,172.1" fill="#616161" stroke="#616161" stroke-width="0.8" stroke-linejoin="round"/>
<polygon points="726.6,154.6 732.2,153.1 734.4,173.0 729.1,174.7" fill="#818181" stroke="#818181" stroke-width="0.8" stroke-linejoin="round"/>
<polygon points="828.6,155.5 834.7,157.3 831.9,178.0 826.1,175.9" fill="#616161" stroke="#616161" stroke-width="0.8" stroke-linejoin="round"/>
<polygon points="823.3,158.7 825.3,159.3 823.5,175.0 821.6,174.3" fill="#5e3d1c" stroke="#5e3d1c" stroke-width="0.8" stroke-linejoin="round"/>
<polygon points="825.3,159.3 827.2,159.9 825.4,175.6 823.5,175.0" fill="#5e3d1c" stroke="#5e3d1c" stroke-width="0.8" stroke-linejoin="round"/>
<polygon points="780.8,154.7 785.4,153.3 785.1,173.3 780.7,174.9" fill="#818181" stroke="#818181" stroke-width="0.8" stroke-linejoin="round"/>
<polygon points="822.5,171.8 822.9,171.6 828.2,173.5 827.8,173.7" fill="#d6d6d6" stroke="#d6d6d6" stroke-width="0.8" stroke-linejoin="round"/>
<polygon points="827.2,159.9 829.2,160.6 827.3,176.3 825.4,175.6" fill="#5e3d1c" stroke="#5e3d1c" stroke-width="0.8" stroke-linejoin="round"/>
<polygon points="822.5,171.8 827.8,173.7 827.7,174.2 822.4,172.3" fill="#a2a2a2" stroke="#a2a2a2" stroke-width="0.8" stroke-linejoin="round"/>
<polygon points="720.9,156.1 726.6,154.6 729.1,174.7 723.7,176.5" fill="#818181" stroke="#818181" stroke-width="0.8" stroke-linejoin="round"/>
<polygon points="834.7,157.3 841.0,159.1 837.8,180.1 831.9,178.0" fill="#616161" stroke="#616161" stroke-width="0.8" stroke-linejoin="round"/>
<polygon points="731.7,155.4 734.3,154.6 736.3,155.5 733.6,156.2" fill="#f7f7f7" stroke="#f7f7f7" stroke-width="0.8" stroke-linejoin="round"/>
<polygon points="829.2,160.6 831.2,161.2 829.2,177.0 827.3,176.3" fill="#5e3d1c" stroke="#5e3d1c" stroke-width="0.8" stroke-linejoin="round"/>
<polygon points="757.1,153.7 761.1,155.1 761.9,175.4 758.1,173.7" fill="#616161" stroke="#616161" stroke-width="0.8" stroke-linejoin="round"/>
<polygon points="731.7,155.4 733.6,156.2 734.0,159.8 732.1,158.9" fill="#bdbdbd" stroke="#bdbdbd" stroke-width="0.8" stroke-linejoin="round"/>
<polygon points="755.8,157.3 757.3,157.8 758.1,173.7 756.6,173.1" fill="#7a4d25" stroke="#7a4d25" stroke-width="0.8" stroke-linejoin="round"/>
<polygon points="733.6,156.2 736.3,155.5 736.7,159.0 734.0,159.8" fill="#d4d4d4" stroke="#d4d4d4" stroke-width="0.8" stroke-linejoin="round"/>
<polygon points="831.2,161.2 833.3,161.8 831.2,177.7 829.2,177.0" fill="#5e3d1c" stroke="#5e3d1c" stroke-width="0.8" stroke-linejoin="round"/>
<polygon points="827.8,173.7 828.2,173.5 833.7,175.4 833.3,175.6" fill="#d6d6d6" stroke="#d6d6d6" stroke-width="0.8" stroke-linejoin="round"/>
<polygon points="827.8,173.7 833.3,175.6 833.2,176.1 827.7,174.2" fill="#a2a2a2" stroke="#a2a2a2" stroke-width="0.8" stroke-linejoin="round"/>
<polygon points="776.1,156.2 780.8,154.7 780.7,174.9 776.2,176.6" fill="#818181" stroke="#818181" stroke-width="0.8" stroke-linejoin="round"/>
<polygon points="757.3,157.8 758.8,158.4 759.6,174.4 758.1,173.7" fill="#7a4d25" stroke="#7a4d25" stroke-width="0.8" stroke-linejoin="round"/>
<polygon points="841.0,159.1 847.5,161.0 844.0,182.3 837.8,180.1" fill="#616161" stroke="#616161" stroke-width="0.8" stroke-linejoin="round"/>
<polygon points="714.9,157.6 720.9,156.1 723.7,176.5 718.1,178.3" fill="#818181" stroke="#818181" stroke-width="0.8" stroke-linejoin="round"/>
<polygon points="761.1,155.1 765.2,156.6 765.9,177.2 761.9,175.4" fill="#616161" stroke="#616161" stroke-width="0.8" stroke-linejoin="round"/>
<polygon points="758.8,158.4 760.4,159.0 761.1,175.0 759.6,174.4" fill="#7a4d25" stroke="#7a4d25" stroke-width="0.8" stroke-linejoin="round"/>
<polygon points="833.3,175.6 833.7,175.4 839.4,177.4 839.0,177.6" fill="#d6d6d6" stroke="#d6d6d6" stroke-width="0.8" stroke-linejoin="round"/>
<polygon points="721.0,160.5 723.0,159.9 723.9,166.1 721.8,166.7" fill="#5893b1" stroke="#5893b1" stroke-width="0.8" stroke-linejoin="round"/>
<polygon points="833.3,175.6 839.0,177.6 838.9,178.1 833.2,176.1" fill="#a2a2a2" stroke="#a2a2a2" stroke-width="0.8" stroke-linejoin="round"/>
<polygon points="847.5,161.0 854.4,163.0 850.4,184.5 844.0,182.3" fill="#616161" stroke="#616161" stroke-width="0.8" stroke-linejoin="round"/>
<polygon points="718.9,161.0 721.0,160.5 721.8,166.7 719.8,167.3" fill="#5893b1" stroke="#5893b1" stroke-width="0.8" stroke-linejoin="round"/>
<polygon points="708.8,159.3 714.9,157.6 718.1,178.3 712.3,180.2" fill="#818181" stroke="#818181" stroke-width="0.8" stroke-linejoin="round"/>
<polygon points="791.6,158.9 793.2,158.4 797.6,159.9 796.0,160.4" fill="#f7f7f7" stroke="#f7f7f7" stroke-width="0.8" stroke-linejoin="round"/>
<polygon points="771.2,157.7 776.1,156.2 776.2,176.6 771.6,178.4" fill="#818181" stroke="#818181" stroke-width="0.8" stroke-linejoin="round"/>
<polygon points="716.8,161.6 718.9,161.0 719.8,167.3 717.7,167.9" fill="#5893b1" stroke="#5893b1" stroke-width="0.8" stroke-linejoin="round"/>
<polygon points="791.6,158.9 796.0,160.4 795.9,162.4 791.5,160.9" fill="#bdbdbd" stroke="#bdbdbd" stroke-width="0.8" stroke-linejoin="round"/>
<polygon points="839.0,177.6 839.4,177.4 845.3,179.4 844.9,179.6" fill="#d6d6d6" stroke="#d6d6d6" stroke-width="0.8" stroke-linejoin="round"/>
<polygon points="769.6,157.1 771.2,157.7 771.6,178.4 770.0,177.7" fill="#616161" stroke="#616161" stroke-width="0.8" stroke-linejoin="round"/>
<polygon points="839.0,177.6 844.9,179.6 844.8,180.1 838.9,178.1" fill="#a2a2a2" stroke="#a2a2a2" stroke-width="0.8" stroke-linejoin="round"/>
<polygon points="765.2,156.6 769.5,158.2 769.9,179.0 765.9,177.2" fill="#616161" stroke="#616161" stroke-width="0.8" stroke-linejoin="round"/>
<polygon points="714.7,162.2 716.8,161.6 717.7,167.9 715.7,168.5" fill="#5893b1" stroke="#5893b1" stroke-width="0.8" stroke-linejoin="round"/>
<polygon points="854.4,163.0 861.5,165.0 857.0,186.9 850.4,184.5" fill="#616161" stroke="#616161" stroke-width="0.8" stroke-linejoin="round"/>
<polygon points="702.4,160.9 708.8,159.3 712.3,180.2 706.3,182.1" fill="#818181" stroke="#818181" stroke-width="0.8" stroke-linejoin="round"/>
<polygon points="769.5,158.2 771.2,157.7 771.6,178.4 769.9,179.0" fill="#818181" stroke="#818181" stroke-width="0.8" stroke-linejoin="round"/>
<polygon points="796.0,160.4 797.6,159.9 802.1,161.4 800.5,162.0" fill="#f7f7f7" stroke="#f7f7f7" stroke-width="0.8" stroke-linejoin="round"/>
<polygon points="844.9,179.6 845.3,179.4 851.5,181.5 851.0,181.7" fill="#d6d6d6" stroke="#d6d6d6" stroke-width="0.8" stroke-linejoin="round"/>
<polygon points="796.0,160.4 800.5,162.0 800.4,163.9 795.9,162.4" fill="#bdbdbd" stroke="#bdbdbd" stroke-width="0.8" stroke-linejoin="round"/>
<polygon points="844.9,179.6 851.0,181.7 850.9,182.3 844.8,180.1" fill="#a2a2a2" stroke="#a2a2a2" stroke-width="0.8" stroke-linejoin="round"/>
<polygon points="861.5,165.0 868.9,167.2 863.9,189.4 857.0,186.9" fill="#616161" stroke="#616161" stroke-width="0.8" stroke-linejoin="round"/>
<polygon points="695.8,162.7 702.4,160.9 706.3,182.1 700.1,184.1" fill="#818181" stroke="#818181" stroke-width="0.8" stroke-linejoin="round"/>
<polygon points="800.5,162.0 802.1,161.4 806.8,163.0 805.2,163.6" fill="#f7f7f7" stroke="#f7f7f7" stroke-width="0.8" stroke-linejoin="round"/>
<polygon points="851.0,181.7 851.5,181.5 857.8,183.7 857.4,183.9" fill="#d6d6d6" stroke="#d6d6d6" stroke-width="0.8" stroke-linejoin="round"/>
<polygon points="851.0,181.7 857.4,183.9 857.3,184.5 850.9,182.3" fill="#a2a2a2" stroke="#a2a2a2" stroke-width="0.8" stroke-linejoin="round"/>
<polygon points="868.9,167.2 876.6,169.4 871.1,191.9 863.9,189.4" fill="#616161" stroke="#616161" stroke-width="0.8" stroke-linejoin="round"/>
<polygon points="800.5,162.0 805.2,163.6 805.0,165.5 800.4,163.9" fill="#bdbdbd" stroke="#bdbdbd" stroke-width="0.8" stroke-linejoin="round"/>
<polygon points="688.9,164.5 695.8,162.7 700.1,184.1 693.7,186.2" fill="#818181" stroke="#818181" stroke-width="0.8" stroke-linejoin="round"/>
<polygon points="805.2,163.6 806.8,163.0 806.6,165.0 805.0,165.5" fill="#d4d4d4" stroke="#d4d4d4" stroke-width="0.8" stroke-linejoin="round"/>
<polygon points="728.9,162.1 730.9,161.6 734.3,163.1 732.3,163.7" fill="#f7f7f7" stroke="#f7f7f7" stroke-width="0.8" stroke-linejoin="round"/>
<polygon points="728.9,162.1 732.3,163.7 732.5,165.6 729.2,164.1" fill="#bdbdbd" stroke="#bdbdbd" stroke-width="0.8" stroke-linejoin="round"/>
<polygon points="857.4,183.9 857.8,183.7 864.4,186.0 864.0,186.2" fill="#d6d6d6" stroke="#d6d6d6" stroke-width="0.8" stroke-linejoin="round"/>
<polygon points="857.4,183.9 864.0,186.2 863.9,186.8 857.3,184.5" fill="#a2a2a2" stroke="#a2a2a2" stroke-width="0.8" stroke-linejoin="round"/>
<polygon points="876.6,169.4 884.7,171.8 878.6,194.6 871.1,191.9" fill="#616161" stroke="#616161" stroke-width="0.8" stroke-linejoin="round"/>
<polygon points="805.7,163.7 807.3,163.1 811.9,164.7 810.4,165.3" fill="#f7f7f7" stroke="#f7f7f7" stroke-width="0.8" stroke-linejoin="round"/>
<polygon points="681.9,166.3 688.9,164.5 693.7,186.2 687.1,188.3" fill="#818181" stroke="#818181" stroke-width="0.8" stroke-linejoin="round"/>
<polygon points="805.7,163.7 810.4,165.3 810.2,167.3 805.6,165.7" fill="#bdbdbd" stroke="#bdbdbd" stroke-width="0.8" stroke-linejoin="round"/>
<polygon points="864.0,186.2 864.4,186.0 871.2,188.4 870.8,188.6" fill="#d6d6d6" stroke="#d6d6d6" stroke-width="0.8" stroke-linejoin="round"/>
<polygon points="893.1,174.2 894.3,173.5 887.6,196.5 886.4,197.4" fill="#818181" stroke="#818181" stroke-width="0.8" stroke-linejoin="round"/>
<polygon points="884.7,171.8 893.1,174.2 886.4,197.4 878.6,194.6" fill="#616161" stroke="#616161" stroke-width="0.8" stroke-linejoin="round"/>
<polygon points="864.0,186.2 870.8,188.6 870.7,189.1 863.9,186.8" fill="#a2a2a2" stroke="#a2a2a2" stroke-width="0.8" stroke-linejoin="round"/>
<polygon points="732.3,163.7 734.3,163.1 737.7,164.6 735.7,165.2" fill="#f7f7f7" stroke="#f7f7f7" stroke-width="0.8" stroke-linejoin="round"/>
<polygon points="810.4,165.3 811.9,164.7 816.8,166.3 815.2,166.9" fill="#f7f7f7" stroke="#f7f7f7" stroke-width="0.8" stroke-linejoin="round"/>
<polygon points="732.3,163.7 735.7,165.2 735.9,167.2 732.5,165.6" fill="#bdbdbd" stroke="#bdbdbd" stroke-width="0.8" stroke-linejoin="round"/>
<polygon points="674.5,168.3 681.9,166.3 687.1,188.3 680.2,190.5" fill="#818181" stroke="#818181" stroke-width="0.8" stroke-linejoin="round"/>
<polygon points="870.8,188.6 871.2,188.4 878.3,190.8 877.9,191.1" fill="#d6d6d6" stroke="#d6d6d6" stroke-width="0.8" stroke-linejoin="round"/>
<polygon points="810.4,165.3 815.2,166.9 815.0,169.0 810.2,167.3" fill="#bdbdbd" stroke="#bdbdbd" stroke-width="0.8" stroke-linejoin="round"/>
<polygon points="870.8,188.6 877.9,191.1 877.8,191.6 870.7,189.1" fill="#a2a2a2" stroke="#a2a2a2" stroke-width="0.8" stroke-linejoin="round"/>
<polygon points="893.6,176.5 897.2,174.3 890.3,197.5 886.7,200.0" fill="#8a8a8a" stroke="#8a8a8a" stroke-width="0.8" stroke-linejoin="round"/>
<polygon points="681.3,166.5 684.6,168.5 689.8,190.7 686.6,188.5" fill="#616161" stroke="#616161" stroke-width="0.8" stroke-linejoin="round"/>
<polygon points="877.9,191.1 878.3,190.8 878.2,191.4 877.8,191.6" fill="#b4b4b4" stroke="#b4b4b4" stroke-width="0.8" stroke-linejoin="round"/>
<polygon points="666.9,170.3 674.5,168.3 680.2,190.5 673.2,192.8" fill="#818181" stroke="#818181" stroke-width="0.8" stroke-linejoin="round"/>
<polygon points="815.2,166.9 816.8,166.3 821.7,168.0 820.2,168.6" fill="#f7f7f7" stroke="#f7f7f7" stroke-width="0.8" stroke-linejoin="round"/>
<polygon points="735.7,165.2 737.7,164.6 741.3,166.2 739.3,166.8" fill="#f7f7f7" stroke="#f7f7f7" stroke-width="0.8" stroke-linejoin="round"/>
<polygon points="815.2,166.9 820.2,168.6 820.0,170.7 815.0,169.0" fill="#bdbdbd" stroke="#bdbdbd" stroke-width="0.8" stroke-linejoin="round"/>
<polygon points="735.7,165.2 739.3,166.8 739.5,168.8 735.9,167.2" fill="#bdbdbd" stroke="#bdbdbd" stroke-width="0.8" stroke-linejoin="round"/>
<polygon points="659.0,172.3 666.9,170.3 673.2,192.8 665.8,195.2" fill="#818181" stroke="#818181" stroke-width="0.8" stroke-linejoin="round"/>
<polygon points="677.2,187.3 680.6,186.2 682.3,187.5 678.8,188.5" fill="#f7f7f7" stroke="#f7f7f7" stroke-width="0.8" stroke-linejoin="round"/>
<polygon points="820.2,168.6 821.7,168.0 821.5,170.1 820.0,170.7" fill="#d4d4d4" stroke="#d4d4d4" stroke-width="0.8" stroke-linejoin="round"/>
<polygon points="677.2,187.3 678.8,188.5 679.8,192.2 678.1,191.0" fill="#bdbdbd" stroke="#bdbdbd" stroke-width="0.8" stroke-linejoin="round"/>
<polygon points="739.3,166.8 741.3,166.2 741.5,168.2 739.5,168.8" fill="#d4d4d4" stroke="#d4d4d4" stroke-width="0.8" stroke-linejoin="round"/>
<polygon points="678.8,188.5 682.3,187.5 683.2,191.1 679.8,192.2" fill="#d4d4d4" stroke="#d4d4d4" stroke-width="0.8" stroke-linejoin="round"/>
<polygon points="820.7,168.8 822.3,168.2 827.4,169.9 825.8,170.6" fill="#f7f7f7" stroke="#f7f7f7" stroke-width="0.8" stroke-linejoin="round"/>
<polygon points="650.8,174.5 659.0,172.3 665.8,195.2 658.2,197.6" fill="#818181" stroke="#818181" stroke-width="0.8" stroke-linejoin="round"/>
<polygon points="820.7,168.8 825.8,170.6 825.6,172.6 820.5,170.9" fill="#bdbdbd" stroke="#bdbdbd" stroke-width="0.8" stroke-linejoin="round"/>
<polygon points="684.6,168.5 688.1,170.5 693.1,193.1 689.8,190.7" fill="#616161" stroke="#616161" stroke-width="0.8" stroke-linejoin="round"/>
<polygon points="664.2,183.0 667.9,181.9 669.5,183.2 665.8,184.3" fill="#f7f7f7" stroke="#f7f7f7" stroke-width="0.8" stroke-linejoin="round"/>
<polygon points="889.8,178.9 893.6,176.5 886.7,200.0 883.0,202.7" fill="#8a8a8a" stroke="#8a8a8a" stroke-width="0.8" stroke-linejoin="round"/>
<polygon points="642.2,176.7 650.8,174.5 658.2,197.6 650.3,200.2" fill="#818181" stroke="#818181" stroke-width="0.8" stroke-linejoin="round"/>
<polygon points="664.2,183.0 665.8,184.3 666.9,188.1 665.3,186.9" fill="#bdbdbd" stroke="#bdbdbd" stroke-width="0.8" stroke-linejoin="round"/>
<polygon points="739.7,167.0 741.7,166.4 745.4,168.0 743.4,168.7" fill="#f7f7f7" stroke="#f7f7f7" stroke-width="0.8" stroke-linejoin="round"/>
<polygon points="739.7,167.0 743.4,168.7 743.6,170.7 739.9,169.0" fill="#bdbdbd" stroke="#bdbdbd" stroke-width="0.8" stroke-linejoin="round"/>
<polygon points="825.8,170.6 827.4,169.9 832.6,171.6 831.0,172.3" fill="#f7f7f7" stroke="#f7f7f7" stroke-width="0.8" stroke-linejoin="round"/>
<polygon points="665.8,184.3 669.5,183.2 670.6,187.0 666.9,188.1" fill="#d4d4d4" stroke="#d4d4d4" stroke-width="0.8" stroke-linejoin="round"/>
<polygon points="877.4,187.7 879.2,186.5 883.2,187.8 881.3,189.0" fill="#f7f7f7" stroke="#f7f7f7" stroke-width="0.8" stroke-linejoin="round"/>
<polygon points="633.4,179.1 642.2,176.7 650.3,200.2 642.1,202.8" fill="#818181" stroke="#818181" stroke-width="0.8" stroke-linejoin="round"/>
<polygon points="825.8,170.6 831.0,172.3 830.8,174.5 825.6,172.6" fill="#bdbdbd" stroke="#bdbdbd" stroke-width="0.8" stroke-linejoin="round"/>
<polygon points="881.3,189.0 883.2,187.8 882.1,191.8 880.3,193.0" fill="#d4d4d4" stroke="#d4d4d4" stroke-width="0.8" stroke-linejoin="round"/>
<polygon points="651.6,186.7 655.5,185.6 657.0,186.8 653.1,188.0" fill="#f7f7f7" stroke="#f7f7f7" stroke-width="0.8" stroke-linejoin="round"/>
<polygon points="624.1,181.5 633.4,179.1 642.1,202.8 633.6,205.5" fill="#818181" stroke="#818181" stroke-width="0.8" stroke-linejoin="round"/>
<polygon points="651.6,186.7 653.1,188.0 654.4,192.0 652.8,190.6" fill="#bdbdbd" stroke="#bdbdbd" stroke-width="0.8" stroke-linejoin="round"/>
<polygon points="877.4,187.7 881.3,189.0 880.3,193.0 876.3,191.7" fill="#bdbdbd" stroke="#bdbdbd" stroke-width="0.8" stroke-linejoin="round"/>
<polygon points="831.0,172.3 832.6,171.6 838.0,173.5 836.4,174.2" fill="#f7f7f7" stroke="#f7f7f7" stroke-width="0.8" stroke-linejoin="round"/>
<polygon points="614.4,184.0 624.1,181.5 633.6,205.5 624.7,208.4" fill="#818181" stroke="#818181" stroke-width="0.8" stroke-linejoin="round"/>
<polygon points="694.9,180.8 698.3,179.8 700.2,180.9 696.8,182.0" fill="#f7f7f7" stroke="#f7f7f7" stroke-width="0.8" stroke-linejoin="round"/>
<polygon points="653.1,188.0 657.0,186.8 658.3,190.8 654.4,192.0" fill="#d4d4d4" stroke="#d4d4d4" stroke-width="0.8" stroke-linejoin="round"/>
<polygon points="743.4,168.7 745.4,168.0 749.3,169.7 747.3,170.4" fill="#f7f7f7" stroke="#f7f7f7" stroke-width="0.8" stroke-linejoin="round"/>
<polygon points="533.4,205.3 546.7,201.9 563.2,228.2 551.2,232.1" fill="#818181" stroke="#818181" stroke-width="0.8" stroke-linejoin="round"/>
<polygon points="604.4,186.7 614.4,184.0 624.7,208.4 615.5,211.4" fill="#818181" stroke="#818181" stroke-width="0.8" stroke-linejoin="round"/>
<polygon points="831.0,172.3 836.4,174.2 836.1,176.3 830.8,174.5" fill="#bdbdbd" stroke="#bdbdbd" stroke-width="0.8" stroke-linejoin="round"/>
<polygon points="694.9,180.8 696.8,182.0 697.6,185.8 695.8,184.6" fill="#bdbdbd" stroke="#bdbdbd" stroke-width="0.8" stroke-linejoin="round"/>
<polygon points="641.2,198.5 645.2,197.3 646.7,198.7 642.6,200.0" fill="#f7f7f7" stroke="#f7f7f7" stroke-width="0.8" stroke-linejoin="round"/>
<polygon points="836.4,174.2 838.0,173.5 837.7,175.6 836.1,176.3" fill="#d4d4d4" stroke="#d4d4d4" stroke-width="0.8" stroke-linejoin="round"/>
<polygon points="688.1,170.5 691.6,172.7 696.6,195.5 693.1,193.1" fill="#616161" stroke="#616161" stroke-width="0.8" stroke-linejoin="round"/>
<polygon points="743.4,168.7 747.3,170.4 747.4,172.5 743.6,170.7" fill="#bdbdbd" stroke="#bdbdbd" stroke-width="0.8" stroke-linejoin="round"/>
<polygon points="546.7,201.9 559.3,198.5 574.5,224.6 563.2,228.2" fill="#818181" stroke="#818181" stroke-width="0.8" stroke-linejoin="round"/>
<polygon points="593.9,189.5 604.4,186.7 615.5,211.4 605.9,214.5" fill="#818181" stroke="#818181" stroke-width="0.8" stroke-linejoin="round"/>
<polygon points="641.2,198.5 642.6,200.0 644.0,203.9 642.6,202.4" fill="#bdbdbd" stroke="#bdbdbd" stroke-width="0.8" stroke-linejoin="round"/>
<polygon points="559.3,198.5 571.4,195.4 585.4,221.1 574.5,224.6" fill="#818181" stroke="#818181" stroke-width="0.8" stroke-linejoin="round"/>
<polygon points="582.9,192.3 593.9,189.5 605.9,214.5 595.9,217.7" fill="#818181" stroke="#818181" stroke-width="0.8" stroke-linejoin="round"/>
<polygon points="696.8,182.0 700.2,180.9 701.0,184.7 697.6,185.8" fill="#d4d4d4" stroke="#d4d4d4" stroke-width="0.8" stroke-linejoin="round"/>
<polygon points="571.4,195.4 582.9,192.3 595.9,217.7 585.4,221.1" fill="#818181" stroke="#818181" stroke-width="0.8" stroke-linejoin="round"/>
<polygon points="885.8,181.3 889.8,178.9 883.0,202.7 879.2,205.4" fill="#8a8a8a" stroke="#8a8a8a" stroke-width="0.8" stroke-linejoin="round"/>
<polygon points="642.6,200.0 646.7,198.7 648.0,202.6 644.0,203.9" fill="#d4d4d4" stroke="#d4d4d4" stroke-width="0.8" stroke-linejoin="round"/>
<polygon points="837.1,174.4 838.6,173.7 844.2,175.5 842.7,176.3" fill="#f7f7f7" stroke="#f7f7f7" stroke-width="0.8" stroke-linejoin="round"/>
<polygon points="619.2,182.8 621.7,185.4 631.6,210.0 629.1,207.0" fill="#616161" stroke="#616161" stroke-width="0.8" stroke-linejoin="round"/>
<polygon points="837.1,174.4 842.7,176.3 842.3,178.5 836.8,176.5" fill="#bdbdbd" stroke="#bdbdbd" stroke-width="0.8" stroke-linejoin="round"/>
<polygon points="537.9,204.2 538.8,208.3 556.6,235.3 555.3,230.8" fill="#8a8a8a" stroke="#8a8a8a" stroke-width="0.8" stroke-linejoin="round"/>
<polygon points="562.4,212.5 573.9,209.1 574.9,211.4 563.2,214.8" fill="#f7f7f7" stroke="#f7f7f7" stroke-width="0.8" stroke-linejoin="round"/>
<polygon points="747.3,170.4 749.3,169.7 753.3,171.5 751.2,172.2" fill="#f7f7f7" stroke="#f7f7f7" stroke-width="0.8" stroke-linejoin="round"/>
<polygon points="573.9,209.1 584.9,205.9 586.1,208.1 574.9,211.4" fill="#f7f7f7" stroke="#f7f7f7" stroke-width="0.8" stroke-linejoin="round"/>
<polygon points="842.7,176.3 844.2,175.5 850.0,177.5 848.5,178.3" fill="#f7f7f7" stroke="#f7f7f7" stroke-width="0.8" stroke-linejoin="round"/>
<polygon points="605.8,192.1 609.4,191.2 612.7,198.7 609.2,199.7" fill="#5893b1" stroke="#5893b1" stroke-width="0.8" stroke-linejoin="round"/>
<polygon points="602.2,193.1 605.8,192.1 609.2,199.7 605.7,200.7" fill="#5893b1" stroke="#5893b1" stroke-width="0.8" stroke-linejoin="round"/>
<polygon points="747.3,170.4 751.2,172.2 751.4,174.3 747.4,172.5" fill="#bdbdbd" stroke="#bdbdbd" stroke-width="0.8" stroke-linejoin="round"/>
<polygon points="598.5,194.1 602.2,193.1 605.7,200.7 602.1,201.8" fill="#5893b1" stroke="#5893b1" stroke-width="0.8" stroke-linejoin="round"/>
<polygon points="594.8,195.2 598.5,194.1 602.1,201.8 598.5,202.8" fill="#5893b1" stroke="#5893b1" stroke-width="0.8" stroke-linejoin="round"/>
<polygon points="591.0,196.2 594.8,195.2 598.5,202.8 594.8,203.9" fill="#5893b1" stroke="#5893b1" stroke-width="0.8" stroke-linejoin="round"/>
<polygon points="587.2,197.3 591.0,196.2 594.8,203.9 591.1,205.0" fill="#5893b1" stroke="#5893b1" stroke-width="0.8" stroke-linejoin="round"/>
<polygon points="583.3,198.3 587.2,197.3 591.1,205.0 587.3,206.1" fill="#5893b1" stroke="#5893b1" stroke-width="0.8" stroke-linejoin="round"/>
<polygon points="842.7,176.3 848.5,178.3 848.1,180.5 842.3,178.5" fill="#bdbdbd" stroke="#bdbdbd" stroke-width="0.8" stroke-linejoin="round"/>
<polygon points="563.2,214.8 574.9,211.4 577.5,216.0 566.0,219.6" fill="#d4d4d4" stroke="#d4d4d4" stroke-width="0.8" stroke-linejoin="round"/>
<polygon points="751.2,172.2 753.3,171.5 753.4,173.6 751.4,174.3" fill="#d4d4d4" stroke="#d4d4d4" stroke-width="0.8" stroke-linejoin="round"/>
<polygon points="691.6,172.7 695.3,174.9 700.2,198.1 696.6,195.5" fill="#616161" stroke="#616161" stroke-width="0.8" stroke-linejoin="round"/>
<polygon points="574.9,211.4 586.1,208.1 588.5,212.7 577.5,216.0" fill="#d4d4d4" stroke="#d4d4d4" stroke-width="0.8" stroke-linejoin="round"/>
<polygon points="870.2,180.3 872.3,179.2 876.4,180.5 874.3,181.7" fill="#f7f7f7" stroke="#f7f7f7" stroke-width="0.8" stroke-linejoin="round"/>
<polygon points="874.3,181.7 876.4,180.5 875.3,184.7 873.3,186.0" fill="#d4d4d4" stroke="#d4d4d4" stroke-width="0.8" stroke-linejoin="round"/>
<polygon points="848.5,178.3 850.0,177.5 856.0,179.5 854.5,180.3" fill="#f7f7f7" stroke="#f7f7f7" stroke-width="0.8" stroke-linejoin="round"/>
<polygon points="870.2,180.3 874.3,181.7 873.3,186.0 869.2,184.6" fill="#bdbdbd" stroke="#bdbdbd" stroke-width="0.8" stroke-linejoin="round"/>
<polygon points="848.5,178.3 854.5,180.3 854.1,182.5 848.1,180.5" fill="#bdbdbd" stroke="#bdbdbd" stroke-width="0.8" stroke-linejoin="round"/>
<polygon points="854.5,180.3 856.0,179.5 855.6,181.7 854.1,182.5" fill="#d4d4d4" stroke="#d4d4d4" stroke-width="0.8" stroke-linejoin="round"/>
<polygon points="881.7,183.9 885.8,181.3 879.2,205.4 875.2,208.3" fill="#8a8a8a" stroke="#8a8a8a" stroke-width="0.8" stroke-linejoin="round"/>
<polygon points="621.7,185.4 624.3,188.2 634.2,213.1 631.6,210.0" fill="#616161" stroke="#616161" stroke-width="0.8" stroke-linejoin="round"/>
<polygon points="751.7,172.4 753.7,171.7 758.0,173.6 756.0,174.3" fill="#f7f7f7" stroke="#f7f7f7" stroke-width="0.8" stroke-linejoin="round"/>
<polygon points="751.7,172.4 756.0,174.3 756.1,176.5 751.8,174.5" fill="#bdbdbd" stroke="#bdbdbd" stroke-width="0.8" stroke-linejoin="round"/>
<polygon points="664.2,191.4 670.7,189.3 671.9,190.3 665.4,192.3" fill="#f7f7f7" stroke="#f7f7f7" stroke-width="0.8" stroke-linejoin="round"/>
<polygon points="538.8,208.3 539.7,212.6 557.9,240.1 556.6,235.3" fill="#8a8a8a" stroke="#8a8a8a" stroke-width="0.8" stroke-linejoin="round"/>
<polygon points="665.4,192.3 671.9,190.3 672.7,193.1 666.2,195.2" fill="#d4d4d4" stroke="#d4d4d4" stroke-width="0.8" stroke-linejoin="round"/>
<polygon points="657.5,193.5 664.2,191.4 665.4,192.3 658.6,194.5" fill="#f7f7f7" stroke="#f7f7f7" stroke-width="0.8" stroke-linejoin="round"/>
<polygon points="695.3,174.9 699.2,177.2 703.9,200.7 700.2,198.1" fill="#616161" stroke="#616161" stroke-width="0.8" stroke-linejoin="round"/>
<polygon points="621.3,200.3 626.9,198.6 629.8,201.9 624.0,203.7" fill="#f7f7f7" stroke="#f7f7f7" stroke-width="0.8" stroke-linejoin="round"/>
<polygon points="621.3,200.3 624.0,203.7 625.9,208.2 623.1,204.7" fill="#bdbdbd" stroke="#bdbdbd" stroke-width="0.8" stroke-linejoin="round"/>
<polygon points="658.6,194.5 665.4,192.3 666.2,195.2 659.5,197.4" fill="#d4d4d4" stroke="#d4d4d4" stroke-width="0.8" stroke-linejoin="round"/>
<polygon points="650.5,195.6 657.5,193.5 658.6,194.5 651.6,196.7" fill="#f7f7f7" stroke="#f7f7f7" stroke-width="0.8" stroke-linejoin="round"/>
<polygon points="756.0,174.3 758.0,173.6 762.5,175.6 760.4,176.3" fill="#f7f7f7" stroke="#f7f7f7" stroke-width="0.8" stroke-linejoin="round"/>
<polygon points="650.5,195.6 651.6,196.7 652.6,199.6 651.5,198.5" fill="#bdbdbd" stroke="#bdbdbd" stroke-width="0.8" stroke-linejoin="round"/>
<polygon points="756.0,174.3 760.4,176.3 760.5,178.5 756.1,176.5" fill="#bdbdbd" stroke="#bdbdbd" stroke-width="0.8" stroke-linejoin="round"/>
<polygon points="651.6,196.7 658.6,194.5 659.5,197.4 652.6,199.6" fill="#d4d4d4" stroke="#d4d4d4" stroke-width="0.8" stroke-linejoin="round"/>
<polygon points="877.4,186.5 881.7,183.9 875.2,208.3 871.0,211.3" fill="#8a8a8a" stroke="#8a8a8a" stroke-width="0.8" stroke-linejoin="round"/>
<polygon points="624.3,188.2 626.9,191.1 636.9,216.4 634.2,213.1" fill="#616161" stroke="#616161" stroke-width="0.8" stroke-linejoin="round"/>
<polygon points="539.7,212.6 540.7,217.2 559.3,245.1 557.9,240.1" fill="#8a8a8a" stroke="#8a8a8a" stroke-width="0.8" stroke-linejoin="round"/>
<polygon points="760.4,176.3 762.5,175.6 767.1,177.7 765.1,178.4" fill="#f7f7f7" stroke="#f7f7f7" stroke-width="0.8" stroke-linejoin="round"/>
<polygon points="699.2,177.2 703.2,179.6 707.8,203.5 703.9,200.7" fill="#616161" stroke="#616161" stroke-width="0.8" stroke-linejoin="round"/>
<polygon points="760.4,176.3 765.1,178.4 765.1,180.6 760.5,178.5" fill="#bdbdbd" stroke="#bdbdbd" stroke-width="0.8" stroke-linejoin="round"/>
<polygon points="624.0,203.7 629.8,201.9 632.8,205.3 626.9,207.2" fill="#f7f7f7" stroke="#f7f7f7" stroke-width="0.8" stroke-linejoin="round"/>
<polygon points="765.1,178.4 767.1,177.7 767.2,179.8 765.1,180.6" fill="#d4d4d4" stroke="#d4d4d4" stroke-width="0.8" stroke-linejoin="round"/>
<polygon points="624.0,203.7 626.9,207.2 628.8,211.8 625.9,208.2" fill="#bdbdbd" stroke="#bdbdbd" stroke-width="0.8" stroke-linejoin="round"/>
<polygon points="626.9,191.1 629.8,194.2 639.8,219.8 636.9,216.4" fill="#616161" stroke="#616161" stroke-width="0.8" stroke-linejoin="round"/>
<polygon points="874.0,200.4 875.3,199.5 875.1,200.4 873.8,201.3" fill="#b4b4b4" stroke="#b4b4b4" stroke-width="0.8" stroke-linejoin="round"/>
<polygon points="872.9,189.3 877.4,186.5 871.0,211.3 866.7,214.4" fill="#8a8a8a" stroke="#8a8a8a" stroke-width="0.8" stroke-linejoin="round"/>
<polygon points="875.8,192.5 877.2,191.7 875.1,199.7 873.8,200.6" fill="#5893b1" stroke="#5893b1" stroke-width="0.8" stroke-linejoin="round"/>
<polygon points="765.6,178.7 767.6,177.9 772.3,179.9 770.2,180.7" fill="#f7f7f7" stroke="#f7f7f7" stroke-width="0.8" stroke-linejoin="round"/>
<polygon points="626.9,207.2 632.8,205.3 634.6,209.9 628.8,211.8" fill="#d4d4d4" stroke="#d4d4d4" stroke-width="0.8" stroke-linejoin="round"/>
<polygon points="765.6,178.7 770.2,180.7 770.3,183.0 765.6,180.9" fill="#bdbdbd" stroke="#bdbdbd" stroke-width="0.8" stroke-linejoin="round"/>
<polygon points="710.9,190.9 714.4,189.6 716.6,191.0 713.1,192.3" fill="#f7f7f7" stroke="#f7f7f7" stroke-width="0.8" stroke-linejoin="round"/>
<polygon points="872.7,201.3 874.0,200.4 873.8,201.3 872.4,202.2" fill="#b4b4b4" stroke="#b4b4b4" stroke-width="0.8" stroke-linejoin="round"/>
<polygon points="703.2,179.6 707.5,182.2 711.8,206.3 707.8,203.5" fill="#616161" stroke="#616161" stroke-width="0.8" stroke-linejoin="round"/>
<polygon points="874.5,193.4 875.8,192.5 873.8,200.6 872.4,201.5" fill="#5893b1" stroke="#5893b1" stroke-width="0.8" stroke-linejoin="round"/>
<polygon points="710.9,190.9 713.1,192.3 713.8,196.3 711.6,194.9" fill="#bdbdbd" stroke="#bdbdbd" stroke-width="0.8" stroke-linejoin="round"/>
<polygon points="540.7,217.2 541.7,222.1 560.8,250.4 559.3,245.1" fill="#8a8a8a" stroke="#8a8a8a" stroke-width="0.8" stroke-linejoin="round"/>
<polygon points="595.9,204.9 604.8,202.3 605.7,203.5 596.7,206.2" fill="#f7f7f7" stroke="#f7f7f7" stroke-width="0.8" stroke-linejoin="round"/>
<polygon points="713.1,192.3 716.6,191.0 717.3,195.1 713.8,196.3" fill="#d4d4d4" stroke="#d4d4d4" stroke-width="0.8" stroke-linejoin="round"/>
<polygon points="586.6,207.6 595.9,204.9 596.7,206.2 587.3,209.0" fill="#f7f7f7" stroke="#f7f7f7" stroke-width="0.8" stroke-linejoin="round"/>
<polygon points="577.0,210.5 586.6,207.6 587.3,209.0 577.6,211.9" fill="#f7f7f7" stroke="#f7f7f7" stroke-width="0.8" stroke-linejoin="round"/>
<polygon points="545.3,223.8 545.6,225.4 550.6,232.8 550.2,231.2" fill="#5893b1" stroke="#5893b1" stroke-width="0.8" stroke-linejoin="round"/>
<polygon points="871.3,202.2 872.7,201.3 872.4,202.2 871.1,203.1" fill="#b4b4b4" stroke="#b4b4b4" stroke-width="0.8" stroke-linejoin="round"/>
<polygon points="596.7,206.2 605.7,203.5 606.8,206.0 597.9,208.8" fill="#d4d4d4" stroke="#d4d4d4" stroke-width="0.8" stroke-linejoin="round"/>
<polygon points="873.1,194.3 874.5,193.4 872.4,201.5 871.0,202.4" fill="#5893b1" stroke="#5893b1" stroke-width="0.8" stroke-linejoin="round"/>
<polygon points="587.3,209.0 596.7,206.2 597.9,208.8 588.7,211.6" fill="#d4d4d4" stroke="#d4d4d4" stroke-width="0.8" stroke-linejoin="round"/>
<polygon points="577.6,211.9 587.3,209.0 588.7,211.6 579.1,214.5" fill="#d4d4d4" stroke="#d4d4d4" stroke-width="0.8" stroke-linejoin="round"/>
<polygon points="707.5,182.2 710.0,181.3 714.2,205.4 711.8,206.3" fill="#818181" stroke="#818181" stroke-width="0.8" stroke-linejoin="round"/>
<polygon points="770.2,180.7 772.3,179.9 777.1,182.1 775.0,182.9" fill="#f7f7f7" stroke="#f7f7f7" stroke-width="0.8" stroke-linejoin="round"/>
<polygon points="770.2,180.7 775.0,182.9 775.0,185.2 770.3,183.0" fill="#bdbdbd" stroke="#bdbdbd" stroke-width="0.8" stroke-linejoin="round"/>
<polygon points="629.8,194.2 632.7,197.4 642.8,223.3 639.8,219.8" fill="#616161" stroke="#616161" stroke-width="0.8" stroke-linejoin="round"/>
<polygon points="869.9,203.1 871.3,202.2 871.1,203.1 869.7,204.0" fill="#b4b4b4" stroke="#b4b4b4" stroke-width="0.8" stroke-linejoin="round"/>
<polygon points="871.7,195.2 873.1,194.3 871.0,202.4 869.7,203.3" fill="#5893b1" stroke="#5893b1" stroke-width="0.8" stroke-linejoin="round"/>
<polygon points="545.6,225.4 546.0,227.0 551.0,234.5 550.6,232.8" fill="#5893b1" stroke="#5893b1" stroke-width="0.8" stroke-linejoin="round"/>
<polygon points="868.2,192.2 872.9,189.3 866.7,214.4 862.2,217.6" fill="#8a8a8a" stroke="#8a8a8a" stroke-width="0.8" stroke-linejoin="round"/>
<polygon points="855.8,201.1 858.1,199.6 862.3,201.3 860.0,202.7" fill="#f7f7f7" stroke="#f7f7f7" stroke-width="0.8" stroke-linejoin="round"/>
<polygon points="719.3,182.7 722.9,181.5 725.3,182.9 721.7,184.1" fill="#f7f7f7" stroke="#f7f7f7" stroke-width="0.8" stroke-linejoin="round"/>
<polygon points="703.8,184.8 711.6,182.3 715.8,206.4 708.5,209.3" fill="#818181" stroke="#818181" stroke-width="0.8" stroke-linejoin="round"/>
<polygon points="860.0,202.7 862.3,201.3 861.3,205.5 859.1,207.0" fill="#d4d4d4" stroke="#d4d4d4" stroke-width="0.8" stroke-linejoin="round"/>
<polygon points="719.3,182.7 721.7,184.1 722.4,188.5 720.0,187.0" fill="#bdbdbd" stroke="#bdbdbd" stroke-width="0.8" stroke-linejoin="round"/>
<polygon points="546.0,227.0 546.4,228.7 551.4,236.1 551.0,234.5" fill="#5893b1" stroke="#5893b1" stroke-width="0.8" stroke-linejoin="round"/>
<polygon points="775.0,182.9 777.1,182.1 782.1,184.3 780.0,185.2" fill="#f7f7f7" stroke="#f7f7f7" stroke-width="0.8" stroke-linejoin="round"/>
<polygon points="721.7,184.1 725.3,182.9 725.9,187.2 722.4,188.5" fill="#d4d4d4" stroke="#d4d4d4" stroke-width="0.8" stroke-linejoin="round"/>
<polygon points="855.8,201.1 860.0,202.7 859.1,207.0 855.0,205.3" fill="#bdbdbd" stroke="#bdbdbd" stroke-width="0.8" stroke-linejoin="round"/>
<polygon points="775.0,182.9 780.0,185.2 780.0,187.5 775.0,185.2" fill="#bdbdbd" stroke="#bdbdbd" stroke-width="0.8" stroke-linejoin="round"/>
<polygon points="541.7,222.1 542.8,227.4 562.3,256.1 560.8,250.4" fill="#8a8a8a" stroke="#8a8a8a" stroke-width="0.8" stroke-linejoin="round"/>
<polygon points="709.1,183.1 713.7,185.9 717.9,210.6 713.4,207.4" fill="#616161" stroke="#616161" stroke-width="0.8" stroke-linejoin="round"/>
<polygon points="628.4,211.7 633.3,210.0 634.9,211.9 629.9,213.6" fill="#f7f7f7" stroke="#f7f7f7" stroke-width="0.8" stroke-linejoin="round"/>
<polygon points="780.0,185.2 782.1,184.3 782.1,186.6 780.0,187.5" fill="#d4d4d4" stroke="#d4d4d4" stroke-width="0.8" stroke-linejoin="round"/>
<polygon points="695.7,187.5 703.8,184.8 708.5,209.3 701.0,212.3" fill="#818181" stroke="#818181" stroke-width="0.8" stroke-linejoin="round"/>
<polygon points="628.4,211.7 629.9,213.6 631.7,218.0 630.2,216.1" fill="#bdbdbd" stroke="#bdbdbd" stroke-width="0.8" stroke-linejoin="round"/>
<polygon points="546.4,228.7 546.8,230.3 551.8,237.9 551.4,236.1" fill="#5893b1" stroke="#5893b1" stroke-width="0.8" stroke-linejoin="round"/>
<polygon points="629.9,213.6 634.9,211.9 636.7,216.3 631.7,218.0" fill="#d4d4d4" stroke="#d4d4d4" stroke-width="0.8" stroke-linejoin="round"/>
<polygon points="632.7,197.4 635.8,200.7 645.9,227.0 642.8,223.3" fill="#616161" stroke="#616161" stroke-width="0.8" stroke-linejoin="round"/>
<polygon points="780.6,185.4 782.7,184.6 787.8,186.8 785.7,187.7" fill="#f7f7f7" stroke="#f7f7f7" stroke-width="0.8" stroke-linejoin="round"/>
<polygon points="546.8,230.3 547.2,232.0 552.3,239.6 551.8,237.9" fill="#5893b1" stroke="#5893b1" stroke-width="0.8" stroke-linejoin="round"/>
<polygon points="863.3,195.2 868.2,192.2 862.2,217.6 857.5,221.0" fill="#8a8a8a" stroke="#8a8a8a" stroke-width="0.8" stroke-linejoin="round"/>
<polygon points="687.1,190.3 695.7,187.5 701.0,212.3 693.1,215.4" fill="#818181" stroke="#818181" stroke-width="0.8" stroke-linejoin="round"/>
<polygon points="780.6,185.4 785.7,187.7 785.7,190.1 780.6,187.7" fill="#bdbdbd" stroke="#bdbdbd" stroke-width="0.8" stroke-linejoin="round"/>
<polygon points="547.2,232.0 547.5,233.8 552.7,241.4 552.3,239.6" fill="#5893b1" stroke="#5893b1" stroke-width="0.8" stroke-linejoin="round"/>
<polygon points="713.7,185.9 718.7,188.9 722.5,213.9 717.9,210.6" fill="#616161" stroke="#616161" stroke-width="0.8" stroke-linejoin="round"/>
<polygon points="678.2,193.2 687.1,190.3 693.1,215.4 685.0,218.7" fill="#818181" stroke="#818181" stroke-width="0.8" stroke-linejoin="round"/>
<polygon points="785.7,187.7 787.8,186.8 793.1,189.2 791.0,190.1" fill="#f7f7f7" stroke="#f7f7f7" stroke-width="0.8" stroke-linejoin="round"/>
<polygon points="542.8,227.4 543.9,233.0 564.0,262.1 562.3,256.1" fill="#8a8a8a" stroke="#8a8a8a" stroke-width="0.8" stroke-linejoin="round"/>
<polygon points="846.3,193.9 848.9,192.4 853.1,194.0 850.6,195.5" fill="#f7f7f7" stroke="#f7f7f7" stroke-width="0.8" stroke-linejoin="round"/>
<polygon points="636.0,204.1 637.2,205.5 645.1,226.1 643.9,224.7" fill="#7a4d25" stroke="#7a4d25" stroke-width="0.8" stroke-linejoin="round"/>
<polygon points="785.7,187.7 791.0,190.1 790.9,192.5 785.7,190.1" fill="#bdbdbd" stroke="#bdbdbd" stroke-width="0.8" stroke-linejoin="round"/>
<polygon points="547.5,233.8 547.9,235.5 553.2,243.2 552.7,241.4" fill="#5893b1" stroke="#5893b1" stroke-width="0.8" stroke-linejoin="round"/>
<polygon points="850.6,195.5 853.1,194.0 852.2,198.6 849.7,200.1" fill="#d4d4d4" stroke="#d4d4d4" stroke-width="0.8" stroke-linejoin="round"/>
<polygon points="668.9,196.3 678.2,193.2 685.0,218.7 676.4,222.1" fill="#818181" stroke="#818181" stroke-width="0.8" stroke-linejoin="round"/>
<polygon points="846.3,193.9 850.6,195.5 849.7,200.1 845.5,198.4" fill="#bdbdbd" stroke="#bdbdbd" stroke-width="0.8" stroke-linejoin="round"/>
<polygon points="635.8,200.7 639.1,204.3 649.1,230.9 645.9,227.0" fill="#616161" stroke="#616161" stroke-width="0.8" stroke-linejoin="round"/>
<polygon points="858.1,198.4 863.3,195.2 857.5,221.0 852.6,224.5" fill="#8a8a8a" stroke="#8a8a8a" stroke-width="0.8" stroke-linejoin="round"/>
<polygon points="637.2,205.5 638.4,206.8 646.3,227.6 645.1,226.1" fill="#7a4d25" stroke="#7a4d25" stroke-width="0.8" stroke-linejoin="round"/>
<polygon points="791.0,190.1 793.1,189.2 798.6,191.6 796.5,192.6" fill="#f7f7f7" stroke="#f7f7f7" stroke-width="0.8" stroke-linejoin="round"/>
<polygon points="659.2,199.5 668.9,196.3 676.4,222.1 667.5,225.6" fill="#818181" stroke="#818181" stroke-width="0.8" stroke-linejoin="round"/>
<polygon points="791.0,190.1 796.5,192.6 796.4,195.0 790.9,192.5" fill="#bdbdbd" stroke="#bdbdbd" stroke-width="0.8" stroke-linejoin="round"/>
<polygon points="639.1,204.3 642.7,203.1 652.4,229.7 649.1,230.9" fill="#818181" stroke="#818181" stroke-width="0.8" stroke-linejoin="round"/>
<polygon points="673.3,194.8 677.6,198.2 684.6,224.3 680.5,220.5" fill="#616161" stroke="#616161" stroke-width="0.8" stroke-linejoin="round"/>
<polygon points="718.7,188.9 723.8,192.0 727.4,217.3 722.5,213.9" fill="#616161" stroke="#616161" stroke-width="0.8" stroke-linejoin="round"/>
<polygon points="796.5,192.6 798.6,191.6 798.5,194.0 796.4,195.0" fill="#d4d4d4" stroke="#d4d4d4" stroke-width="0.8" stroke-linejoin="round"/>
<polygon points="638.4,206.8 639.6,208.2 647.6,229.1 646.3,227.6" fill="#7a4d25" stroke="#7a4d25" stroke-width="0.8" stroke-linejoin="round"/>
<polygon points="648.9,202.8 659.2,199.5 667.5,225.6 658.2,229.3" fill="#818181" stroke="#818181" stroke-width="0.8" stroke-linejoin="round"/>
<polygon points="666.7,211.0 671.2,209.4 673.2,211.2 668.7,212.9" fill="#f7f7f7" stroke="#f7f7f7" stroke-width="0.8" stroke-linejoin="round"/>
<polygon points="666.7,211.0 668.7,212.9 670.0,217.3 668.0,215.4" fill="#bdbdbd" stroke="#bdbdbd" stroke-width="0.8" stroke-linejoin="round"/>
<polygon points="638.2,206.3 648.9,202.8 658.2,229.3 648.4,233.2" fill="#818181" stroke="#818181" stroke-width="0.8" stroke-linejoin="round"/>
<polygon points="543.9,233.0 545.1,239.0 565.8,268.5 564.0,262.1" fill="#8a8a8a" stroke="#8a8a8a" stroke-width="0.8" stroke-linejoin="round"/>
<polygon points="797.2,192.9 799.3,191.9 805.0,194.5 802.9,195.5" fill="#f7f7f7" stroke="#f7f7f7" stroke-width="0.8" stroke-linejoin="round"/>
<polygon points="729.3,202.5 732.9,201.1 735.6,202.7 731.9,204.2" fill="#f7f7f7" stroke="#f7f7f7" stroke-width="0.8" stroke-linejoin="round"/>
<polygon points="668.7,212.9 673.2,211.2 674.5,215.6 670.0,217.3" fill="#d4d4d4" stroke="#d4d4d4" stroke-width="0.8" stroke-linejoin="round"/>
<polygon points="729.3,202.5 731.9,204.2 732.5,208.5 729.8,206.8" fill="#bdbdbd" stroke="#bdbdbd" stroke-width="0.8" stroke-linejoin="round"/>
<polygon points="797.2,192.9 802.9,195.5 802.8,197.9 797.1,195.3" fill="#bdbdbd" stroke="#bdbdbd" stroke-width="0.8" stroke-linejoin="round"/>
<polygon points="626.9,210.0 638.2,206.3 648.4,233.2 638.2,237.3" fill="#818181" stroke="#818181" stroke-width="0.8" stroke-linejoin="round"/>
<polygon points="731.9,204.2 735.6,202.7 736.1,207.0 732.5,208.5" fill="#d4d4d4" stroke="#d4d4d4" stroke-width="0.8" stroke-linejoin="round"/>
<polygon points="544.7,236.9 560.4,231.8 579.0,260.8 565.2,266.3" fill="#818181" stroke="#818181" stroke-width="0.8" stroke-linejoin="round"/>
<polygon points="615.0,213.9 626.9,210.0 638.2,237.3 627.5,241.5" fill="#818181" stroke="#818181" stroke-width="0.8" stroke-linejoin="round"/>
<polygon points="852.7,201.7 858.1,198.4 852.6,224.5 847.4,228.2" fill="#8a8a8a" stroke="#8a8a8a" stroke-width="0.8" stroke-linejoin="round"/>
<polygon points="560.4,231.8 575.2,226.9 592.1,255.6 579.0,260.8" fill="#818181" stroke="#818181" stroke-width="0.8" stroke-linejoin="round"/>
<polygon points="602.4,218.0 615.0,213.9 627.5,241.5 616.3,246.0" fill="#818181" stroke="#818181" stroke-width="0.8" stroke-linejoin="round"/>
<polygon points="656.1,207.9 659.1,206.8 665.5,226.4 662.7,227.5" fill="#7a4d25" stroke="#7a4d25" stroke-width="0.8" stroke-linejoin="round"/>
<polygon points="575.2,226.9 589.2,222.4 604.5,250.7 592.1,255.6" fill="#818181" stroke="#818181" stroke-width="0.8" stroke-linejoin="round"/>
<polygon points="589.2,222.4 602.4,218.0 616.3,246.0 604.5,250.7" fill="#818181" stroke="#818181" stroke-width="0.8" stroke-linejoin="round"/>
<polygon points="653.0,208.9 656.1,207.9 662.7,227.5 659.8,228.7" fill="#7a4d25" stroke="#7a4d25" stroke-width="0.8" stroke-linejoin="round"/>
<polygon points="802.9,195.5 805.0,194.5 811.0,197.1 808.9,198.2" fill="#f7f7f7" stroke="#f7f7f7" stroke-width="0.8" stroke-linejoin="round"/>
<polygon points="649.9,210.0 653.0,208.9 659.8,228.7 656.9,229.8" fill="#7a4d25" stroke="#7a4d25" stroke-width="0.8" stroke-linejoin="round"/>
<polygon points="640.3,205.6 644.0,209.6 654.0,236.8 650.4,232.4" fill="#616161" stroke="#616161" stroke-width="0.8" stroke-linejoin="round"/>
<polygon points="723.8,192.0 729.2,195.2 732.6,221.0 727.4,217.3" fill="#616161" stroke="#616161" stroke-width="0.8" stroke-linejoin="round"/>
<polygon points="677.6,198.2 682.1,201.9 689.0,228.3 684.6,224.3" fill="#616161" stroke="#616161" stroke-width="0.8" stroke-linejoin="round"/>
<polygon points="738.4,193.6 742.1,192.2 745.0,193.8 741.3,195.2" fill="#f7f7f7" stroke="#f7f7f7" stroke-width="0.8" stroke-linejoin="round"/>
<polygon points="802.9,195.5 808.9,198.2 808.7,200.6 802.8,197.9" fill="#bdbdbd" stroke="#bdbdbd" stroke-width="0.8" stroke-linejoin="round"/>
<polygon points="738.4,193.6 741.3,195.2 741.7,199.8 738.9,198.2" fill="#bdbdbd" stroke="#bdbdbd" stroke-width="0.8" stroke-linejoin="round"/>
<polygon points="741.3,195.2 745.0,193.8 745.4,198.3 741.7,199.8" fill="#d4d4d4" stroke="#d4d4d4" stroke-width="0.8" stroke-linejoin="round"/>
<polygon points="637.5,232.9 647.8,229.0 648.2,229.5 637.9,233.5" fill="#d6d6d6" stroke="#d6d6d6" stroke-width="0.8" stroke-linejoin="round"/>
<polygon points="637.9,233.5 648.2,229.5 648.5,230.1 638.2,234.1" fill="#b4b4b4" stroke="#b4b4b4" stroke-width="0.8" stroke-linejoin="round"/>
<polygon points="808.9,198.2 811.0,197.1 817.3,199.9 815.2,201.0" fill="#f7f7f7" stroke="#f7f7f7" stroke-width="0.8" stroke-linejoin="round"/>
<polygon points="563.8,261.5 577.8,256.1 578.0,256.7 564.0,262.2" fill="#d6d6d6" stroke="#d6d6d6" stroke-width="0.8" stroke-linejoin="round"/>
<polygon points="626.7,237.1 637.5,232.9 637.9,233.5 627.1,237.7" fill="#d6d6d6" stroke="#d6d6d6" stroke-width="0.8" stroke-linejoin="round"/>
<polygon points="545.1,239.0 546.5,245.4 567.7,275.3 565.8,268.5" fill="#8a8a8a" stroke="#8a8a8a" stroke-width="0.8" stroke-linejoin="round"/>
<polygon points="564.0,262.2 578.0,256.7 578.4,257.4 564.5,262.9" fill="#b4b4b4" stroke="#b4b4b4" stroke-width="0.8" stroke-linejoin="round"/>
<polygon points="627.1,237.7 637.9,233.5 638.2,234.1 627.4,238.3" fill="#b4b4b4" stroke="#b4b4b4" stroke-width="0.8" stroke-linejoin="round"/>
<polygon points="577.8,256.1 591.0,251.0 591.2,251.6 578.0,256.7" fill="#d6d6d6" stroke="#d6d6d6" stroke-width="0.8" stroke-linejoin="round"/>
<polygon points="615.4,241.5 626.7,237.1 627.1,237.7 615.7,242.1" fill="#d6d6d6" stroke="#d6d6d6" stroke-width="0.8" stroke-linejoin="round"/>
<polygon points="808.9,198.2 815.2,201.0 814.9,203.5 808.7,200.6" fill="#bdbdbd" stroke="#bdbdbd" stroke-width="0.8" stroke-linejoin="round"/>
<polygon points="591.0,251.0 603.5,246.1 603.8,246.7 591.2,251.6" fill="#d6d6d6" stroke="#d6d6d6" stroke-width="0.8" stroke-linejoin="round"/>
<polygon points="578.0,256.7 591.2,251.6 591.6,252.3 578.4,257.4" fill="#b4b4b4" stroke="#b4b4b4" stroke-width="0.8" stroke-linejoin="round"/>
<polygon points="603.5,246.1 615.4,241.5 615.7,242.1 603.8,246.7" fill="#d6d6d6" stroke="#d6d6d6" stroke-width="0.8" stroke-linejoin="round"/>
<polygon points="615.7,242.1 627.1,237.7 627.4,238.3 616.1,242.7" fill="#b4b4b4" stroke="#b4b4b4" stroke-width="0.8" stroke-linejoin="round"/>
<polygon points="748.3,206.9 751.8,205.4 754.8,207.1 751.2,208.7" fill="#f7f7f7" stroke="#f7f7f7" stroke-width="0.8" stroke-linejoin="round"/>
<polygon points="591.2,251.6 603.8,246.7 604.2,247.4 591.6,252.3" fill="#b4b4b4" stroke="#b4b4b4" stroke-width="0.8" stroke-linejoin="round"/>
<polygon points="815.2,201.0 817.3,199.9 817.0,202.4 814.9,203.5" fill="#d4d4d4" stroke="#d4d4d4" stroke-width="0.8" stroke-linejoin="round"/>
<polygon points="603.8,246.7 615.7,242.1 616.1,242.7 604.2,247.4" fill="#b4b4b4" stroke="#b4b4b4" stroke-width="0.8" stroke-linejoin="round"/>
<polygon points="847.1,205.2 852.7,201.7 847.4,228.2 842.1,232.0" fill="#8a8a8a" stroke="#8a8a8a" stroke-width="0.8" stroke-linejoin="round"/>
<polygon points="748.3,206.9 751.2,208.7 751.6,213.1 748.6,211.3" fill="#bdbdbd" stroke="#bdbdbd" stroke-width="0.8" stroke-linejoin="round"/>
<polygon points="648.2,229.5 649.3,229.0 653.1,233.5 652.0,233.9" fill="#d6d6d6" stroke="#d6d6d6" stroke-width="0.8" stroke-linejoin="round"/>
<polygon points="648.2,229.5 652.0,233.9 652.2,234.6 648.5,230.1" fill="#a2a2a2" stroke="#a2a2a2" stroke-width="0.8" stroke-linejoin="round"/>
<polygon points="729.2,195.2 734.9,198.6 738.0,224.8 732.6,221.0" fill="#616161" stroke="#616161" stroke-width="0.8" stroke-linejoin="round"/>
<polygon points="751.2,208.7 754.8,207.1 755.1,211.5 751.6,213.1" fill="#d4d4d4" stroke="#d4d4d4" stroke-width="0.8" stroke-linejoin="round"/>
<polygon points="562.4,262.6 563.9,261.9 565.8,268.6 564.2,269.3" fill="#d6d6d6" stroke="#d6d6d6" stroke-width="0.8" stroke-linejoin="round"/>
<polygon points="602.2,224.8 606.5,223.3 609.0,227.3 604.5,228.8" fill="#f7f7f7" stroke="#f7f7f7" stroke-width="0.8" stroke-linejoin="round"/>
<polygon points="602.2,224.8 604.5,228.8 605.9,231.6 603.5,227.5" fill="#bdbdbd" stroke="#bdbdbd" stroke-width="0.8" stroke-linejoin="round"/>
<polygon points="563.9,261.9 565.8,268.6 566.3,269.3 564.4,262.6" fill="#bcbcbc" stroke="#bcbcbc" stroke-width="0.8" stroke-linejoin="round"/>
<polygon points="644.0,209.6 647.8,213.8 657.9,241.4 654.0,236.8" fill="#616161" stroke="#616161" stroke-width="0.8" stroke-linejoin="round"/>
<polygon points="682.1,201.9 686.9,205.7 693.5,232.5 689.0,228.3" fill="#616161" stroke="#616161" stroke-width="0.8" stroke-linejoin="round"/>
<polygon points="562.4,254.0 573.4,249.9 575.4,256.0 564.2,260.3" fill="#f7f7f7" stroke="#f7f7f7" stroke-width="0.8" stroke-linejoin="round"/>
<polygon points="742.0,209.7 745.6,208.1 748.6,209.9 744.9,211.5" fill="#f7f7f7" stroke="#f7f7f7" stroke-width="0.8" stroke-linejoin="round"/>
<polygon points="832.3,215.8 835.1,214.0 839.3,216.0 836.5,217.8" fill="#f7f7f7" stroke="#f7f7f7" stroke-width="0.8" stroke-linejoin="round"/>
<polygon points="573.4,249.9 575.4,256.0 578.8,261.3 576.7,255.2" fill="#dadada" stroke="#dadada" stroke-width="0.8" stroke-linejoin="round"/>
<polygon points="836.5,217.8 839.3,216.0 838.5,220.5 835.8,222.3" fill="#d4d4d4" stroke="#d4d4d4" stroke-width="0.8" stroke-linejoin="round"/>
<polygon points="742.0,209.7 744.9,211.5 745.3,216.0 742.4,214.1" fill="#bdbdbd" stroke="#bdbdbd" stroke-width="0.8" stroke-linejoin="round"/>
<polygon points="744.9,211.5 748.6,209.9 749.0,214.3 745.3,216.0" fill="#d4d4d4" stroke="#d4d4d4" stroke-width="0.8" stroke-linejoin="round"/>
<polygon points="832.3,215.8 836.5,217.8 835.8,222.3 831.6,220.3" fill="#bdbdbd" stroke="#bdbdbd" stroke-width="0.8" stroke-linejoin="round"/>
<polygon points="546.5,245.4 547.9,252.3 569.7,282.6 567.7,275.3" fill="#8a8a8a" stroke="#8a8a8a" stroke-width="0.8" stroke-linejoin="round"/>
<polygon points="727.1,202.0 735.2,198.8 738.2,224.9 730.8,228.5" fill="#818181" stroke="#818181" stroke-width="0.8" stroke-linejoin="round"/>
<polygon points="841.1,208.9 847.1,205.2 842.1,232.0 836.4,236.1" fill="#8a8a8a" stroke="#8a8a8a" stroke-width="0.8" stroke-linejoin="round"/>
<polygon points="734.9,198.6 740.9,202.2 743.6,228.7 738.0,224.8" fill="#616161" stroke="#616161" stroke-width="0.8" stroke-linejoin="round"/>
<polygon points="604.5,228.8 609.0,227.3 611.5,231.5 607.0,233.1" fill="#f7f7f7" stroke="#f7f7f7" stroke-width="0.8" stroke-linejoin="round"/>
<polygon points="604.5,228.8 607.0,233.1 608.4,235.9 605.9,231.6" fill="#bdbdbd" stroke="#bdbdbd" stroke-width="0.8" stroke-linejoin="round"/>
<polygon points="708.7,215.8 712.8,214.0 715.5,216.0 711.3,217.8" fill="#f7f7f7" stroke="#f7f7f7" stroke-width="0.8" stroke-linejoin="round"/>
<polygon points="652.0,233.9 653.1,233.5 657.1,238.2 655.9,238.7" fill="#d6d6d6" stroke="#d6d6d6" stroke-width="0.8" stroke-linejoin="round"/>
<polygon points="652.0,233.9 655.9,238.7 656.2,239.3 652.2,234.6" fill="#a2a2a2" stroke="#a2a2a2" stroke-width="0.8" stroke-linejoin="round"/>
<polygon points="708.7,215.8 711.3,217.8 712.1,222.3 709.5,220.3" fill="#bdbdbd" stroke="#bdbdbd" stroke-width="0.8" stroke-linejoin="round"/>
<polygon points="732.2,214.1 736.1,212.4 739.0,214.3 735.1,216.1" fill="#f7f7f7" stroke="#f7f7f7" stroke-width="0.8" stroke-linejoin="round"/>
<polygon points="647.8,213.8 651.9,218.3 661.9,246.3 657.9,241.4" fill="#616161" stroke="#616161" stroke-width="0.8" stroke-linejoin="round"/>
<polygon points="564.2,269.3 565.8,268.6 567.8,275.8 566.1,276.5" fill="#d6d6d6" stroke="#d6d6d6" stroke-width="0.8" stroke-linejoin="round"/>
<polygon points="565.8,268.6 567.8,275.8 568.3,276.5 566.3,269.3" fill="#bcbcbc" stroke="#bcbcbc" stroke-width="0.8" stroke-linejoin="round"/>
<polygon points="686.9,205.7 691.9,209.7 698.4,236.9 693.5,232.5" fill="#616161" stroke="#616161" stroke-width="0.8" stroke-linejoin="round"/>
<polygon points="711.3,217.8 715.5,216.0 716.3,220.5 712.1,222.3" fill="#d4d4d4" stroke="#d4d4d4" stroke-width="0.8" stroke-linejoin="round"/>
<polygon points="732.2,214.1 735.1,216.1 735.7,220.6 732.8,218.5" fill="#bdbdbd" stroke="#bdbdbd" stroke-width="0.8" stroke-linejoin="round"/>
<polygon points="718.7,205.4 727.1,202.0 730.8,228.5 723.1,232.2" fill="#818181" stroke="#818181" stroke-width="0.8" stroke-linejoin="round"/>
<polygon points="735.1,216.1 739.0,214.3 739.5,218.8 735.7,220.6" fill="#d4d4d4" stroke="#d4d4d4" stroke-width="0.8" stroke-linejoin="round"/>
<polygon points="564.2,260.3 575.4,256.0 577.7,262.4 566.1,267.1" fill="#f7f7f7" stroke="#f7f7f7" stroke-width="0.8" stroke-linejoin="round"/>
<polygon points="575.4,256.0 577.7,262.4 581.1,267.8 578.8,261.3" fill="#dadada" stroke="#dadada" stroke-width="0.8" stroke-linejoin="round"/>
<polygon points="740.9,202.2 747.2,206.0 749.5,232.9 743.6,228.7" fill="#616161" stroke="#616161" stroke-width="0.8" stroke-linejoin="round"/>
<polygon points="607.0,233.1 611.5,231.5 614.2,235.9 609.6,237.6" fill="#f7f7f7" stroke="#f7f7f7" stroke-width="0.8" stroke-linejoin="round"/>
<polygon points="607.0,233.1 609.6,237.6 611.0,240.4 608.4,235.9" fill="#bdbdbd" stroke="#bdbdbd" stroke-width="0.8" stroke-linejoin="round"/>
<polygon points="547.9,252.3 549.4,259.8 571.8,290.4 569.7,282.6" fill="#8a8a8a" stroke="#8a8a8a" stroke-width="0.8" stroke-linejoin="round"/>
<polygon points="709.9,208.9 718.7,205.4 723.1,232.2 715.0,236.1" fill="#818181" stroke="#818181" stroke-width="0.8" stroke-linejoin="round"/>
<polygon points="834.8,212.7 841.1,208.9 836.4,236.1 830.5,240.3" fill="#8a8a8a" stroke="#8a8a8a" stroke-width="0.8" stroke-linejoin="round"/>
<polygon points="566.1,267.1 577.7,262.4 581.1,267.8 569.8,272.5" fill="#d4d4d4" stroke="#d4d4d4" stroke-width="0.8" stroke-linejoin="round"/>
<polygon points="838.3,224.5 840.2,223.2 840.0,224.1 838.1,225.4" fill="#b4b4b4" stroke="#b4b4b4" stroke-width="0.8" stroke-linejoin="round"/>
<polygon points="839.5,215.8 841.4,214.6 839.8,223.4 837.9,224.7" fill="#5893b1" stroke="#5893b1" stroke-width="0.8" stroke-linejoin="round"/>
<polygon points="740.4,207.2 742.2,208.3 744.3,229.2 742.5,228.0" fill="#7a4d25" stroke="#7a4d25" stroke-width="0.8" stroke-linejoin="round"/>
<polygon points="655.9,238.7 657.1,238.2 661.3,243.2 660.1,243.7" fill="#d6d6d6" stroke="#d6d6d6" stroke-width="0.8" stroke-linejoin="round"/>
<polygon points="655.9,238.7 660.1,243.7 660.4,244.4 656.2,239.3" fill="#a2a2a2" stroke="#a2a2a2" stroke-width="0.8" stroke-linejoin="round"/>
<polygon points="691.9,209.7 697.2,213.9 703.4,241.6 698.4,236.9" fill="#616161" stroke="#616161" stroke-width="0.8" stroke-linejoin="round"/>
<polygon points="651.9,218.3 656.3,223.0 666.2,251.4 661.9,246.3" fill="#616161" stroke="#616161" stroke-width="0.8" stroke-linejoin="round"/>
<polygon points="816.8,210.6 820.0,208.7 824.4,210.8 821.2,212.7" fill="#f7f7f7" stroke="#f7f7f7" stroke-width="0.8" stroke-linejoin="round"/>
<polygon points="609.6,237.6 614.2,235.9 615.6,238.7 611.0,240.4" fill="#d4d4d4" stroke="#d4d4d4" stroke-width="0.8" stroke-linejoin="round"/>
<polygon points="742.2,208.3 744.1,209.5 746.1,230.5 744.3,229.2" fill="#7a4d25" stroke="#7a4d25" stroke-width="0.8" stroke-linejoin="round"/>
<polygon points="836.4,225.7 838.3,224.5 838.1,225.4 836.2,226.7" fill="#b4b4b4" stroke="#b4b4b4" stroke-width="0.8" stroke-linejoin="round"/>
<polygon points="837.5,217.1 839.5,215.8 837.9,224.7 836.0,226.0" fill="#5893b1" stroke="#5893b1" stroke-width="0.8" stroke-linejoin="round"/>
<polygon points="566.1,276.5 567.8,275.8 569.9,283.4 568.2,284.2" fill="#d6d6d6" stroke="#d6d6d6" stroke-width="0.8" stroke-linejoin="round"/>
<polygon points="567.8,275.8 569.9,283.4 570.4,284.1 568.3,276.5" fill="#bcbcbc" stroke="#bcbcbc" stroke-width="0.8" stroke-linejoin="round"/>
<polygon points="700.6,212.6 709.9,208.9 715.0,236.1 706.5,240.1" fill="#818181" stroke="#818181" stroke-width="0.8" stroke-linejoin="round"/>
<polygon points="698.6,211.1 700.6,212.6 706.5,240.1 704.7,238.5" fill="#616161" stroke="#616161" stroke-width="0.8" stroke-linejoin="round"/>
<polygon points="821.2,212.7 824.4,210.8 823.8,215.7 820.7,217.6" fill="#d4d4d4" stroke="#d4d4d4" stroke-width="0.8" stroke-linejoin="round"/>
<polygon points="816.8,210.6 821.2,212.7 820.7,217.6 816.3,215.5" fill="#bdbdbd" stroke="#bdbdbd" stroke-width="0.8" stroke-linejoin="round"/>
<polygon points="744.1,209.5 746.0,210.7 747.9,231.8 746.1,230.5" fill="#7a4d25" stroke="#7a4d25" stroke-width="0.8" stroke-linejoin="round"/>
<polygon points="834.5,227.0 836.4,225.7 836.2,226.7 834.3,228.0" fill="#b4b4b4" stroke="#b4b4b4" stroke-width="0.8" stroke-linejoin="round"/>
<polygon points="747.2,206.0 753.9,210.0 755.8,237.3 749.5,232.9" fill="#616161" stroke="#616161" stroke-width="0.8" stroke-linejoin="round"/>
<polygon points="835.5,218.4 837.5,217.1 836.0,226.0 834.1,227.3" fill="#5893b1" stroke="#5893b1" stroke-width="0.8" stroke-linejoin="round"/>
<polygon points="697.2,213.9 700.6,212.6 706.5,240.1 703.4,241.6" fill="#818181" stroke="#818181" stroke-width="0.8" stroke-linejoin="round"/>
<polygon points="746.0,210.7 748.0,211.9 749.8,233.1 747.9,231.8" fill="#7a4d25" stroke="#7a4d25" stroke-width="0.8" stroke-linejoin="round"/>
<polygon points="709.7,216.4 712.3,215.3 716.0,235.6 713.6,236.7" fill="#7a4d25" stroke="#7a4d25" stroke-width="0.8" stroke-linejoin="round"/>
<polygon points="828.2,216.8 834.8,212.7 830.5,240.3 824.3,244.7" fill="#8a8a8a" stroke="#8a8a8a" stroke-width="0.8" stroke-linejoin="round"/>
<polygon points="832.5,228.4 834.5,227.0 834.3,228.0 832.3,229.3" fill="#b4b4b4" stroke="#b4b4b4" stroke-width="0.8" stroke-linejoin="round"/>
<polygon points="833.5,219.6 835.5,218.4 834.1,227.3 832.1,228.6" fill="#5893b1" stroke="#5893b1" stroke-width="0.8" stroke-linejoin="round"/>
<polygon points="707.1,217.5 709.7,216.4 713.6,236.7 711.2,237.9" fill="#7a4d25" stroke="#7a4d25" stroke-width="0.8" stroke-linejoin="round"/>
<polygon points="549.4,259.8 551.1,267.8 574.2,298.8 571.8,290.4" fill="#8a8a8a" stroke="#8a8a8a" stroke-width="0.8" stroke-linejoin="round"/>
<polygon points="704.4,218.6 707.1,217.5 711.2,237.9 708.7,239.1" fill="#7a4d25" stroke="#7a4d25" stroke-width="0.8" stroke-linejoin="round"/>
<polygon points="660.1,243.7 661.3,243.2 665.8,248.5 664.6,249.0" fill="#d6d6d6" stroke="#d6d6d6" stroke-width="0.8" stroke-linejoin="round"/>
<polygon points="660.1,243.7 664.6,249.0 664.8,249.7 660.4,244.4" fill="#a2a2a2" stroke="#a2a2a2" stroke-width="0.8" stroke-linejoin="round"/>
<polygon points="656.3,223.0 660.9,228.0 670.7,256.8 666.2,251.4" fill="#616161" stroke="#616161" stroke-width="0.8" stroke-linejoin="round"/>
<polygon points="568.2,284.2 569.9,283.4 572.2,291.7 570.4,292.5" fill="#d6d6d6" stroke="#d6d6d6" stroke-width="0.8" stroke-linejoin="round"/>
<polygon points="753.9,210.0 761.0,214.3 762.3,242.0 755.8,237.3" fill="#616161" stroke="#616161" stroke-width="0.8" stroke-linejoin="round"/>
<polygon points="569.9,283.4 572.2,291.7 572.7,292.4 570.4,284.1" fill="#bcbcbc" stroke="#bcbcbc" stroke-width="0.8" stroke-linejoin="round"/>
<polygon points="672.3,247.1 677.4,244.8 679.9,247.4 674.7,249.8" fill="#f7f7f7" stroke="#f7f7f7" stroke-width="0.8" stroke-linejoin="round"/>
<polygon points="747.0,215.2 755.7,211.1 757.4,238.5 749.4,242.9" fill="#818181" stroke="#818181" stroke-width="0.8" stroke-linejoin="round"/>
<polygon points="672.3,247.1 674.7,249.8 676.2,254.3 673.8,251.6" fill="#bdbdbd" stroke="#bdbdbd" stroke-width="0.8" stroke-linejoin="round"/>
<polygon points="821.3,221.1 828.2,216.8 824.3,244.7 817.8,249.4" fill="#8a8a8a" stroke="#8a8a8a" stroke-width="0.8" stroke-linejoin="round"/>
<polygon points="674.7,249.8 679.9,247.4 681.2,251.9 676.2,254.3" fill="#d4d4d4" stroke="#d4d4d4" stroke-width="0.8" stroke-linejoin="round"/>
<polygon points="551.1,267.8 552.9,276.6 576.7,307.8 574.2,298.8" fill="#8a8a8a" stroke="#8a8a8a" stroke-width="0.8" stroke-linejoin="round"/>
<polygon points="761.0,214.3 768.5,218.8 769.3,246.9 762.3,242.0" fill="#616161" stroke="#616161" stroke-width="0.8" stroke-linejoin="round"/>
<polygon points="664.6,249.0 665.8,248.5 670.5,254.1 669.3,254.6" fill="#d6d6d6" stroke="#d6d6d6" stroke-width="0.8" stroke-linejoin="round"/>
<polygon points="737.7,219.4 747.0,215.2 749.4,242.9 741.0,247.6" fill="#818181" stroke="#818181" stroke-width="0.8" stroke-linejoin="round"/>
<polygon points="664.6,249.0 669.3,254.6 669.5,255.3 664.8,249.7" fill="#a2a2a2" stroke="#a2a2a2" stroke-width="0.8" stroke-linejoin="round"/>
<polygon points="660.9,228.0 665.9,233.4 675.5,262.5 670.7,256.8" fill="#616161" stroke="#616161" stroke-width="0.8" stroke-linejoin="round"/>
<polygon points="570.4,292.5 572.2,291.7 574.6,300.5 572.8,301.4" fill="#d6d6d6" stroke="#d6d6d6" stroke-width="0.8" stroke-linejoin="round"/>
<polygon points="572.2,291.7 574.6,300.5 575.2,301.3 572.7,292.4" fill="#bcbcbc" stroke="#bcbcbc" stroke-width="0.8" stroke-linejoin="round"/>
<polygon points="775.7,230.5 779.5,228.4 783.5,230.8 779.7,232.9" fill="#f7f7f7" stroke="#f7f7f7" stroke-width="0.8" stroke-linejoin="round"/>
<polygon points="741.4,232.7 745.6,230.6 749.0,233.0 744.8,235.2" fill="#f7f7f7" stroke="#f7f7f7" stroke-width="0.8" stroke-linejoin="round"/>
<polygon points="813.9,225.7 821.3,221.1 817.8,249.4 811.0,254.3" fill="#8a8a8a" stroke="#8a8a8a" stroke-width="0.8" stroke-linejoin="round"/>
<polygon points="779.7,232.9 783.5,230.8 783.4,235.5 779.6,237.7" fill="#d4d4d4" stroke="#d4d4d4" stroke-width="0.8" stroke-linejoin="round"/>
<polygon points="775.7,230.5 779.7,232.9 779.6,237.7 775.8,235.2" fill="#bdbdbd" stroke="#bdbdbd" stroke-width="0.8" stroke-linejoin="round"/>
<polygon points="741.4,232.7 744.8,235.2 745.3,240.0 741.9,237.4" fill="#bdbdbd" stroke="#bdbdbd" stroke-width="0.8" stroke-linejoin="round"/>
<polygon points="728.0,223.9 737.7,219.4 741.0,247.6 732.1,252.4" fill="#818181" stroke="#818181" stroke-width="0.8" stroke-linejoin="round"/>
<polygon points="744.8,235.2 749.0,233.0 749.4,237.7 745.3,240.0" fill="#d4d4d4" stroke="#d4d4d4" stroke-width="0.8" stroke-linejoin="round"/>
<polygon points="768.5,218.8 776.4,223.5 776.6,252.0 769.3,246.9" fill="#616161" stroke="#616161" stroke-width="0.8" stroke-linejoin="round"/>
<polygon points="552.9,276.6 554.9,286.1 579.4,317.5 576.7,307.8" fill="#8a8a8a" stroke="#8a8a8a" stroke-width="0.8" stroke-linejoin="round"/>
<polygon points="659.5,251.6 665.4,249.0 667.9,252.0 662.0,254.7" fill="#f7f7f7" stroke="#f7f7f7" stroke-width="0.8" stroke-linejoin="round"/>
<polygon points="659.5,251.6 662.0,254.7 663.8,259.7 661.4,256.6" fill="#bdbdbd" stroke="#bdbdbd" stroke-width="0.8" stroke-linejoin="round"/>
<polygon points="669.3,254.6 670.5,254.1 675.5,260.0 674.3,260.6" fill="#d6d6d6" stroke="#d6d6d6" stroke-width="0.8" stroke-linejoin="round"/>
<polygon points="669.3,254.6 674.3,260.6 674.5,261.3 669.5,255.3" fill="#a2a2a2" stroke="#a2a2a2" stroke-width="0.8" stroke-linejoin="round"/>
<polygon points="665.9,233.4 671.1,239.1 680.6,268.6 675.5,262.5" fill="#616161" stroke="#616161" stroke-width="0.8" stroke-linejoin="round"/>
<polygon points="717.6,228.7 728.0,223.9 732.1,252.4 722.7,257.6" fill="#818181" stroke="#818181" stroke-width="0.8" stroke-linejoin="round"/>
<polygon points="662.0,254.7 667.9,252.0 669.6,257.0 663.8,259.7" fill="#d4d4d4" stroke="#d4d4d4" stroke-width="0.8" stroke-linejoin="round"/>
<polygon points="696.9,244.4 702.0,242.0 705.0,244.7 699.8,247.3" fill="#f7f7f7" stroke="#f7f7f7" stroke-width="0.8" stroke-linejoin="round"/>
<polygon points="572.8,301.4 574.6,300.5 577.3,310.1 575.4,311.1" fill="#d6d6d6" stroke="#d6d6d6" stroke-width="0.8" stroke-linejoin="round"/>
<polygon points="806.1,230.5 813.9,225.7 811.0,254.3 803.7,259.5" fill="#8a8a8a" stroke="#8a8a8a" stroke-width="0.8" stroke-linejoin="round"/>
<polygon points="574.6,300.5 577.3,310.1 577.9,310.9 575.2,301.3" fill="#bcbcbc" stroke="#bcbcbc" stroke-width="0.8" stroke-linejoin="round"/>
<polygon points="696.9,244.4 699.8,247.3 701.0,252.2 698.1,249.3" fill="#bdbdbd" stroke="#bdbdbd" stroke-width="0.8" stroke-linejoin="round"/>
<polygon points="776.4,223.5 784.8,228.6 784.3,257.5 776.6,252.0" fill="#616161" stroke="#616161" stroke-width="0.8" stroke-linejoin="round"/>
<polygon points="674.3,260.6 675.5,260.0 675.8,260.7 674.5,261.3" fill="#b4b4b4" stroke="#b4b4b4" stroke-width="0.8" stroke-linejoin="round"/>
<polygon points="699.8,247.3 705.0,244.7 706.1,249.6 701.0,252.2" fill="#d4d4d4" stroke="#d4d4d4" stroke-width="0.8" stroke-linejoin="round"/>
<polygon points="673.3,253.8 675.2,256.1 678.5,266.1 676.5,263.7" fill="#0a0a0a" stroke="#0a0a0a" stroke-width="0.8" stroke-linejoin="round"/>
<polygon points="706.6,233.8 717.6,228.7 722.7,257.6 712.8,263.0" fill="#818181" stroke="#818181" stroke-width="0.8" stroke-linejoin="round"/>
<polygon points="554.9,286.1 557.1,296.6 582.3,328.1 579.4,317.5" fill="#8a8a8a" stroke="#8a8a8a" stroke-width="0.8" stroke-linejoin="round"/>
<polygon points="675.2,256.1 677.2,258.4 680.4,268.4 678.5,266.1" fill="#0a0a0a" stroke="#0a0a0a" stroke-width="0.8" stroke-linejoin="round"/>
<polygon points="671.1,239.1 676.7,245.2 686.0,275.1 680.6,268.6" fill="#616161" stroke="#616161" stroke-width="0.8" stroke-linejoin="round"/>
<polygon points="695.0,239.1 706.6,233.8 712.8,263.0 702.4,268.7" fill="#818181" stroke="#818181" stroke-width="0.8" stroke-linejoin="round"/>
<polygon points="784.8,228.6 793.8,234.0 792.5,263.3 784.3,257.5" fill="#616161" stroke="#616161" stroke-width="0.8" stroke-linejoin="round"/>
<polygon points="797.8,235.6 806.1,230.5 803.7,259.5 796.1,265.0" fill="#8a8a8a" stroke="#8a8a8a" stroke-width="0.8" stroke-linejoin="round"/>
<polygon points="793.8,234.0 796.7,232.3 795.1,261.4 792.5,263.3" fill="#818181" stroke="#818181" stroke-width="0.8" stroke-linejoin="round"/>
<polygon points="677.2,258.4 679.3,260.8 682.5,270.8 680.4,268.4" fill="#0a0a0a" stroke="#0a0a0a" stroke-width="0.8" stroke-linejoin="round"/>
<polygon points="575.4,311.1 577.3,310.1 580.2,320.5 578.2,321.6" fill="#d6d6d6" stroke="#d6d6d6" stroke-width="0.8" stroke-linejoin="round"/>
<polygon points="577.3,310.1 580.2,320.5 580.8,321.2 577.9,310.9" fill="#bcbcbc" stroke="#bcbcbc" stroke-width="0.8" stroke-linejoin="round"/>
<polygon points="680.5,242.7 682.6,244.9 691.3,274.8 689.3,272.5" fill="#616161" stroke="#616161" stroke-width="0.8" stroke-linejoin="round"/>
<polygon points="682.6,244.9 695.0,239.1 702.4,268.7 691.3,274.8" fill="#818181" stroke="#818181" stroke-width="0.8" stroke-linejoin="round"/>
<polygon points="679.3,260.8 681.4,263.2 684.5,273.3 682.5,270.8" fill="#0a0a0a" stroke="#0a0a0a" stroke-width="0.8" stroke-linejoin="round"/>
<polygon points="707.2,253.5 712.4,250.8 715.7,253.9 710.4,256.7" fill="#f7f7f7" stroke="#f7f7f7" stroke-width="0.8" stroke-linejoin="round"/>
<polygon points="707.2,253.5 710.4,256.7 711.5,261.7 708.3,258.5" fill="#bdbdbd" stroke="#bdbdbd" stroke-width="0.8" stroke-linejoin="round"/>
<polygon points="557.1,296.6 559.4,308.0 585.5,339.5 582.3,328.1" fill="#8a8a8a" stroke="#8a8a8a" stroke-width="0.8" stroke-linejoin="round"/>
<polygon points="695.7,247.3 699.1,245.7 704.4,267.6 701.3,269.3" fill="#7a4d25" stroke="#7a4d25" stroke-width="0.8" stroke-linejoin="round"/>
<polygon points="764.4,242.8 765.2,242.4 771.9,247.0 771.1,247.5" fill="#d8d8d8" stroke="#d8d8d8" stroke-width="0.8" stroke-linejoin="round"/>
<polygon points="764.4,242.8 771.1,247.5 771.5,268.3 765.3,263.4" fill="#4a4a4a" stroke="#4a4a4a" stroke-width="0.8" stroke-linejoin="round"/>
<polygon points="676.7,245.2 682.8,251.7 691.8,282.0 686.0,275.1" fill="#616161" stroke="#616161" stroke-width="0.8" stroke-linejoin="round"/>
<polygon points="710.4,256.7 715.7,253.9 716.7,258.9 711.5,261.7" fill="#d4d4d4" stroke="#d4d4d4" stroke-width="0.8" stroke-linejoin="round"/>
<polygon points="789.0,241.0 797.8,235.6 796.1,265.0 788.1,270.7" fill="#8a8a8a" stroke="#8a8a8a" stroke-width="0.8" stroke-linejoin="round"/>
<polygon points="692.3,249.0 695.7,247.3 701.3,269.3 698.2,271.0" fill="#7a4d25" stroke="#7a4d25" stroke-width="0.8" stroke-linejoin="round"/>
<polygon points="688.8,250.6 692.3,249.0 698.2,271.0 695.0,272.8" fill="#7a4d25" stroke="#7a4d25" stroke-width="0.8" stroke-linejoin="round"/>
<polygon points="627.7,269.0 632.9,266.5 636.9,273.0 631.5,275.6" fill="#f7f7f7" stroke="#f7f7f7" stroke-width="0.8" stroke-linejoin="round"/>
<polygon points="627.7,269.0 631.5,275.6 633.0,278.6 629.1,272.0" fill="#bdbdbd" stroke="#bdbdbd" stroke-width="0.8" stroke-linejoin="round"/>
<polygon points="563.9,305.6 564.7,309.4 571.6,317.9 570.6,314.1" fill="#5893b1" stroke="#5893b1" stroke-width="0.8" stroke-linejoin="round"/>
<polygon points="578.2,321.6 580.2,320.5 583.3,331.8 581.3,333.0" fill="#d6d6d6" stroke="#d6d6d6" stroke-width="0.8" stroke-linejoin="round"/>
<polygon points="580.2,320.5 583.3,331.8 583.9,332.6 580.8,321.2" fill="#bcbcbc" stroke="#bcbcbc" stroke-width="0.8" stroke-linejoin="round"/>
<polygon points="771.1,247.5 771.9,247.0 778.9,251.9 778.1,252.5" fill="#d8d8d8" stroke="#d8d8d8" stroke-width="0.8" stroke-linejoin="round"/>
<polygon points="771.1,247.5 778.1,252.5 778.1,273.4 771.5,268.3" fill="#4a4a4a" stroke="#4a4a4a" stroke-width="0.8" stroke-linejoin="round"/>
<polygon points="564.7,309.4 565.6,313.3 572.5,321.8 571.6,317.9" fill="#5893b1" stroke="#5893b1" stroke-width="0.8" stroke-linejoin="round"/>
<polygon points="778.1,252.5 778.9,251.9 778.8,272.9 778.1,273.4" fill="#555" stroke="#555" stroke-width="0.8" stroke-linejoin="round"/>
<polygon points="779.6,246.8 789.0,241.0 788.1,270.7 779.5,276.8" fill="#8a8a8a" stroke="#8a8a8a" stroke-width="0.8" stroke-linejoin="round"/>
<polygon points="682.8,251.7 689.3,258.7 697.9,289.4 691.8,282.0" fill="#616161" stroke="#616161" stroke-width="0.8" stroke-linejoin="round"/>
<polygon points="559.4,308.0 562.0,320.6 588.9,352.0 585.5,339.5" fill="#8a8a8a" stroke="#8a8a8a" stroke-width="0.8" stroke-linejoin="round"/>
<polygon points="565.6,313.3 566.5,317.4 573.5,325.8 572.5,321.8" fill="#5893b1" stroke="#5893b1" stroke-width="0.8" stroke-linejoin="round"/>
<polygon points="631.5,275.6 636.9,273.0 641.1,279.9 635.6,282.6" fill="#f7f7f7" stroke="#f7f7f7" stroke-width="0.8" stroke-linejoin="round"/>
<polygon points="631.5,275.6 635.6,282.6 637.1,285.7 633.0,278.6" fill="#bdbdbd" stroke="#bdbdbd" stroke-width="0.8" stroke-linejoin="round"/>
<polygon points="747.8,252.4 748.7,251.9 755.3,257.0 754.4,257.6" fill="#d8d8d8" stroke="#d8d8d8" stroke-width="0.8" stroke-linejoin="round"/>
<polygon points="747.8,252.4 754.4,257.6 756.0,278.7 749.8,273.3" fill="#4a4a4a" stroke="#4a4a4a" stroke-width="0.8" stroke-linejoin="round"/>
<polygon points="566.5,317.4 567.5,321.6 574.6,330.0 573.5,325.8" fill="#5893b1" stroke="#5893b1" stroke-width="0.8" stroke-linejoin="round"/>
<polygon points="581.3,333.0 583.3,331.8 586.7,344.2 584.6,345.4" fill="#d6d6d6" stroke="#d6d6d6" stroke-width="0.8" stroke-linejoin="round"/>
<polygon points="583.3,331.8 586.7,344.2 587.3,344.9 583.9,332.6" fill="#bcbcbc" stroke="#bcbcbc" stroke-width="0.8" stroke-linejoin="round"/>
<polygon points="769.7,252.9 779.6,246.8 779.5,276.8 770.5,283.3" fill="#8a8a8a" stroke="#8a8a8a" stroke-width="0.8" stroke-linejoin="round"/>
<polygon points="567.5,321.6 568.5,325.9 575.6,334.3 574.6,330.0" fill="#5893b1" stroke="#5893b1" stroke-width="0.8" stroke-linejoin="round"/>
<polygon points="754.4,257.6 755.3,257.0 762.2,262.5 761.3,263.1" fill="#d8d8d8" stroke="#d8d8d8" stroke-width="0.8" stroke-linejoin="round"/>
<polygon points="754.4,257.6 761.3,263.1 762.5,284.3 756.0,278.7" fill="#4a4a4a" stroke="#4a4a4a" stroke-width="0.8" stroke-linejoin="round"/>
<polygon points="635.6,282.6 641.1,279.9 645.5,287.3 639.9,290.2" fill="#f7f7f7" stroke="#f7f7f7" stroke-width="0.8" stroke-linejoin="round"/>
<polygon points="689.3,258.7 696.2,266.3 704.5,297.2 697.9,289.4" fill="#616161" stroke="#616161" stroke-width="0.8" stroke-linejoin="round"/>
<polygon points="635.6,282.6 639.9,290.2 641.4,293.3 637.1,285.7" fill="#bdbdbd" stroke="#bdbdbd" stroke-width="0.8" stroke-linejoin="round"/>
<polygon points="562.0,320.6 564.9,334.6 592.7,365.7 588.9,352.0" fill="#8a8a8a" stroke="#8a8a8a" stroke-width="0.8" stroke-linejoin="round"/>
<polygon points="761.3,263.1 762.2,262.5 763.3,283.8 762.5,284.3" fill="#555" stroke="#555" stroke-width="0.8" stroke-linejoin="round"/>
<polygon points="568.5,325.9 569.5,330.3 576.7,338.7 575.6,334.3" fill="#5893b1" stroke="#5893b1" stroke-width="0.8" stroke-linejoin="round"/>
<polygon points="729.2,263.1 730.2,262.5 736.6,268.3 735.6,268.9" fill="#d8d8d8" stroke="#d8d8d8" stroke-width="0.8" stroke-linejoin="round"/>
<polygon points="729.2,263.1 735.6,268.9 738.6,290.3 732.6,284.3" fill="#4a4a4a" stroke="#4a4a4a" stroke-width="0.8" stroke-linejoin="round"/>
<polygon points="759.0,259.5 769.7,252.9 770.5,283.3 760.9,290.2" fill="#8a8a8a" stroke="#8a8a8a" stroke-width="0.8" stroke-linejoin="round"/>
<polygon points="639.9,290.2 645.5,287.3 647.0,290.3 641.4,293.3" fill="#d4d4d4" stroke="#d4d4d4" stroke-width="0.8" stroke-linejoin="round"/>
<polygon points="584.9,334.1 599.6,326.0 603.8,338.2 588.6,347.0" fill="#f7f7f7" stroke="#f7f7f7" stroke-width="0.8" stroke-linejoin="round"/>
<polygon points="599.6,326.0 603.8,338.2 608.0,343.7 603.7,331.6" fill="#dadada" stroke="#dadada" stroke-width="0.8" stroke-linejoin="round"/>
<polygon points="584.6,345.4 586.7,344.2 590.5,357.7 588.3,359.1" fill="#d6d6d6" stroke="#d6d6d6" stroke-width="0.8" stroke-linejoin="round"/>
<polygon points="586.7,344.2 590.5,357.7 591.1,358.4 587.3,344.9" fill="#bcbcbc" stroke="#bcbcbc" stroke-width="0.8" stroke-linejoin="round"/>
<polygon points="735.6,268.9 736.6,268.3 743.4,274.4 742.4,275.0" fill="#d8d8d8" stroke="#d8d8d8" stroke-width="0.8" stroke-linejoin="round"/>
<polygon points="735.6,268.9 742.4,275.0 745.0,296.6 738.6,290.3" fill="#4a4a4a" stroke="#4a4a4a" stroke-width="0.8" stroke-linejoin="round"/>
<polygon points="696.2,266.3 703.8,274.5 711.6,305.7 704.5,297.2" fill="#616161" stroke="#616161" stroke-width="0.8" stroke-linejoin="round"/>
<polygon points="747.6,266.5 759.0,259.5 760.9,290.2 750.7,297.5" fill="#8a8a8a" stroke="#8a8a8a" stroke-width="0.8" stroke-linejoin="round"/>
<polygon points="564.9,334.6 568.2,350.3 596.9,380.7 592.7,365.7" fill="#8a8a8a" stroke="#8a8a8a" stroke-width="0.8" stroke-linejoin="round"/>
<polygon points="742.4,275.0 743.4,274.4 745.9,295.9 745.0,296.6" fill="#555" stroke="#555" stroke-width="0.8" stroke-linejoin="round"/>
<polygon points="588.6,347.0 603.8,338.2 608.4,351.5 592.6,361.2" fill="#f7f7f7" stroke="#f7f7f7" stroke-width="0.8" stroke-linejoin="round"/>
<polygon points="603.8,338.2 608.4,351.5 612.6,356.9 608.0,343.7" fill="#dadada" stroke="#dadada" stroke-width="0.8" stroke-linejoin="round"/>
<polygon points="588.3,359.1 590.5,357.7 594.6,372.6 592.3,374.1" fill="#d6d6d6" stroke="#d6d6d6" stroke-width="0.8" stroke-linejoin="round"/>
<polygon points="590.5,357.7 594.6,372.6 595.3,373.3 591.1,358.4" fill="#bcbcbc" stroke="#bcbcbc" stroke-width="0.8" stroke-linejoin="round"/>
<polygon points="735.3,274.1 747.6,266.5 750.7,297.5 739.8,305.3" fill="#8a8a8a" stroke="#8a8a8a" stroke-width="0.8" stroke-linejoin="round"/>
<polygon points="703.8,274.5 711.9,283.3 719.1,314.7 711.6,305.7" fill="#616161" stroke="#616161" stroke-width="0.8" stroke-linejoin="round"/>
<polygon points="592.6,361.2 608.4,351.5 612.6,356.9 597.3,366.6" fill="#d4d4d4" stroke="#d4d4d4" stroke-width="0.8" stroke-linejoin="round"/>
<polygon points="568.2,350.3 571.8,367.8 601.5,397.3 596.9,380.7" fill="#8a8a8a" stroke="#8a8a8a" stroke-width="0.8" stroke-linejoin="round"/>
<polygon points="592.3,374.1 594.6,372.6 595.3,373.3 592.9,374.8" fill="#b4b4b4" stroke="#b4b4b4" stroke-width="0.8" stroke-linejoin="round"/>
<polygon points="722.1,282.3 735.3,274.1 739.8,305.3 728.2,313.6" fill="#8a8a8a" stroke="#8a8a8a" stroke-width="0.8" stroke-linejoin="round"/>
<polygon points="711.9,283.3 716.6,280.5 723.2,311.9 719.1,314.7" fill="#818181" stroke="#818181" stroke-width="0.8" stroke-linejoin="round"/>
<polygon points="562.6,373.3 571.8,367.8 601.5,397.3 594.1,402.5" fill="#818181" stroke="#818181" stroke-width="0.8" stroke-linejoin="round"/>
<polygon points="707.8,291.1 722.1,282.3 728.2,313.6 715.7,322.6" fill="#8a8a8a" stroke="#8a8a8a" stroke-width="0.8" stroke-linejoin="round"/>
<polygon points="563.7,379.9 590.8,363.2 617.4,393.0 595.6,408.6" fill="#8a8a8a" stroke="#8a8a8a" stroke-width="0.8" stroke-linejoin="round"/>
<polygon points="692.4,300.6 707.8,291.1 715.7,322.6 702.3,332.1" fill="#8a8a8a" stroke="#8a8a8a" stroke-width="0.8" stroke-linejoin="round"/>
<polygon points="590.8,363.2 615.1,348.2 637.3,378.7 617.4,393.0" fill="#8a8a8a" stroke="#8a8a8a" stroke-width="0.8" stroke-linejoin="round"/>
<polygon points="675.6,310.9 692.4,300.6 702.3,332.1 687.9,342.5" fill="#8a8a8a" stroke="#8a8a8a" stroke-width="0.8" stroke-linejoin="round"/>
<polygon points="615.1,348.2 637.2,334.6 655.6,365.6 637.3,378.7" fill="#8a8a8a" stroke="#8a8a8a" stroke-width="0.8" stroke-linejoin="round"/>
<polygon points="657.2,322.2 675.6,310.9 687.9,342.5 672.4,353.6" fill="#8a8a8a" stroke="#8a8a8a" stroke-width="0.8" stroke-linejoin="round"/>
<polygon points="637.2,334.6 657.2,322.2 672.4,353.6 655.6,365.6" fill="#8a8a8a" stroke="#8a8a8a" stroke-width="0.8" stroke-linejoin="round"/>
<polygon points="694.3,308.9 699.3,305.7 702.3,316.1 697.6,319.3" fill="#5893b1" stroke="#5893b1" stroke-width="0.8" stroke-linejoin="round"/>
<polygon points="698.5,318.7 703.2,315.5 703.5,316.6 698.8,319.8" fill="#b4b4b4" stroke="#b4b4b4" stroke-width="0.8" stroke-linejoin="round"/>
<polygon points="689.2,312.2 694.3,308.9 697.6,319.3 692.7,322.5" fill="#5893b1" stroke="#5893b1" stroke-width="0.8" stroke-linejoin="round"/>
<polygon points="693.6,321.9 698.5,318.7 698.8,319.8 694.0,323.0" fill="#b4b4b4" stroke="#b4b4b4" stroke-width="0.8" stroke-linejoin="round"/>
<polygon points="684.0,315.5 689.2,312.2 692.7,322.5 687.8,325.9" fill="#5893b1" stroke="#5893b1" stroke-width="0.8" stroke-linejoin="round"/>
<polygon points="688.7,325.3 693.6,321.9 694.0,323.0 689.1,326.4" fill="#b4b4b4" stroke="#b4b4b4" stroke-width="0.8" stroke-linejoin="round"/>
<polygon points="678.6,319.0 684.0,315.5 687.8,325.9 682.6,329.3" fill="#5893b1" stroke="#5893b1" stroke-width="0.8" stroke-linejoin="round"/>
<polygon points="683.6,328.7 688.7,325.3 689.1,326.4 684.0,329.8" fill="#b4b4b4" stroke="#b4b4b4" stroke-width="0.8" stroke-linejoin="round"/>
<polygon points="673.1,322.5 678.6,319.0 682.6,329.3 677.4,332.9" fill="#5893b1" stroke="#5893b1" stroke-width="0.8" stroke-linejoin="round"/>
<polygon points="678.4,332.2 683.6,328.7 684.0,329.8 678.8,333.3" fill="#b4b4b4" stroke="#b4b4b4" stroke-width="0.8" stroke-linejoin="round"/>
<polygon points="667.4,326.2 673.1,322.5 677.4,332.9 672.0,336.5" fill="#5893b1" stroke="#5893b1" stroke-width="0.8" stroke-linejoin="round"/>
<polygon points="661.5,329.9 667.4,326.2 672.0,336.5 666.5,340.2" fill="#5893b1" stroke="#5893b1" stroke-width="0.8" stroke-linejoin="round"/>
<polygon points="673.0,335.8 678.4,332.2 678.8,333.3 673.5,336.9" fill="#b4b4b4" stroke="#b4b4b4" stroke-width="0.8" stroke-linejoin="round"/>
<polygon points="655.5,333.8 661.5,329.9 666.5,340.2 660.8,344.1" fill="#5893b1" stroke="#5893b1" stroke-width="0.8" stroke-linejoin="round"/>
<polygon points="667.5,339.5 673.0,335.8 673.5,336.9 668.0,340.6" fill="#b4b4b4" stroke="#b4b4b4" stroke-width="0.8" stroke-linejoin="round"/>
<polygon points="661.8,343.4 667.5,339.5 668.0,340.6 662.4,344.4" fill="#b4b4b4" stroke="#b4b4b4" stroke-width="0.8" stroke-linejoin="round"/>
<line x1="767.6" y1="217.1" x2="847.2" y2="177.4" stroke="#e6e6e6" stroke-width="0.8"/>
<line x1="608.1" y1="230.4" x2="636.2" y2="277.7" stroke="#e6e6e6" stroke-width="0.8"/>
<line x1="636.2" y1="277.7" x2="666.2" y2="239.0" stroke="#e6e6e6" stroke-width="0.8"/>
<line x1="591.7" y1="207.0" x2="632.3" y2="201.1" stroke="#e6e6e6" stroke-width="0.8"/>
<polygon points="778.3,141.0 779.7,140.6 894.3,173.5 893.1,174.2" fill="#b1b1b1" stroke="#b1b1b1" stroke-width="0.8" stroke-linejoin="round"/>
<polygon points="769.6,157.1 800.8,147.5 802.5,148.0 771.2,157.7" fill="#b1b1b1" stroke="#b1b1b1" stroke-width="0.8" stroke-linejoin="round"/>
<polygon points="745.8,149.5 747.4,149.1 771.2,157.7 769.5,158.2" fill="#b1b1b1" stroke="#b1b1b1" stroke-width="0.8" stroke-linejoin="round"/>
<polygon points="533.2,204.0 778.3,140.2 779.7,140.6 533.4,205.3" fill="#b1b1b1" stroke="#b1b1b1" stroke-width="0.8" stroke-linejoin="round"/>
<polygon points="681.3,166.5 683.7,165.8 710.0,181.3 707.5,182.2" fill="#b1b1b1" stroke="#b1b1b1" stroke-width="0.8" stroke-linejoin="round"/>
<polygon points="619.2,182.8 622.5,181.9 642.7,203.1 639.1,204.3" fill="#b1b1b1" stroke="#b1b1b1" stroke-width="0.8" stroke-linejoin="round"/>
<polygon points="544.3,234.9 710.0,181.3 711.6,182.3 544.7,236.9" fill="#b1b1b1" stroke="#b1b1b1" stroke-width="0.8" stroke-linejoin="round"/>
<polygon points="673.3,194.8 676.5,193.8 700.6,212.6 697.2,213.9" fill="#b1b1b1" stroke="#b1b1b1" stroke-width="0.8" stroke-linejoin="round"/>
<polygon points="698.6,211.1 733.2,197.6 735.2,198.8 700.6,212.6" fill="#b1b1b1" stroke="#b1b1b1" stroke-width="0.8" stroke-linejoin="round"/>
<polygon points="709.1,183.1 711.6,182.3 796.7,232.3 793.8,234.0" fill="#b1b1b1" stroke="#b1b1b1" stroke-width="0.8" stroke-linejoin="round"/>
<polygon points="533.4,205.3 537.9,204.2 571.8,367.8 562.6,373.3" fill="#b1b1b1" stroke="#b1b1b1" stroke-width="0.8" stroke-linejoin="round"/>
<polygon points="640.3,205.6 643.9,204.4 716.6,280.5 711.9,283.3" fill="#b1b1b1" stroke="#b1b1b1" stroke-width="0.8" stroke-linejoin="round"/>
<polygon points="680.5,242.7 753.3,209.7 755.7,211.1 682.6,244.9" fill="#b1b1b1" stroke="#b1b1b1" stroke-width="0.8" stroke-linejoin="round"/>
<polygon points="562.6,373.3 894.3,173.5 897.2,174.3 563.7,379.9" fill="#b1b1b1" stroke="#b1b1b1" stroke-width="0.8" stroke-linejoin="round"/>
<polygon points="694.7,190.2 700.4,188.3 703.7,190.4 697.9,192.4" fill="#f7f7f7" stroke="#f7f7f7" stroke-width="0.8" stroke-linejoin="round"/>
<polygon points="694.7,190.2 697.9,192.4 698.7,196.1 695.4,193.8" fill="#bdbdbd" stroke="#bdbdbd" stroke-width="0.8" stroke-linejoin="round"/>
<polygon points="697.9,192.4 703.7,190.4 704.4,194.0 698.7,196.1" fill="#d4d4d4" stroke="#d4d4d4" stroke-width="0.8" stroke-linejoin="round"/>
<polygon points="665.2,205.3 672.1,202.9 675.3,205.6 668.3,208.1" fill="#f7f7f7" stroke="#f7f7f7" stroke-width="0.8" stroke-linejoin="round"/>
<polygon points="665.2,205.3 668.3,208.1 669.5,212.0 666.4,209.1" fill="#bdbdbd" stroke="#bdbdbd" stroke-width="0.8" stroke-linejoin="round"/>
<polygon points="668.3,208.1 675.3,205.6 676.3,209.5 669.5,212.0" fill="#d4d4d4" stroke="#d4d4d4" stroke-width="0.8" stroke-linejoin="round"/>
<polygon points="703.0,213.9 709.6,211.2 713.7,214.3 707.0,217.1" fill="#f7f7f7" stroke="#f7f7f7" stroke-width="0.8" stroke-linejoin="round"/>
<polygon points="703.0,213.9 707.0,217.1 707.8,221.1 703.8,217.9" fill="#bdbdbd" stroke="#bdbdbd" stroke-width="0.8" stroke-linejoin="round"/>
<polygon points="707.0,217.1 713.7,214.3 714.5,218.3 707.8,221.1" fill="#d4d4d4" stroke="#d4d4d4" stroke-width="0.8" stroke-linejoin="round"/>
<polygon points="751.0,226.7 757.2,223.6 762.8,227.1 756.5,230.4" fill="#f7f7f7" stroke="#f7f7f7" stroke-width="0.8" stroke-linejoin="round"/>
<polygon points="751.0,226.7 756.5,230.4 756.7,234.6 751.3,230.9" fill="#bdbdbd" stroke="#bdbdbd" stroke-width="0.8" stroke-linejoin="round"/>
<polygon points="756.5,230.4 762.8,227.1 763.0,231.3 756.7,234.6" fill="#d4d4d4" stroke="#d4d4d4" stroke-width="0.8" stroke-linejoin="round"/>
<polygon points="713.0,245.8 720.8,241.8 726.0,246.3 718.2,250.4" fill="#f7f7f7" stroke="#f7f7f7" stroke-width="0.8" stroke-linejoin="round"/>
<polygon points="713.0,245.8 718.2,250.4 719.0,254.8 713.9,250.1" fill="#bdbdbd" stroke="#bdbdbd" stroke-width="0.8" stroke-linejoin="round"/>
<polygon points="718.2,250.4 726.0,246.3 726.7,250.7 719.0,254.8" fill="#d4d4d4" stroke="#d4d4d4" stroke-width="0.8" stroke-linejoin="round"/>
<polygon points="951.8,392.4 967.9,386.2 984.7,393.6 967.3,403.0" fill="#a3a3a3"/>
<polygon points="951.8,392.4 967.3,403.0 967.3,421.0 954.3,411.0" fill="#7c7c7c"/>
<polygon points="967.3,403.0 984.7,393.6 982.2,409.8 967.3,421.0" fill="#6b6b6b"/>
<path d="M957.2 390.3L973.1 399.9M957.0 395.9L973.5 388.7M957.0 395.9L958.6 414.3M952.6 398.6L967.3 409.0M973.1 399.9L972.3 417.3M967.3 409.0L983.9 399.0M962.5 388.3L978.9 396.7M962.1 399.5L979.1 391.1M962.1 399.5L963.0 417.7M953.5 404.8L967.3 415.0M978.9 396.7L977.2 413.5M967.3 415.0L983.0 404.4" stroke="#4e4e4e" stroke-width="0.7" fill="none"/>
<path d="M951.8 392.4L967.3 403.0L984.7 393.6M967.3 403.0L967.3 421.0" stroke="#b8b8b8" stroke-width="0.5" fill="none"/>
</svg>
<div id="win3dtitle" class="abs">
<svg class="abs" style="left:4px;top:4.5px" width="42" height="11" viewBox="0 0 42 11">
<defs><linearGradient id="wg" x1="0" y1="0" x2="0" y2="1"><stop offset="0" stop-color="#777"/><stop offset="0.5" stop-color="#222"/><stop offset="1" stop-color="#666"/></linearGradient></defs>
<path d="M1 2.5h16M1 4h14M3 5.5h10" stroke="#c9a227" stroke-width="0.8"/>
<text x="12" y="8.6" font-family="Liberation Sans, sans-serif" font-weight="bold" font-style="italic" font-size="9" textLength="27" lengthAdjust="spacingAndGlyphs" fill="url(#wg)" stroke="#8a8a8a" stroke-width="0.3">CAD</text>
<text x="1" y="4" font-family="Liberation Sans, sans-serif" font-weight="bold" font-size="3.6" fill="#999">WS</text>
</svg>
<span class="abs" style="left:55px;top:4px;font-size:9.4px;line-height:12px;color:#c4c4c4;white-space:nowrap">Elektrohandwerk Demoprojekt</span>
<svg class="abs" style="left:453px;top:4.5px" width="36" height="11" viewBox="0 0 36 11"><rect x="4.5" y="3" width="5" height="5" fill="none" stroke="#e8e8e8" stroke-width="0.9"/><path d="M23.5 3l5 5M28.5 3l-5 5" stroke="#e8e8e8" stroke-width="0.9"/></svg>

</div>
<span class="abs" style="left:4.5px;top:29.5px;font-size:6.4px;line-height:8px;color:#f0f0f0;white-space:nowrap">Ansicht</span>
<span class="abs" style="left:57px;top:29.5px;font-size:5.8px;line-height:8px;color:#f0f0f0;white-space:nowrap">KABEL</span>
<div class="abs" style="left:86.5px;top:20.7px;width:104.5px;height:17.3px;background:#cbcbcb"></div>
<svg class="abs" style="left:89px;top:23.5px" width="11" height="11" viewBox="0 0 11 11"><circle cx="6.3" cy="4.4" r="2.3" fill="none" stroke="#111" stroke-width="1.3"/><path d="M4.6 6.2L1.8 9" stroke="#111" stroke-width="1.5"/></svg>

<div id="win3dstatus" class="abs"></div>
</div>
</div>
</body>
</html>
